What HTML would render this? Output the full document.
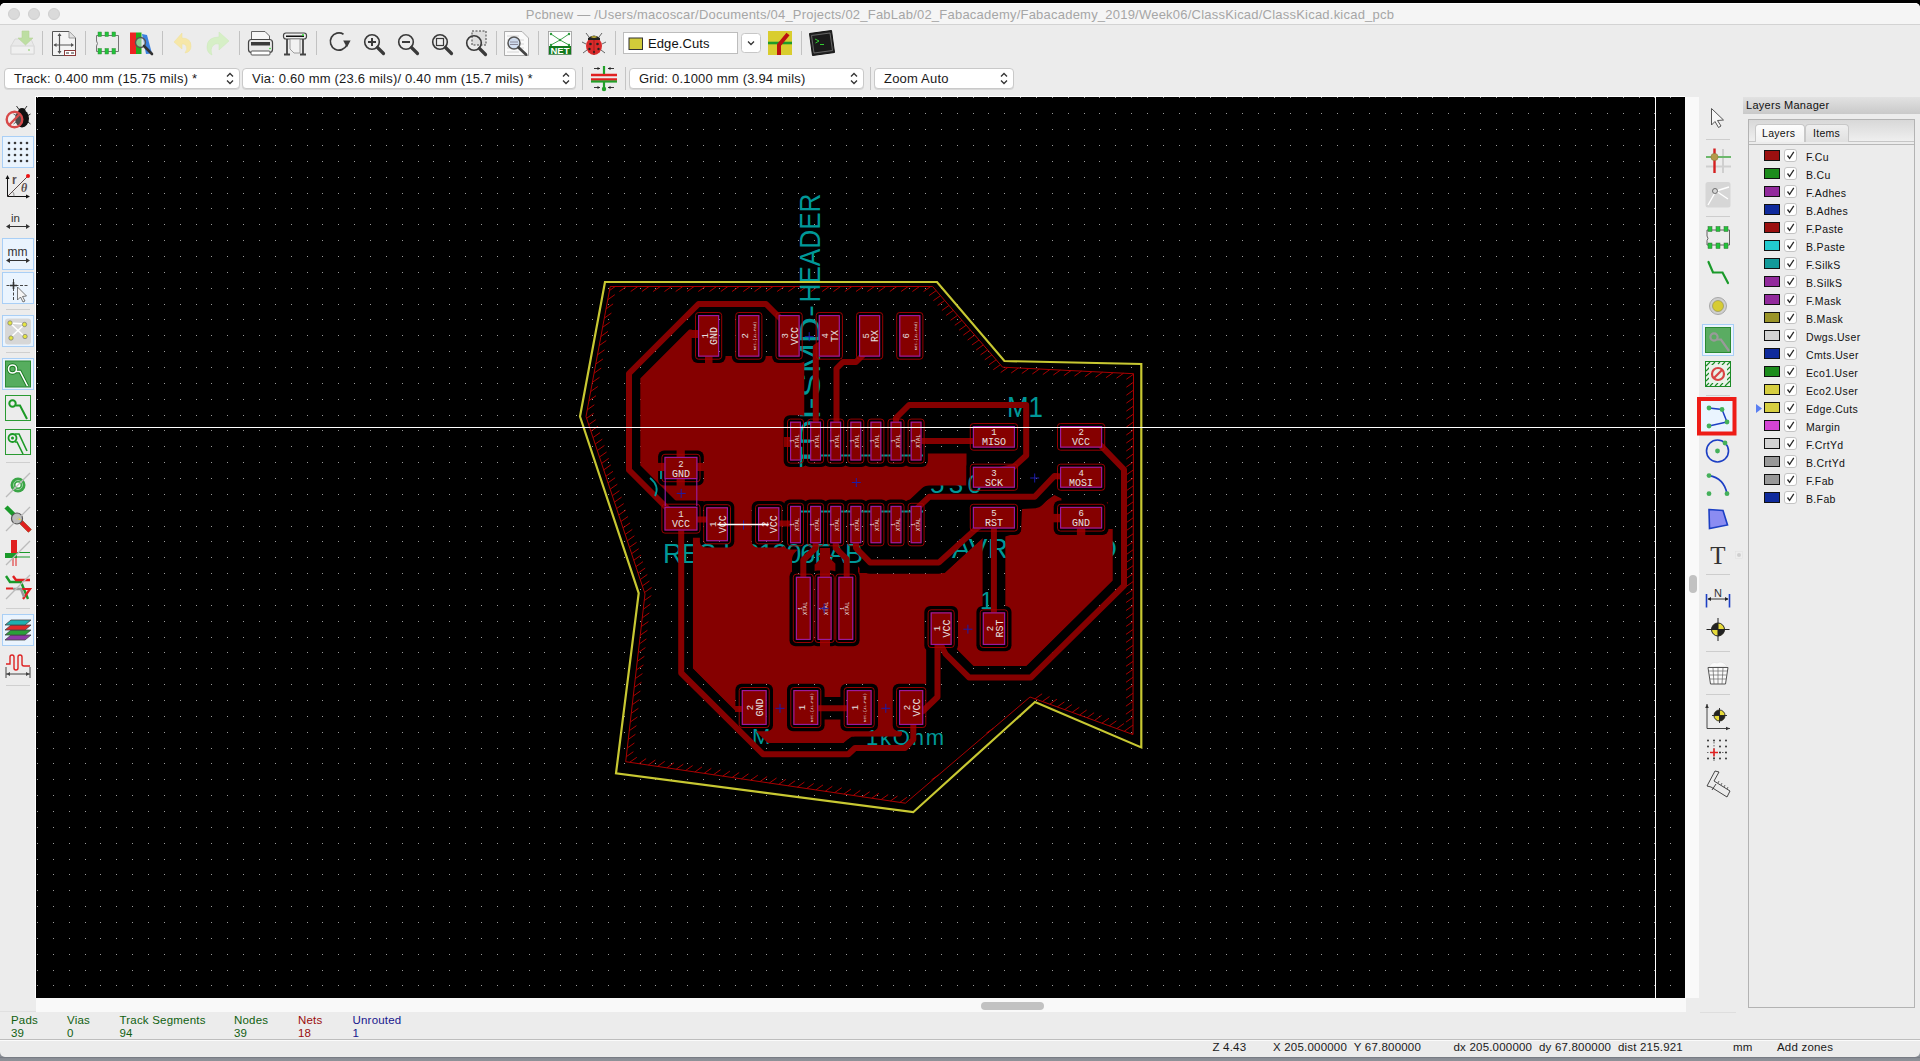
<!DOCTYPE html><html><head><meta charset="utf-8"><style>
*{margin:0;padding:0;box-sizing:border-box}
html,body{width:1920px;height:1061px;overflow:hidden;background:#000;font-family:"Liberation Sans",sans-serif}
.a{position:absolute}
#win{position:absolute;left:0;top:3px;width:1920px;height:1054px;background:#ececec;border-radius:5px}
#bot{position:absolute;left:0;top:1057px;width:1920px;height:4px;background:linear-gradient(#70747c,#8a8e96 40%,#8e9298)}
#title{position:absolute;left:0;top:3px;width:1920px;height:22px;border-radius:5px 5px 0 0;background:#f5f5f5;border-top:1px solid #fdfdfd;border-bottom:1px solid #d3d3d3}
#title .t{position:absolute;left:0;width:1920px;top:3px;text-align:center;font-size:13px;letter-spacing:0.22px;color:#a6a6a6;white-space:nowrap}
.tl{position:absolute;top:4px;width:12px;height:12px;border-radius:50%;background:#dadada;border:1px solid #cfcfcf}
.combo{position:absolute;height:21px;background:#fff;border:1px solid #c9c9c9;border-radius:4px;box-shadow:0 1px 0 #d8d8d8;font-size:13px;letter-spacing:0.2px;color:#1a1a1a;white-space:nowrap;padding-left:9px;line-height:19px}
.combo .ar{position:absolute;right:5px;top:3px}
.sep{position:absolute;width:1px;background:#c4c4c4}
.st{position:absolute;font-size:11.5px;letter-spacing:0.2px;white-space:nowrap;line-height:13px}
.lay{position:absolute;left:0;height:18px;width:170px}
.lay .sw{position:absolute;left:21px;top:2px;width:16px;height:11px;border:1px solid #111}
.lay .cb{position:absolute;left:41px;top:1px;width:13px;height:13px;background:#fff;border:1px solid #c4c4c4;border-radius:3px}
.lay .nm{position:absolute;left:63px;top:3px;font-size:10.5px;letter-spacing:0.35px;color:#111;white-space:nowrap;line-height:13px}
</style></head><body>
<div class="a" style="left:0;top:1040px;width:1920px;height:21px;background:#898d95"></div><div id="win"></div>
 <div id="title"><div class="tl" style="left:8px"></div><div class="tl" style="left:28px"></div><div class="tl" style="left:48px"></div>
  <div class="t">Pcbnew — /Users/macoscar/Documents/04_Projects/02_FabLab/02_Fabacademy/Fabacademy_2019/Week06/ClassKicad/ClassKicad.kicad_pcb</div></div>
<!-- toolbar row 1 -->
<svg class="a" style="left:0;top:25px" width="850" height="40" viewBox="0 25 850 40">
 <!-- save disabled -->
 <g opacity="0.9">
  <path d="M11 46 L15 39 H31 L34 46 V54 H11 Z" fill="#e9e9e9" stroke="#d6d6d6" stroke-width="1"/>
  <rect x="11" y="46" width="23" height="8" fill="#f1f1f1" stroke="#d6d6d6"/>
  <circle cx="29" cy="50" r="0.9" fill="#9ad37a"/>
  <path d="M22 31 H29 V38 H33 L25.5 45 L18 38 H22 Z" fill="#b9dd9a" stroke="#aed08e" stroke-width="0.6"/>
 </g>
 <rect x="42" y="31" width="1" height="24" fill="#c2c2c2"/>
 <!-- page settings -->
 <path d="M52.5 31.5 H69 L75.5 38 V55.5 H52.5 Z" fill="#f4f4f4" stroke="#555" stroke-width="1"/>
 <path d="M69 31.5 V38 H75.5" fill="#e2e2e2" stroke="#888" stroke-width="0.8"/>
 <path d="M59.5 34 V53 M54 45 H73" stroke="#555" stroke-width="1.2"/>
 <path d="M59.5 33 l-2 3 h4 z M59.5 54 l-2 -3 h4 z M53.5 45 l3 -2 v4 z M74 45 l-3 -2 v4 z" fill="#555"/>
 <rect x="64.5" y="50.5" width="11" height="5" fill="#fff" stroke="#8a3a3a" stroke-width="1"/>
 <path d="M66 53 h3 M71 53 h3" stroke="#333" stroke-width="1.2"/>
 <rect x="85" y="31" width="1" height="24" fill="#c2c2c2"/>
 <!-- footprint editor -->
 <path d="M96.5 35.5 H118.5 V51.5 H96.5 V46 Q98.5 43.5 96.5 41 Z" fill="none" stroke="#777" stroke-width="1"/>
 <g fill="#1fc43a" stroke="#3a8a3a" stroke-width="0.5"><rect x="98" y="32" width="3.5" height="4.5"/><rect x="105" y="32" width="3.5" height="4.5"/><rect x="112" y="32" width="3.5" height="4.5"/><rect x="98" y="48.5" width="3.5" height="5.5"/><rect x="105" y="48.5" width="3.5" height="5.5"/><rect x="112" y="48.5" width="3.5" height="5.5"/></g>
 <!-- library browser -->
 <rect x="130" y="32.5" width="6" height="21.5" fill="#e22"/>
 <rect x="136" y="32.5" width="5.5" height="21.5" fill="#2a2"/>
 <path d="M142 34 L147 35 L152 53.5 L146 54 Z" fill="#3b82e0"/>
 <circle cx="140.5" cy="42.5" r="5" fill="rgba(220,230,235,0.55)" stroke="#555" stroke-width="1.4"/>
 <path d="M144 46 L152 54" stroke="#333" stroke-width="2.6" stroke-linecap="round"/>
 <rect x="162" y="31" width="1" height="24" fill="#c2c2c2"/>
 <!-- undo -->
 <path d="M174 42 L182 33 V38 Q191 38 191 46 Q191 52 185 53 Q188 49 186 45.5 Q184.5 43.5 182 44 V49 Z" fill="#f6e7a8" stroke="#efe09a" stroke-width="0.5"/>
 <!-- redo -->
 <path d="M229 41 L219 32 V37 Q207 37 207 47 Q207 53 212 55 Q210 49 213 45.5 Q215.5 43 219 44 V50 Z" fill="#d6efc6" stroke="#cbe8b8" stroke-width="0.5"/>
 <rect x="239" y="31" width="1" height="24" fill="#c2c2c2"/>
 <!-- print -->
 <path d="M251.5 39.5 V31.5 H265 L269.5 36 V39.5" fill="#f6f6f6" stroke="#666" stroke-width="1"/>
 <rect x="248.5" y="39.5" width="24" height="13" rx="3" fill="#e9e9e9" stroke="#444" stroke-width="1.2"/>
 <rect x="251" y="42" width="19" height="3.5" fill="#3a3a3a"/>
 <rect x="251" y="51" width="19" height="4" rx="1" fill="#fff" stroke="#555"/>
 <circle cx="270" cy="48.5" r="0.8" fill="#2d2"/>
 <!-- plotter -->
 <rect x="283.5" y="33" width="23" height="6" rx="2.5" fill="#eee" stroke="#444" stroke-width="1.2"/>
 <rect x="286" y="35.5" width="18" height="1.5" fill="#111"/>
 <circle cx="303" cy="35" r="0.9" fill="#2d2"/>
 <path d="M287 39 V54 M303 39 V54 M284 54.5 H290 M300 54.5 H306" stroke="#444" stroke-width="1.8"/>
 <path d="M290 39 H300 V53 H294 L290 49 Z" fill="#f2f2f2" stroke="#888" stroke-width="0.8"/>
 <rect x="316" y="31" width="1" height="24" fill="#c2c2c2"/>
 <!-- refresh -->
 <path d="M343.5 34.2 A8.6 8.6 0 1 0 346.8 45" fill="none" stroke="#3a3a3a" stroke-width="1.7"/>
 <path d="M343.2 40.5 L350.6 40.5 L346.9 47.5 Z" fill="#3a3a3a"/>
 <!-- zoom in/out/fit/sel -->
 <g stroke="#3a3a3a" fill="none">
  <circle cx="372" cy="42" r="7.3" stroke-width="1.6"/><path d="M368 42 h8 M372 38 v8" stroke-width="2"/><path d="M377.5 47.5 L383.5 53.5" stroke-width="3.2" stroke-linecap="round"/>
  <circle cx="406" cy="42" r="7.3" stroke-width="1.6"/><path d="M402 42 h8" stroke-width="2"/><path d="M411.5 47.5 L417.5 53.5" stroke-width="3.2" stroke-linecap="round"/>
  <circle cx="440" cy="42" r="7.3" stroke-width="1.6"/><rect x="436.5" y="38.5" width="7" height="7" stroke-width="1.2" fill="#f0f0f0"/><path d="M445.5 47.5 L451.5 53.5" stroke-width="3.2" stroke-linecap="round"/>
  <rect x="472" y="31" width="14" height="14" fill="#dedede" stroke="#444" stroke-width="1" stroke-dasharray="2 1.5"/>
  <circle cx="474" cy="43" r="7.3" stroke-width="1.6"/><path d="M479.5 48.5 L485.5 54.5" stroke-width="3.2" stroke-linecap="round"/>
 </g>
 <rect x="496" y="31" width="1" height="24" fill="#c2c2c2"/>
 <!-- find -->
 <path d="M504.5 31.5 H522 L528.5 38 V55.5 H504.5 Z" fill="#fafafa" stroke="#999" stroke-width="0.8"/>
 <path d="M507 36 h12 M507 40 h17 M507 44 h17 M507 48 h17 M507 52 h12" stroke="#ccc" stroke-width="0.8"/>
 <circle cx="514" cy="43" r="6" fill="rgba(190,210,240,0.6)" stroke="#555" stroke-width="1.5"/>
 <path d="M510 42 h8 M510 44.5 h8" stroke="#889" stroke-width="1"/>
 <path d="M518.5 47.5 L526 54.5" stroke="#444" stroke-width="2.8" stroke-linecap="round"/>
 <rect x="538" y="31" width="1" height="24" fill="#c2c2c2"/>
 <!-- NET -->
 <rect x="548.5" y="31.5" width="23" height="23" fill="#fff" stroke="#999" stroke-width="0.8"/>
 <path d="M551 34 L560 40 L569 34 M551 45 L560 40 L569 45" fill="none" stroke="#2a9a3a" stroke-width="0.9"/>
 <g fill="#2a9a3a"><circle cx="551" cy="34" r="1.2"/><circle cx="569" cy="34" r="1.2"/><circle cx="560" cy="40" r="1.2"/><circle cx="551" cy="45" r="1.2"/><circle cx="569" cy="45" r="1.2"/></g>
 <rect x="549" y="46" width="22" height="8.5" fill="#137a1e"/>
 <text x="550.5" y="54" font-size="9.6" font-weight="bold" fill="#fff" textLength="19" lengthAdjust="spacingAndGlyphs" font-family="Liberation Sans">NET</text>
 <!-- bug -->
 <g>
  <path d="M589 37 L586 33 M599 37 L602 33 M586 44 L582 42 M602 44 L606 42 M587 50 L583 53 M601 50 L605 53" stroke="#555" stroke-width="0.9"/>
  <ellipse cx="594" cy="46" rx="8" ry="9" fill="#d92a2a"/>
  <path d="M588 38 Q594 33 600 38 L600 40 H588 Z" fill="#222"/>
  <path d="M590.5 37 L593.5 36 L594 38 Z M597.5 37 L594.5 36 L594 38 Z" fill="#e8d23a"/>
  <g fill="#222"><circle cx="590.5" cy="44" r="1.3"/><circle cx="597.5" cy="44" r="1.3"/><circle cx="589.5" cy="49" r="1.2"/><circle cx="598.5" cy="49" r="1.2"/><circle cx="594" cy="52" r="1"/></g>
  <path d="M594 40 V55" stroke="#611" stroke-width="0.5"/>
 </g>
 <rect x="615" y="31" width="1" height="24" fill="#c2c2c2"/>
 <!-- layer box -->
 <rect x="623.5" y="32.5" width="114" height="21" fill="#fff" stroke="#bdbdbd"/>
 <rect x="629" y="38" width="13.5" height="11.5" fill="#d1cb3a" stroke="#333" stroke-width="1"/>
 <text x="648" y="48.3" font-size="13" letter-spacing="0.1" fill="#111" font-family="Liberation Sans">Edge.Cuts</text>
 <rect x="741.5" y="33.5" width="19" height="19" rx="3" fill="#fff" stroke="#c7c7c7"/>
 <path d="M748 41.5 l3 3 l3 -3" fill="none" stroke="#333" stroke-width="1.3"/>
 <!-- track/via icon -->
 <rect x="768" y="31" width="24" height="24" fill="#d9cd2e"/>
 <path d="M768 43 H792" stroke="#1f9a2a" stroke-width="2.6"/>
 <path d="M779 55 V45 L788 34" fill="none" stroke="#b11" stroke-width="4"/>
 <rect x="801" y="31" width="1" height="24" fill="#c2c2c2"/>
 <!-- terminal -->
 <path d="M809.5 33.5 L831.5 30.5 L834.5 52.5 L812.5 55.5 Z" fill="#222" stroke="#111"/>
 <path d="M811.5 35.5 L830 33 L832.5 50.5 L814 53 Z" fill="#1a1a1a" stroke="#777" stroke-width="0.8"/>
 <path d="M815 39 L819 41 L815.5 43 M820 44.5 h4" stroke="#3c3" stroke-width="1" fill="none"/>
</svg>
<!-- row 2 -->
<div class="combo" style="left:4px;top:68px;width:236px">Track: 0.400 mm (15.75 mils) *<svg class="ar" width="8" height="13" viewBox="0 0 8 13"><path d="M1 4.5 L4 1.5 L7 4.5 M1 8.5 L4 11.5 L7 8.5" fill="none" stroke="#333" stroke-width="1.3"/></svg></div>
<div class="combo" style="left:242px;top:68px;width:334px">Via: 0.60 mm (23.6 mils)/ 0.40 mm (15.7 mils) *<svg class="ar" width="8" height="13" viewBox="0 0 8 13"><path d="M1 4.5 L4 1.5 L7 4.5 M1 8.5 L4 11.5 L7 8.5" fill="none" stroke="#333" stroke-width="1.3"/></svg></div>
<div class="sep" style="left:582px;top:67px;height:23px"></div>
<svg class="a" style="left:588px;top:64px" width="32" height="30" viewBox="588 64 32 30">
 <path d="M591 75 H617 M591 79.5 H617" stroke="#e02020" stroke-width="2.4"/>
 <path d="M591 81.5 H617" stroke="#22a02a" stroke-width="2.2"/>
 <path d="M604 66 V74 M604 82 V91" stroke="#22a02a" stroke-width="2.2"/>
 <circle cx="604" cy="89" r="2.2" fill="#22a02a"/>
 <path d="M594 68.5 h6 M608 68.5 h6 M594 87.5 h6 M608 87.5 h6" stroke="#222" stroke-width="0.9"/>
 <path d="M600 68.5 l-2.5 -1.5 v3 z M608 68.5 l2.5 -1.5 v3z M600 87.5 l-2.5 -1.5 v3 z M608 87.5 l2.5 -1.5 v3 z" fill="#222"/>
</svg>
<div class="sep" style="left:625px;top:67px;height:23px"></div>
<div class="combo" style="left:629px;top:68px;width:235px">Grid: 0.1000 mm (3.94 mils)<svg class="ar" width="8" height="13" viewBox="0 0 8 13"><path d="M1 4.5 L4 1.5 L7 4.5 M1 8.5 L4 11.5 L7 8.5" fill="none" stroke="#333" stroke-width="1.3"/></svg></div>
<div class="sep" style="left:870px;top:67px;height:23px"></div>
<div class="combo" style="left:874px;top:68px;width:140px">Zoom Auto<svg class="ar" width="8" height="13" viewBox="0 0 8 13"><path d="M1 4.5 L4 1.5 L7 4.5 M1 8.5 L4 11.5 L7 8.5" fill="none" stroke="#333" stroke-width="1.3"/></svg></div>
<svg class="a" style="left:0;top:97px" width="36" height="915" viewBox="0 97 36 915">
 <g fill="#eaf4fe" stroke="#a9cff6" stroke-width="1">
  <rect x="2.5" y="136.5" width="31" height="31"/>
  <rect x="2.5" y="238.5" width="31" height="31"/>
  <rect x="2.5" y="272.5" width="31" height="31"/>
  <rect x="2.5" y="315.5" width="31" height="31"/>
  <rect x="2.5" y="358.5" width="31" height="31"/>
  <rect x="2.5" y="614.5" width="31" height="31"/>
 </g>
 <g stroke="#cfcfcf" stroke-width="1"><path d="M6 309.5 H30 M6 352.5 H30 M6 462.5 H30 M6 608.5 H30 M6 685.5 H30"/></g>
 <!-- bug off -->
 <path d="M16.5 106 L19 109.5 M27 106 L24.5 109.5 M13.5 114 L16 115.5 M30.5 114 L28 115.5 M13.5 124 L16 122 M30.5 124 L28 122" stroke="#333" stroke-width="1"/>
 <ellipse cx="22" cy="118.5" rx="7" ry="9" fill="#111"/>
 <ellipse cx="22" cy="110.5" rx="3.5" ry="2.5" fill="#111"/>
 <circle cx="14.5" cy="119.5" r="7.8" fill="rgba(255,255,255,0.25)" stroke="#d84a4a" stroke-width="2.4"/>
 <path d="M9.2 125 L19.8 114" stroke="#d84a4a" stroke-width="2.4"/>
 <!-- grid -->
 <g fill="#3a3a3a"><circle cx="9" cy="143" r="1.3"/><circle cx="15" cy="143" r="1.3"/><circle cx="21" cy="143" r="1.3"/><circle cx="27" cy="143" r="1.3"/><circle cx="9" cy="149" r="1.3"/><circle cx="15" cy="149" r="1.3"/><circle cx="21" cy="149" r="1.3"/><circle cx="27" cy="149" r="1.3"/><circle cx="9" cy="155" r="1.3"/><circle cx="15" cy="155" r="1.3"/><circle cx="21" cy="155" r="1.3"/><circle cx="27" cy="155" r="1.3"/><circle cx="9" cy="161" r="1.3"/><circle cx="15" cy="161" r="1.3"/><circle cx="21" cy="161" r="1.3"/><circle cx="27" cy="161" r="1.3"/></g>
 <!-- polar -->
 <path d="M7.5 176 V196.5 H29" fill="none" stroke="#111" stroke-width="1"/>
 <path d="M7.5 175 l-2 4 h4 z M30 196.5 l-4 -2 v4 z" fill="#111"/>
 <path d="M8 196 L27.5 176.5" stroke="#5a4a4a" stroke-width="1"/>
 <path d="M14 196.5 A6 6 0 0 0 12.5 191.5" fill="none" stroke="#555" stroke-width="0.6"/>
 <circle cx="28" cy="176" r="2" fill="#e11"/>
 <text x="12" y="183.5" font-size="12" font-weight="bold" fill="#5a4f4f" font-family="Liberation Sans">r</text>
 <text x="21" y="191.5" font-size="12" font-weight="bold" font-style="italic" fill="#5a4f4f" font-family="Liberation Serif">θ</text>
 <!-- in -->
 <text x="11" y="222" font-size="11.5" fill="#333" font-family="Liberation Sans">in</text>
 <path d="M7 226.5 H29" stroke="#333" stroke-width="1"/><path d="M6 226.5 l4 -2.5 v5 z M30 226.5 l-4 -2.5 v5 z" fill="#333"/>
 <!-- mm -->
 <text x="7.5" y="255.5" font-size="12" fill="#333" font-family="Liberation Sans">mm</text>
 <path d="M7 260.5 H29" stroke="#333" stroke-width="1"/><path d="M6 260.5 l4 -2.5 v5 z M30 260.5 l-4 -2.5 v5 z" fill="#333"/>
 <!-- cursor -->
 <path d="M13.5 279 V300 M6.5 285.5 H29" stroke="#444" stroke-width="1" stroke-dasharray="3 1.5"/>
 <path d="M13.5 282 V289 M10 285.5 H17" stroke="#333" stroke-width="1.6"/>
 <path d="M17.5 287 V300 L20.5 297 L23 302 L25 301 L22.5 296.5 L26.5 296 Z" fill="#f4f4f4" stroke="#555" stroke-width="0.8"/>
 <!-- ratsnest -->
 <rect x="5" y="318.5" width="26" height="26" rx="3" fill="#d7d7d7"/>
 <path d="M10 323 L24 336 M25 324 L11 337 M10 323 L25 324" stroke="#fff" stroke-width="1.5"/>
 <g fill="#e6e640" stroke="#777" stroke-width="0.7"><circle cx="10" cy="323" r="2.2"/><circle cx="24.5" cy="324.5" r="2.2"/><circle cx="11" cy="338" r="2.2"/><circle cx="25" cy="336.5" r="2.2"/></g>
 <!-- zone filled -->
 <rect x="5.5" y="361" width="25" height="26" fill="#56ad5e" stroke="#2a8a32"/>
 <circle cx="12.5" cy="369" r="4" fill="none" stroke="#1a7a22" stroke-width="3.4"/>
 <path d="M16 371.5 H20 L27.5 386" fill="none" stroke="#1a7a22" stroke-width="3.4"/>
 <circle cx="12.5" cy="369" r="4" fill="none" stroke="#fff" stroke-width="1.6"/>
 <path d="M16 371.5 H20 L27.5 386" fill="none" stroke="#fff" stroke-width="1.6"/>
 <!-- zone outline -->
 <rect x="5.5" y="395.5" width="25" height="25" fill="none" stroke="#2a9a32" stroke-width="1"/>
 <circle cx="12.5" cy="403.5" r="3.2" fill="none" stroke="#1c9a26" stroke-width="2"/>
 <path d="M15.5 405.5 H20 L27 419" fill="none" stroke="#1c9a26" stroke-width="2"/>
 <rect x="5.5" y="429.5" width="25" height="25" fill="none" stroke="#2a9a32" stroke-width="1"/>
 <circle cx="12.5" cy="438" r="4" fill="none" stroke="#1c9a26" stroke-width="1.8"/>
 <circle cx="12.5" cy="438" r="1.5" fill="#1c9a26"/>
 <path d="M15 434 H19 L27 451 M15 442 H17 L23 454" fill="none" stroke="#1c9a26" stroke-width="1.6"/>
 <!-- via -->
 <circle cx="18" cy="485" r="7.5" fill="#3aa546"/><circle cx="18" cy="485" r="2.5" fill="#fff"/><circle cx="18" cy="485" r="4.5" fill="none" stroke="#9ed3a3" stroke-width="1"/>
 <path d="M6 497 L30 473" stroke="#bbb" stroke-width="1.2"/>
 <!-- 2 -->
 <path d="M6 507 L30 531" stroke="#1a9a2a" stroke-width="4.5"/><path d="M18 519 L30 531" stroke="#e02020" stroke-width="4.5"/>
 <circle cx="17" cy="518.5" r="5.5" fill="#bdbdbd" stroke="#555" stroke-width="1.2"/><path d="M16 520 l3 -3 l2 3z" fill="#e8d23a"/>
 <path d="M6 531 L30 507" stroke="#bbb" stroke-width="1.2"/>
 <!-- 3 -->
 <rect x="11" y="540" width="6" height="18" fill="#e02020"/><rect x="5" y="553" width="12" height="5" fill="#1a9a2a"/>
 <path d="M17 552.5 H30 M17 557 H30" stroke="#1a9a2a" stroke-width="1"/>
 <path d="M13 558 V566 M16 558 V566" stroke="#e02020" stroke-width="1"/>
 <path d="M6 565 L30 541" stroke="#bbb" stroke-width="1.2"/>
 <!-- 4 -->
 <path d="M6 576 L10 582 H21 L28 599" fill="none" stroke="#1a9a2a" stroke-width="2.4"/>
 <path d="M13 576 L16 580 H30" fill="none" stroke="#e02020" stroke-width="2.4"/>
 <path d="M6 588.5 H13 M19 589 H30 L23 599" fill="none" stroke="#e02020" stroke-width="2.2"/>
 <path d="M13 589 H21 L24 597" fill="none" stroke="#999" stroke-width="2.4"/>
 <path d="M6 599 L30 575" stroke="#bbb" stroke-width="1.2"/>
 <!-- layers -->
 <path d="M5 640 L11 635 H31 L25 640 Z" fill="#8e3aa8" stroke="#444" stroke-width="0.8"/>
 <path d="M5 635 L11 630 H31 L25 635 Z" fill="#2aa03a" stroke="#444" stroke-width="0.8"/>
 <path d="M5 630 L11 625 H31 L25 630 Z" fill="#e02a2a" stroke="#444" stroke-width="0.8"/>
 <path d="M5 625 L11 620 H31 L25 625 Z" fill="#1fb0b0" stroke="#444" stroke-width="0.8"/>
 <!-- meander -->
 <path d="M6 664 H10 V657 Q10 655 12 655 Q14 655 14 657 V668 Q14 670 16 670 Q18 670 18 668 V657 Q18 655 20 655 Q22 655 22 657 V664 Q22 666 24 666 H30" fill="none" stroke="#d22" stroke-width="1.4"/>
 <path d="M6 667 V678 M30 667 V678 M6 674 H30" stroke="#444" stroke-width="1"/>
 <path d="M6.5 674 l3.5 -2 v4 z M29.5 674 l-3.5 -2 v4 z" fill="#444"/>
 <path d="M0 1011.5 H36" stroke="#e0e0e0"/>
</svg>
<div class="a" style="left:35px;top:96px;width:1650px;height:902px;background:#000;border-left:1px solid #fff;border-top:1px solid #fff"></div>
<svg class="a" style="left:36px;top:97px" width="1649" height="901" viewBox="36 97 1649 901" shape-rendering="crispEdges"><path fill="#9a9a9a" d="M37 97h1v1h-1zM53 97h1v1h-1zM69 97h1v1h-1zM85 97h1v1h-1zM100 97h1v1h-1zM116 97h1v1h-1zM132 97h1v1h-1zM148 97h1v1h-1zM164 97h1v1h-1zM180 97h1v1h-1zM196 97h1v1h-1zM211 97h1v1h-1zM227 97h1v1h-1zM243 97h1v1h-1zM259 97h1v1h-1zM275 97h1v1h-1zM291 97h1v1h-1zM307 97h1v1h-1zM322 97h1v1h-1zM338 97h1v1h-1zM354 97h1v1h-1zM370 97h1v1h-1zM386 97h1v1h-1zM402 97h1v1h-1zM418 97h1v1h-1zM433 97h1v1h-1zM449 97h1v1h-1zM465 97h1v1h-1zM481 97h1v1h-1zM497 97h1v1h-1zM513 97h1v1h-1zM529 97h1v1h-1zM544 97h1v1h-1zM560 97h1v1h-1zM576 97h1v1h-1zM592 97h1v1h-1zM608 97h1v1h-1zM624 97h1v1h-1zM640 97h1v1h-1zM655 97h1v1h-1zM671 97h1v1h-1zM687 97h1v1h-1zM703 97h1v1h-1zM719 97h1v1h-1zM735 97h1v1h-1zM751 97h1v1h-1zM766 97h1v1h-1zM782 97h1v1h-1zM798 97h1v1h-1zM814 97h1v1h-1zM830 97h1v1h-1zM846 97h1v1h-1zM862 97h1v1h-1zM877 97h1v1h-1zM893 97h1v1h-1zM909 97h1v1h-1zM925 97h1v1h-1zM941 97h1v1h-1zM957 97h1v1h-1zM973 97h1v1h-1zM988 97h1v1h-1zM1004 97h1v1h-1zM1020 97h1v1h-1zM1036 97h1v1h-1zM1052 97h1v1h-1zM1068 97h1v1h-1zM1084 97h1v1h-1zM1099 97h1v1h-1zM1115 97h1v1h-1zM1131 97h1v1h-1zM1147 97h1v1h-1zM1163 97h1v1h-1zM1179 97h1v1h-1zM1195 97h1v1h-1zM1210 97h1v1h-1zM1226 97h1v1h-1zM1242 97h1v1h-1zM1258 97h1v1h-1zM1274 97h1v1h-1zM1290 97h1v1h-1zM1306 97h1v1h-1zM1321 97h1v1h-1zM1337 97h1v1h-1zM1353 97h1v1h-1zM1369 97h1v1h-1zM1385 97h1v1h-1zM1401 97h1v1h-1zM1417 97h1v1h-1zM1432 97h1v1h-1zM1448 97h1v1h-1zM1464 97h1v1h-1zM1480 97h1v1h-1zM1496 97h1v1h-1zM1512 97h1v1h-1zM1528 97h1v1h-1zM1543 97h1v1h-1zM1559 97h1v1h-1zM1575 97h1v1h-1zM1591 97h1v1h-1zM1607 97h1v1h-1zM1623 97h1v1h-1zM1639 97h1v1h-1zM1654 97h1v1h-1zM1670 97h1v1h-1zM37 113h1v1h-1zM53 113h1v1h-1zM69 113h1v1h-1zM85 113h1v1h-1zM100 113h1v1h-1zM116 113h1v1h-1zM132 113h1v1h-1zM148 113h1v1h-1zM164 113h1v1h-1zM180 113h1v1h-1zM196 113h1v1h-1zM211 113h1v1h-1zM227 113h1v1h-1zM243 113h1v1h-1zM259 113h1v1h-1zM275 113h1v1h-1zM291 113h1v1h-1zM307 113h1v1h-1zM322 113h1v1h-1zM338 113h1v1h-1zM354 113h1v1h-1zM370 113h1v1h-1zM386 113h1v1h-1zM402 113h1v1h-1zM418 113h1v1h-1zM433 113h1v1h-1zM449 113h1v1h-1zM465 113h1v1h-1zM481 113h1v1h-1zM497 113h1v1h-1zM513 113h1v1h-1zM529 113h1v1h-1zM544 113h1v1h-1zM560 113h1v1h-1zM576 113h1v1h-1zM592 113h1v1h-1zM608 113h1v1h-1zM624 113h1v1h-1zM640 113h1v1h-1zM655 113h1v1h-1zM671 113h1v1h-1zM687 113h1v1h-1zM703 113h1v1h-1zM719 113h1v1h-1zM735 113h1v1h-1zM751 113h1v1h-1zM766 113h1v1h-1zM782 113h1v1h-1zM798 113h1v1h-1zM814 113h1v1h-1zM830 113h1v1h-1zM846 113h1v1h-1zM862 113h1v1h-1zM877 113h1v1h-1zM893 113h1v1h-1zM909 113h1v1h-1zM925 113h1v1h-1zM941 113h1v1h-1zM957 113h1v1h-1zM973 113h1v1h-1zM988 113h1v1h-1zM1004 113h1v1h-1zM1020 113h1v1h-1zM1036 113h1v1h-1zM1052 113h1v1h-1zM1068 113h1v1h-1zM1084 113h1v1h-1zM1099 113h1v1h-1zM1115 113h1v1h-1zM1131 113h1v1h-1zM1147 113h1v1h-1zM1163 113h1v1h-1zM1179 113h1v1h-1zM1195 113h1v1h-1zM1210 113h1v1h-1zM1226 113h1v1h-1zM1242 113h1v1h-1zM1258 113h1v1h-1zM1274 113h1v1h-1zM1290 113h1v1h-1zM1306 113h1v1h-1zM1321 113h1v1h-1zM1337 113h1v1h-1zM1353 113h1v1h-1zM1369 113h1v1h-1zM1385 113h1v1h-1zM1401 113h1v1h-1zM1417 113h1v1h-1zM1432 113h1v1h-1zM1448 113h1v1h-1zM1464 113h1v1h-1zM1480 113h1v1h-1zM1496 113h1v1h-1zM1512 113h1v1h-1zM1528 113h1v1h-1zM1543 113h1v1h-1zM1559 113h1v1h-1zM1575 113h1v1h-1zM1591 113h1v1h-1zM1607 113h1v1h-1zM1623 113h1v1h-1zM1639 113h1v1h-1zM1654 113h1v1h-1zM1670 113h1v1h-1zM37 129h1v1h-1zM53 129h1v1h-1zM69 129h1v1h-1zM85 129h1v1h-1zM100 129h1v1h-1zM116 129h1v1h-1zM132 129h1v1h-1zM148 129h1v1h-1zM164 129h1v1h-1zM180 129h1v1h-1zM196 129h1v1h-1zM211 129h1v1h-1zM227 129h1v1h-1zM243 129h1v1h-1zM259 129h1v1h-1zM275 129h1v1h-1zM291 129h1v1h-1zM307 129h1v1h-1zM322 129h1v1h-1zM338 129h1v1h-1zM354 129h1v1h-1zM370 129h1v1h-1zM386 129h1v1h-1zM402 129h1v1h-1zM418 129h1v1h-1zM433 129h1v1h-1zM449 129h1v1h-1zM465 129h1v1h-1zM481 129h1v1h-1zM497 129h1v1h-1zM513 129h1v1h-1zM529 129h1v1h-1zM544 129h1v1h-1zM560 129h1v1h-1zM576 129h1v1h-1zM592 129h1v1h-1zM608 129h1v1h-1zM624 129h1v1h-1zM640 129h1v1h-1zM655 129h1v1h-1zM671 129h1v1h-1zM687 129h1v1h-1zM703 129h1v1h-1zM719 129h1v1h-1zM735 129h1v1h-1zM751 129h1v1h-1zM766 129h1v1h-1zM782 129h1v1h-1zM798 129h1v1h-1zM814 129h1v1h-1zM830 129h1v1h-1zM846 129h1v1h-1zM862 129h1v1h-1zM877 129h1v1h-1zM893 129h1v1h-1zM909 129h1v1h-1zM925 129h1v1h-1zM941 129h1v1h-1zM957 129h1v1h-1zM973 129h1v1h-1zM988 129h1v1h-1zM1004 129h1v1h-1zM1020 129h1v1h-1zM1036 129h1v1h-1zM1052 129h1v1h-1zM1068 129h1v1h-1zM1084 129h1v1h-1zM1099 129h1v1h-1zM1115 129h1v1h-1zM1131 129h1v1h-1zM1147 129h1v1h-1zM1163 129h1v1h-1zM1179 129h1v1h-1zM1195 129h1v1h-1zM1210 129h1v1h-1zM1226 129h1v1h-1zM1242 129h1v1h-1zM1258 129h1v1h-1zM1274 129h1v1h-1zM1290 129h1v1h-1zM1306 129h1v1h-1zM1321 129h1v1h-1zM1337 129h1v1h-1zM1353 129h1v1h-1zM1369 129h1v1h-1zM1385 129h1v1h-1zM1401 129h1v1h-1zM1417 129h1v1h-1zM1432 129h1v1h-1zM1448 129h1v1h-1zM1464 129h1v1h-1zM1480 129h1v1h-1zM1496 129h1v1h-1zM1512 129h1v1h-1zM1528 129h1v1h-1zM1543 129h1v1h-1zM1559 129h1v1h-1zM1575 129h1v1h-1zM1591 129h1v1h-1zM1607 129h1v1h-1zM1623 129h1v1h-1zM1639 129h1v1h-1zM1654 129h1v1h-1zM1670 129h1v1h-1zM37 145h1v1h-1zM53 145h1v1h-1zM69 145h1v1h-1zM85 145h1v1h-1zM100 145h1v1h-1zM116 145h1v1h-1zM132 145h1v1h-1zM148 145h1v1h-1zM164 145h1v1h-1zM180 145h1v1h-1zM196 145h1v1h-1zM211 145h1v1h-1zM227 145h1v1h-1zM243 145h1v1h-1zM259 145h1v1h-1zM275 145h1v1h-1zM291 145h1v1h-1zM307 145h1v1h-1zM322 145h1v1h-1zM338 145h1v1h-1zM354 145h1v1h-1zM370 145h1v1h-1zM386 145h1v1h-1zM402 145h1v1h-1zM418 145h1v1h-1zM433 145h1v1h-1zM449 145h1v1h-1zM465 145h1v1h-1zM481 145h1v1h-1zM497 145h1v1h-1zM513 145h1v1h-1zM529 145h1v1h-1zM544 145h1v1h-1zM560 145h1v1h-1zM576 145h1v1h-1zM592 145h1v1h-1zM608 145h1v1h-1zM624 145h1v1h-1zM640 145h1v1h-1zM655 145h1v1h-1zM671 145h1v1h-1zM687 145h1v1h-1zM703 145h1v1h-1zM719 145h1v1h-1zM735 145h1v1h-1zM751 145h1v1h-1zM766 145h1v1h-1zM782 145h1v1h-1zM798 145h1v1h-1zM814 145h1v1h-1zM830 145h1v1h-1zM846 145h1v1h-1zM862 145h1v1h-1zM877 145h1v1h-1zM893 145h1v1h-1zM909 145h1v1h-1zM925 145h1v1h-1zM941 145h1v1h-1zM957 145h1v1h-1zM973 145h1v1h-1zM988 145h1v1h-1zM1004 145h1v1h-1zM1020 145h1v1h-1zM1036 145h1v1h-1zM1052 145h1v1h-1zM1068 145h1v1h-1zM1084 145h1v1h-1zM1099 145h1v1h-1zM1115 145h1v1h-1zM1131 145h1v1h-1zM1147 145h1v1h-1zM1163 145h1v1h-1zM1179 145h1v1h-1zM1195 145h1v1h-1zM1210 145h1v1h-1zM1226 145h1v1h-1zM1242 145h1v1h-1zM1258 145h1v1h-1zM1274 145h1v1h-1zM1290 145h1v1h-1zM1306 145h1v1h-1zM1321 145h1v1h-1zM1337 145h1v1h-1zM1353 145h1v1h-1zM1369 145h1v1h-1zM1385 145h1v1h-1zM1401 145h1v1h-1zM1417 145h1v1h-1zM1432 145h1v1h-1zM1448 145h1v1h-1zM1464 145h1v1h-1zM1480 145h1v1h-1zM1496 145h1v1h-1zM1512 145h1v1h-1zM1528 145h1v1h-1zM1543 145h1v1h-1zM1559 145h1v1h-1zM1575 145h1v1h-1zM1591 145h1v1h-1zM1607 145h1v1h-1zM1623 145h1v1h-1zM1639 145h1v1h-1zM1654 145h1v1h-1zM1670 145h1v1h-1zM37 161h1v1h-1zM53 161h1v1h-1zM69 161h1v1h-1zM85 161h1v1h-1zM100 161h1v1h-1zM116 161h1v1h-1zM132 161h1v1h-1zM148 161h1v1h-1zM164 161h1v1h-1zM180 161h1v1h-1zM196 161h1v1h-1zM211 161h1v1h-1zM227 161h1v1h-1zM243 161h1v1h-1zM259 161h1v1h-1zM275 161h1v1h-1zM291 161h1v1h-1zM307 161h1v1h-1zM322 161h1v1h-1zM338 161h1v1h-1zM354 161h1v1h-1zM370 161h1v1h-1zM386 161h1v1h-1zM402 161h1v1h-1zM418 161h1v1h-1zM433 161h1v1h-1zM449 161h1v1h-1zM465 161h1v1h-1zM481 161h1v1h-1zM497 161h1v1h-1zM513 161h1v1h-1zM529 161h1v1h-1zM544 161h1v1h-1zM560 161h1v1h-1zM576 161h1v1h-1zM592 161h1v1h-1zM608 161h1v1h-1zM624 161h1v1h-1zM640 161h1v1h-1zM655 161h1v1h-1zM671 161h1v1h-1zM687 161h1v1h-1zM703 161h1v1h-1zM719 161h1v1h-1zM735 161h1v1h-1zM751 161h1v1h-1zM766 161h1v1h-1zM782 161h1v1h-1zM798 161h1v1h-1zM814 161h1v1h-1zM830 161h1v1h-1zM846 161h1v1h-1zM862 161h1v1h-1zM877 161h1v1h-1zM893 161h1v1h-1zM909 161h1v1h-1zM925 161h1v1h-1zM941 161h1v1h-1zM957 161h1v1h-1zM973 161h1v1h-1zM988 161h1v1h-1zM1004 161h1v1h-1zM1020 161h1v1h-1zM1036 161h1v1h-1zM1052 161h1v1h-1zM1068 161h1v1h-1zM1084 161h1v1h-1zM1099 161h1v1h-1zM1115 161h1v1h-1zM1131 161h1v1h-1zM1147 161h1v1h-1zM1163 161h1v1h-1zM1179 161h1v1h-1zM1195 161h1v1h-1zM1210 161h1v1h-1zM1226 161h1v1h-1zM1242 161h1v1h-1zM1258 161h1v1h-1zM1274 161h1v1h-1zM1290 161h1v1h-1zM1306 161h1v1h-1zM1321 161h1v1h-1zM1337 161h1v1h-1zM1353 161h1v1h-1zM1369 161h1v1h-1zM1385 161h1v1h-1zM1401 161h1v1h-1zM1417 161h1v1h-1zM1432 161h1v1h-1zM1448 161h1v1h-1zM1464 161h1v1h-1zM1480 161h1v1h-1zM1496 161h1v1h-1zM1512 161h1v1h-1zM1528 161h1v1h-1zM1543 161h1v1h-1zM1559 161h1v1h-1zM1575 161h1v1h-1zM1591 161h1v1h-1zM1607 161h1v1h-1zM1623 161h1v1h-1zM1639 161h1v1h-1zM1654 161h1v1h-1zM1670 161h1v1h-1zM37 177h1v1h-1zM53 177h1v1h-1zM69 177h1v1h-1zM85 177h1v1h-1zM100 177h1v1h-1zM116 177h1v1h-1zM132 177h1v1h-1zM148 177h1v1h-1zM164 177h1v1h-1zM180 177h1v1h-1zM196 177h1v1h-1zM211 177h1v1h-1zM227 177h1v1h-1zM243 177h1v1h-1zM259 177h1v1h-1zM275 177h1v1h-1zM291 177h1v1h-1zM307 177h1v1h-1zM322 177h1v1h-1zM338 177h1v1h-1zM354 177h1v1h-1zM370 177h1v1h-1zM386 177h1v1h-1zM402 177h1v1h-1zM418 177h1v1h-1zM433 177h1v1h-1zM449 177h1v1h-1zM465 177h1v1h-1zM481 177h1v1h-1zM497 177h1v1h-1zM513 177h1v1h-1zM529 177h1v1h-1zM544 177h1v1h-1zM560 177h1v1h-1zM576 177h1v1h-1zM592 177h1v1h-1zM608 177h1v1h-1zM624 177h1v1h-1zM640 177h1v1h-1zM655 177h1v1h-1zM671 177h1v1h-1zM687 177h1v1h-1zM703 177h1v1h-1zM719 177h1v1h-1zM735 177h1v1h-1zM751 177h1v1h-1zM766 177h1v1h-1zM782 177h1v1h-1zM798 177h1v1h-1zM814 177h1v1h-1zM830 177h1v1h-1zM846 177h1v1h-1zM862 177h1v1h-1zM877 177h1v1h-1zM893 177h1v1h-1zM909 177h1v1h-1zM925 177h1v1h-1zM941 177h1v1h-1zM957 177h1v1h-1zM973 177h1v1h-1zM988 177h1v1h-1zM1004 177h1v1h-1zM1020 177h1v1h-1zM1036 177h1v1h-1zM1052 177h1v1h-1zM1068 177h1v1h-1zM1084 177h1v1h-1zM1099 177h1v1h-1zM1115 177h1v1h-1zM1131 177h1v1h-1zM1147 177h1v1h-1zM1163 177h1v1h-1zM1179 177h1v1h-1zM1195 177h1v1h-1zM1210 177h1v1h-1zM1226 177h1v1h-1zM1242 177h1v1h-1zM1258 177h1v1h-1zM1274 177h1v1h-1zM1290 177h1v1h-1zM1306 177h1v1h-1zM1321 177h1v1h-1zM1337 177h1v1h-1zM1353 177h1v1h-1zM1369 177h1v1h-1zM1385 177h1v1h-1zM1401 177h1v1h-1zM1417 177h1v1h-1zM1432 177h1v1h-1zM1448 177h1v1h-1zM1464 177h1v1h-1zM1480 177h1v1h-1zM1496 177h1v1h-1zM1512 177h1v1h-1zM1528 177h1v1h-1zM1543 177h1v1h-1zM1559 177h1v1h-1zM1575 177h1v1h-1zM1591 177h1v1h-1zM1607 177h1v1h-1zM1623 177h1v1h-1zM1639 177h1v1h-1zM1654 177h1v1h-1zM1670 177h1v1h-1zM37 193h1v1h-1zM53 193h1v1h-1zM69 193h1v1h-1zM85 193h1v1h-1zM100 193h1v1h-1zM116 193h1v1h-1zM132 193h1v1h-1zM148 193h1v1h-1zM164 193h1v1h-1zM180 193h1v1h-1zM196 193h1v1h-1zM211 193h1v1h-1zM227 193h1v1h-1zM243 193h1v1h-1zM259 193h1v1h-1zM275 193h1v1h-1zM291 193h1v1h-1zM307 193h1v1h-1zM322 193h1v1h-1zM338 193h1v1h-1zM354 193h1v1h-1zM370 193h1v1h-1zM386 193h1v1h-1zM402 193h1v1h-1zM418 193h1v1h-1zM433 193h1v1h-1zM449 193h1v1h-1zM465 193h1v1h-1zM481 193h1v1h-1zM497 193h1v1h-1zM513 193h1v1h-1zM529 193h1v1h-1zM544 193h1v1h-1zM560 193h1v1h-1zM576 193h1v1h-1zM592 193h1v1h-1zM608 193h1v1h-1zM624 193h1v1h-1zM640 193h1v1h-1zM655 193h1v1h-1zM671 193h1v1h-1zM687 193h1v1h-1zM703 193h1v1h-1zM719 193h1v1h-1zM735 193h1v1h-1zM751 193h1v1h-1zM766 193h1v1h-1zM782 193h1v1h-1zM798 193h1v1h-1zM814 193h1v1h-1zM830 193h1v1h-1zM846 193h1v1h-1zM862 193h1v1h-1zM877 193h1v1h-1zM893 193h1v1h-1zM909 193h1v1h-1zM925 193h1v1h-1zM941 193h1v1h-1zM957 193h1v1h-1zM973 193h1v1h-1zM988 193h1v1h-1zM1004 193h1v1h-1zM1020 193h1v1h-1zM1036 193h1v1h-1zM1052 193h1v1h-1zM1068 193h1v1h-1zM1084 193h1v1h-1zM1099 193h1v1h-1zM1115 193h1v1h-1zM1131 193h1v1h-1zM1147 193h1v1h-1zM1163 193h1v1h-1zM1179 193h1v1h-1zM1195 193h1v1h-1zM1210 193h1v1h-1zM1226 193h1v1h-1zM1242 193h1v1h-1zM1258 193h1v1h-1zM1274 193h1v1h-1zM1290 193h1v1h-1zM1306 193h1v1h-1zM1321 193h1v1h-1zM1337 193h1v1h-1zM1353 193h1v1h-1zM1369 193h1v1h-1zM1385 193h1v1h-1zM1401 193h1v1h-1zM1417 193h1v1h-1zM1432 193h1v1h-1zM1448 193h1v1h-1zM1464 193h1v1h-1zM1480 193h1v1h-1zM1496 193h1v1h-1zM1512 193h1v1h-1zM1528 193h1v1h-1zM1543 193h1v1h-1zM1559 193h1v1h-1zM1575 193h1v1h-1zM1591 193h1v1h-1zM1607 193h1v1h-1zM1623 193h1v1h-1zM1639 193h1v1h-1zM1654 193h1v1h-1zM1670 193h1v1h-1zM37 208h1v1h-1zM53 208h1v1h-1zM69 208h1v1h-1zM85 208h1v1h-1zM100 208h1v1h-1zM116 208h1v1h-1zM132 208h1v1h-1zM148 208h1v1h-1zM164 208h1v1h-1zM180 208h1v1h-1zM196 208h1v1h-1zM211 208h1v1h-1zM227 208h1v1h-1zM243 208h1v1h-1zM259 208h1v1h-1zM275 208h1v1h-1zM291 208h1v1h-1zM307 208h1v1h-1zM322 208h1v1h-1zM338 208h1v1h-1zM354 208h1v1h-1zM370 208h1v1h-1zM386 208h1v1h-1zM402 208h1v1h-1zM418 208h1v1h-1zM433 208h1v1h-1zM449 208h1v1h-1zM465 208h1v1h-1zM481 208h1v1h-1zM497 208h1v1h-1zM513 208h1v1h-1zM529 208h1v1h-1zM544 208h1v1h-1zM560 208h1v1h-1zM576 208h1v1h-1zM592 208h1v1h-1zM608 208h1v1h-1zM624 208h1v1h-1zM640 208h1v1h-1zM655 208h1v1h-1zM671 208h1v1h-1zM687 208h1v1h-1zM703 208h1v1h-1zM719 208h1v1h-1zM735 208h1v1h-1zM751 208h1v1h-1zM766 208h1v1h-1zM782 208h1v1h-1zM798 208h1v1h-1zM814 208h1v1h-1zM830 208h1v1h-1zM846 208h1v1h-1zM862 208h1v1h-1zM877 208h1v1h-1zM893 208h1v1h-1zM909 208h1v1h-1zM925 208h1v1h-1zM941 208h1v1h-1zM957 208h1v1h-1zM973 208h1v1h-1zM988 208h1v1h-1zM1004 208h1v1h-1zM1020 208h1v1h-1zM1036 208h1v1h-1zM1052 208h1v1h-1zM1068 208h1v1h-1zM1084 208h1v1h-1zM1099 208h1v1h-1zM1115 208h1v1h-1zM1131 208h1v1h-1zM1147 208h1v1h-1zM1163 208h1v1h-1zM1179 208h1v1h-1zM1195 208h1v1h-1zM1210 208h1v1h-1zM1226 208h1v1h-1zM1242 208h1v1h-1zM1258 208h1v1h-1zM1274 208h1v1h-1zM1290 208h1v1h-1zM1306 208h1v1h-1zM1321 208h1v1h-1zM1337 208h1v1h-1zM1353 208h1v1h-1zM1369 208h1v1h-1zM1385 208h1v1h-1zM1401 208h1v1h-1zM1417 208h1v1h-1zM1432 208h1v1h-1zM1448 208h1v1h-1zM1464 208h1v1h-1zM1480 208h1v1h-1zM1496 208h1v1h-1zM1512 208h1v1h-1zM1528 208h1v1h-1zM1543 208h1v1h-1zM1559 208h1v1h-1zM1575 208h1v1h-1zM1591 208h1v1h-1zM1607 208h1v1h-1zM1623 208h1v1h-1zM1639 208h1v1h-1zM1654 208h1v1h-1zM1670 208h1v1h-1zM37 224h1v1h-1zM53 224h1v1h-1zM69 224h1v1h-1zM85 224h1v1h-1zM100 224h1v1h-1zM116 224h1v1h-1zM132 224h1v1h-1zM148 224h1v1h-1zM164 224h1v1h-1zM180 224h1v1h-1zM196 224h1v1h-1zM211 224h1v1h-1zM227 224h1v1h-1zM243 224h1v1h-1zM259 224h1v1h-1zM275 224h1v1h-1zM291 224h1v1h-1zM307 224h1v1h-1zM322 224h1v1h-1zM338 224h1v1h-1zM354 224h1v1h-1zM370 224h1v1h-1zM386 224h1v1h-1zM402 224h1v1h-1zM418 224h1v1h-1zM433 224h1v1h-1zM449 224h1v1h-1zM465 224h1v1h-1zM481 224h1v1h-1zM497 224h1v1h-1zM513 224h1v1h-1zM529 224h1v1h-1zM544 224h1v1h-1zM560 224h1v1h-1zM576 224h1v1h-1zM592 224h1v1h-1zM608 224h1v1h-1zM624 224h1v1h-1zM640 224h1v1h-1zM655 224h1v1h-1zM671 224h1v1h-1zM687 224h1v1h-1zM703 224h1v1h-1zM719 224h1v1h-1zM735 224h1v1h-1zM751 224h1v1h-1zM766 224h1v1h-1zM782 224h1v1h-1zM798 224h1v1h-1zM814 224h1v1h-1zM830 224h1v1h-1zM846 224h1v1h-1zM862 224h1v1h-1zM877 224h1v1h-1zM893 224h1v1h-1zM909 224h1v1h-1zM925 224h1v1h-1zM941 224h1v1h-1zM957 224h1v1h-1zM973 224h1v1h-1zM988 224h1v1h-1zM1004 224h1v1h-1zM1020 224h1v1h-1zM1036 224h1v1h-1zM1052 224h1v1h-1zM1068 224h1v1h-1zM1084 224h1v1h-1zM1099 224h1v1h-1zM1115 224h1v1h-1zM1131 224h1v1h-1zM1147 224h1v1h-1zM1163 224h1v1h-1zM1179 224h1v1h-1zM1195 224h1v1h-1zM1210 224h1v1h-1zM1226 224h1v1h-1zM1242 224h1v1h-1zM1258 224h1v1h-1zM1274 224h1v1h-1zM1290 224h1v1h-1zM1306 224h1v1h-1zM1321 224h1v1h-1zM1337 224h1v1h-1zM1353 224h1v1h-1zM1369 224h1v1h-1zM1385 224h1v1h-1zM1401 224h1v1h-1zM1417 224h1v1h-1zM1432 224h1v1h-1zM1448 224h1v1h-1zM1464 224h1v1h-1zM1480 224h1v1h-1zM1496 224h1v1h-1zM1512 224h1v1h-1zM1528 224h1v1h-1zM1543 224h1v1h-1zM1559 224h1v1h-1zM1575 224h1v1h-1zM1591 224h1v1h-1zM1607 224h1v1h-1zM1623 224h1v1h-1zM1639 224h1v1h-1zM1654 224h1v1h-1zM1670 224h1v1h-1zM37 240h1v1h-1zM53 240h1v1h-1zM69 240h1v1h-1zM85 240h1v1h-1zM100 240h1v1h-1zM116 240h1v1h-1zM132 240h1v1h-1zM148 240h1v1h-1zM164 240h1v1h-1zM180 240h1v1h-1zM196 240h1v1h-1zM211 240h1v1h-1zM227 240h1v1h-1zM243 240h1v1h-1zM259 240h1v1h-1zM275 240h1v1h-1zM291 240h1v1h-1zM307 240h1v1h-1zM322 240h1v1h-1zM338 240h1v1h-1zM354 240h1v1h-1zM370 240h1v1h-1zM386 240h1v1h-1zM402 240h1v1h-1zM418 240h1v1h-1zM433 240h1v1h-1zM449 240h1v1h-1zM465 240h1v1h-1zM481 240h1v1h-1zM497 240h1v1h-1zM513 240h1v1h-1zM529 240h1v1h-1zM544 240h1v1h-1zM560 240h1v1h-1zM576 240h1v1h-1zM592 240h1v1h-1zM608 240h1v1h-1zM624 240h1v1h-1zM640 240h1v1h-1zM655 240h1v1h-1zM671 240h1v1h-1zM687 240h1v1h-1zM703 240h1v1h-1zM719 240h1v1h-1zM735 240h1v1h-1zM751 240h1v1h-1zM766 240h1v1h-1zM782 240h1v1h-1zM798 240h1v1h-1zM814 240h1v1h-1zM830 240h1v1h-1zM846 240h1v1h-1zM862 240h1v1h-1zM877 240h1v1h-1zM893 240h1v1h-1zM909 240h1v1h-1zM925 240h1v1h-1zM941 240h1v1h-1zM957 240h1v1h-1zM973 240h1v1h-1zM988 240h1v1h-1zM1004 240h1v1h-1zM1020 240h1v1h-1zM1036 240h1v1h-1zM1052 240h1v1h-1zM1068 240h1v1h-1zM1084 240h1v1h-1zM1099 240h1v1h-1zM1115 240h1v1h-1zM1131 240h1v1h-1zM1147 240h1v1h-1zM1163 240h1v1h-1zM1179 240h1v1h-1zM1195 240h1v1h-1zM1210 240h1v1h-1zM1226 240h1v1h-1zM1242 240h1v1h-1zM1258 240h1v1h-1zM1274 240h1v1h-1zM1290 240h1v1h-1zM1306 240h1v1h-1zM1321 240h1v1h-1zM1337 240h1v1h-1zM1353 240h1v1h-1zM1369 240h1v1h-1zM1385 240h1v1h-1zM1401 240h1v1h-1zM1417 240h1v1h-1zM1432 240h1v1h-1zM1448 240h1v1h-1zM1464 240h1v1h-1zM1480 240h1v1h-1zM1496 240h1v1h-1zM1512 240h1v1h-1zM1528 240h1v1h-1zM1543 240h1v1h-1zM1559 240h1v1h-1zM1575 240h1v1h-1zM1591 240h1v1h-1zM1607 240h1v1h-1zM1623 240h1v1h-1zM1639 240h1v1h-1zM1654 240h1v1h-1zM1670 240h1v1h-1zM37 256h1v1h-1zM53 256h1v1h-1zM69 256h1v1h-1zM85 256h1v1h-1zM100 256h1v1h-1zM116 256h1v1h-1zM132 256h1v1h-1zM148 256h1v1h-1zM164 256h1v1h-1zM180 256h1v1h-1zM196 256h1v1h-1zM211 256h1v1h-1zM227 256h1v1h-1zM243 256h1v1h-1zM259 256h1v1h-1zM275 256h1v1h-1zM291 256h1v1h-1zM307 256h1v1h-1zM322 256h1v1h-1zM338 256h1v1h-1zM354 256h1v1h-1zM370 256h1v1h-1zM386 256h1v1h-1zM402 256h1v1h-1zM418 256h1v1h-1zM433 256h1v1h-1zM449 256h1v1h-1zM465 256h1v1h-1zM481 256h1v1h-1zM497 256h1v1h-1zM513 256h1v1h-1zM529 256h1v1h-1zM544 256h1v1h-1zM560 256h1v1h-1zM576 256h1v1h-1zM592 256h1v1h-1zM608 256h1v1h-1zM624 256h1v1h-1zM640 256h1v1h-1zM655 256h1v1h-1zM671 256h1v1h-1zM687 256h1v1h-1zM703 256h1v1h-1zM719 256h1v1h-1zM735 256h1v1h-1zM751 256h1v1h-1zM766 256h1v1h-1zM782 256h1v1h-1zM798 256h1v1h-1zM814 256h1v1h-1zM830 256h1v1h-1zM846 256h1v1h-1zM862 256h1v1h-1zM877 256h1v1h-1zM893 256h1v1h-1zM909 256h1v1h-1zM925 256h1v1h-1zM941 256h1v1h-1zM957 256h1v1h-1zM973 256h1v1h-1zM988 256h1v1h-1zM1004 256h1v1h-1zM1020 256h1v1h-1zM1036 256h1v1h-1zM1052 256h1v1h-1zM1068 256h1v1h-1zM1084 256h1v1h-1zM1099 256h1v1h-1zM1115 256h1v1h-1zM1131 256h1v1h-1zM1147 256h1v1h-1zM1163 256h1v1h-1zM1179 256h1v1h-1zM1195 256h1v1h-1zM1210 256h1v1h-1zM1226 256h1v1h-1zM1242 256h1v1h-1zM1258 256h1v1h-1zM1274 256h1v1h-1zM1290 256h1v1h-1zM1306 256h1v1h-1zM1321 256h1v1h-1zM1337 256h1v1h-1zM1353 256h1v1h-1zM1369 256h1v1h-1zM1385 256h1v1h-1zM1401 256h1v1h-1zM1417 256h1v1h-1zM1432 256h1v1h-1zM1448 256h1v1h-1zM1464 256h1v1h-1zM1480 256h1v1h-1zM1496 256h1v1h-1zM1512 256h1v1h-1zM1528 256h1v1h-1zM1543 256h1v1h-1zM1559 256h1v1h-1zM1575 256h1v1h-1zM1591 256h1v1h-1zM1607 256h1v1h-1zM1623 256h1v1h-1zM1639 256h1v1h-1zM1654 256h1v1h-1zM1670 256h1v1h-1zM37 272h1v1h-1zM53 272h1v1h-1zM69 272h1v1h-1zM85 272h1v1h-1zM100 272h1v1h-1zM116 272h1v1h-1zM132 272h1v1h-1zM148 272h1v1h-1zM164 272h1v1h-1zM180 272h1v1h-1zM196 272h1v1h-1zM211 272h1v1h-1zM227 272h1v1h-1zM243 272h1v1h-1zM259 272h1v1h-1zM275 272h1v1h-1zM291 272h1v1h-1zM307 272h1v1h-1zM322 272h1v1h-1zM338 272h1v1h-1zM354 272h1v1h-1zM370 272h1v1h-1zM386 272h1v1h-1zM402 272h1v1h-1zM418 272h1v1h-1zM433 272h1v1h-1zM449 272h1v1h-1zM465 272h1v1h-1zM481 272h1v1h-1zM497 272h1v1h-1zM513 272h1v1h-1zM529 272h1v1h-1zM544 272h1v1h-1zM560 272h1v1h-1zM576 272h1v1h-1zM592 272h1v1h-1zM608 272h1v1h-1zM624 272h1v1h-1zM640 272h1v1h-1zM655 272h1v1h-1zM671 272h1v1h-1zM687 272h1v1h-1zM703 272h1v1h-1zM719 272h1v1h-1zM735 272h1v1h-1zM751 272h1v1h-1zM766 272h1v1h-1zM782 272h1v1h-1zM798 272h1v1h-1zM814 272h1v1h-1zM830 272h1v1h-1zM846 272h1v1h-1zM862 272h1v1h-1zM877 272h1v1h-1zM893 272h1v1h-1zM909 272h1v1h-1zM925 272h1v1h-1zM941 272h1v1h-1zM957 272h1v1h-1zM973 272h1v1h-1zM988 272h1v1h-1zM1004 272h1v1h-1zM1020 272h1v1h-1zM1036 272h1v1h-1zM1052 272h1v1h-1zM1068 272h1v1h-1zM1084 272h1v1h-1zM1099 272h1v1h-1zM1115 272h1v1h-1zM1131 272h1v1h-1zM1147 272h1v1h-1zM1163 272h1v1h-1zM1179 272h1v1h-1zM1195 272h1v1h-1zM1210 272h1v1h-1zM1226 272h1v1h-1zM1242 272h1v1h-1zM1258 272h1v1h-1zM1274 272h1v1h-1zM1290 272h1v1h-1zM1306 272h1v1h-1zM1321 272h1v1h-1zM1337 272h1v1h-1zM1353 272h1v1h-1zM1369 272h1v1h-1zM1385 272h1v1h-1zM1401 272h1v1h-1zM1417 272h1v1h-1zM1432 272h1v1h-1zM1448 272h1v1h-1zM1464 272h1v1h-1zM1480 272h1v1h-1zM1496 272h1v1h-1zM1512 272h1v1h-1zM1528 272h1v1h-1zM1543 272h1v1h-1zM1559 272h1v1h-1zM1575 272h1v1h-1zM1591 272h1v1h-1zM1607 272h1v1h-1zM1623 272h1v1h-1zM1639 272h1v1h-1zM1654 272h1v1h-1zM1670 272h1v1h-1zM37 288h1v1h-1zM53 288h1v1h-1zM69 288h1v1h-1zM85 288h1v1h-1zM100 288h1v1h-1zM116 288h1v1h-1zM132 288h1v1h-1zM148 288h1v1h-1zM164 288h1v1h-1zM180 288h1v1h-1zM196 288h1v1h-1zM211 288h1v1h-1zM227 288h1v1h-1zM243 288h1v1h-1zM259 288h1v1h-1zM275 288h1v1h-1zM291 288h1v1h-1zM307 288h1v1h-1zM322 288h1v1h-1zM338 288h1v1h-1zM354 288h1v1h-1zM370 288h1v1h-1zM386 288h1v1h-1zM402 288h1v1h-1zM418 288h1v1h-1zM433 288h1v1h-1zM449 288h1v1h-1zM465 288h1v1h-1zM481 288h1v1h-1zM497 288h1v1h-1zM513 288h1v1h-1zM529 288h1v1h-1zM544 288h1v1h-1zM560 288h1v1h-1zM576 288h1v1h-1zM592 288h1v1h-1zM608 288h1v1h-1zM624 288h1v1h-1zM640 288h1v1h-1zM655 288h1v1h-1zM671 288h1v1h-1zM687 288h1v1h-1zM703 288h1v1h-1zM719 288h1v1h-1zM735 288h1v1h-1zM751 288h1v1h-1zM766 288h1v1h-1zM782 288h1v1h-1zM798 288h1v1h-1zM814 288h1v1h-1zM830 288h1v1h-1zM846 288h1v1h-1zM862 288h1v1h-1zM877 288h1v1h-1zM893 288h1v1h-1zM909 288h1v1h-1zM925 288h1v1h-1zM941 288h1v1h-1zM957 288h1v1h-1zM973 288h1v1h-1zM988 288h1v1h-1zM1004 288h1v1h-1zM1020 288h1v1h-1zM1036 288h1v1h-1zM1052 288h1v1h-1zM1068 288h1v1h-1zM1084 288h1v1h-1zM1099 288h1v1h-1zM1115 288h1v1h-1zM1131 288h1v1h-1zM1147 288h1v1h-1zM1163 288h1v1h-1zM1179 288h1v1h-1zM1195 288h1v1h-1zM1210 288h1v1h-1zM1226 288h1v1h-1zM1242 288h1v1h-1zM1258 288h1v1h-1zM1274 288h1v1h-1zM1290 288h1v1h-1zM1306 288h1v1h-1zM1321 288h1v1h-1zM1337 288h1v1h-1zM1353 288h1v1h-1zM1369 288h1v1h-1zM1385 288h1v1h-1zM1401 288h1v1h-1zM1417 288h1v1h-1zM1432 288h1v1h-1zM1448 288h1v1h-1zM1464 288h1v1h-1zM1480 288h1v1h-1zM1496 288h1v1h-1zM1512 288h1v1h-1zM1528 288h1v1h-1zM1543 288h1v1h-1zM1559 288h1v1h-1zM1575 288h1v1h-1zM1591 288h1v1h-1zM1607 288h1v1h-1zM1623 288h1v1h-1zM1639 288h1v1h-1zM1654 288h1v1h-1zM1670 288h1v1h-1zM37 304h1v1h-1zM53 304h1v1h-1zM69 304h1v1h-1zM85 304h1v1h-1zM100 304h1v1h-1zM116 304h1v1h-1zM132 304h1v1h-1zM148 304h1v1h-1zM164 304h1v1h-1zM180 304h1v1h-1zM196 304h1v1h-1zM211 304h1v1h-1zM227 304h1v1h-1zM243 304h1v1h-1zM259 304h1v1h-1zM275 304h1v1h-1zM291 304h1v1h-1zM307 304h1v1h-1zM322 304h1v1h-1zM338 304h1v1h-1zM354 304h1v1h-1zM370 304h1v1h-1zM386 304h1v1h-1zM402 304h1v1h-1zM418 304h1v1h-1zM433 304h1v1h-1zM449 304h1v1h-1zM465 304h1v1h-1zM481 304h1v1h-1zM497 304h1v1h-1zM513 304h1v1h-1zM529 304h1v1h-1zM544 304h1v1h-1zM560 304h1v1h-1zM576 304h1v1h-1zM592 304h1v1h-1zM608 304h1v1h-1zM624 304h1v1h-1zM640 304h1v1h-1zM655 304h1v1h-1zM671 304h1v1h-1zM687 304h1v1h-1zM703 304h1v1h-1zM719 304h1v1h-1zM735 304h1v1h-1zM751 304h1v1h-1zM766 304h1v1h-1zM782 304h1v1h-1zM798 304h1v1h-1zM814 304h1v1h-1zM830 304h1v1h-1zM846 304h1v1h-1zM862 304h1v1h-1zM877 304h1v1h-1zM893 304h1v1h-1zM909 304h1v1h-1zM925 304h1v1h-1zM941 304h1v1h-1zM957 304h1v1h-1zM973 304h1v1h-1zM988 304h1v1h-1zM1004 304h1v1h-1zM1020 304h1v1h-1zM1036 304h1v1h-1zM1052 304h1v1h-1zM1068 304h1v1h-1zM1084 304h1v1h-1zM1099 304h1v1h-1zM1115 304h1v1h-1zM1131 304h1v1h-1zM1147 304h1v1h-1zM1163 304h1v1h-1zM1179 304h1v1h-1zM1195 304h1v1h-1zM1210 304h1v1h-1zM1226 304h1v1h-1zM1242 304h1v1h-1zM1258 304h1v1h-1zM1274 304h1v1h-1zM1290 304h1v1h-1zM1306 304h1v1h-1zM1321 304h1v1h-1zM1337 304h1v1h-1zM1353 304h1v1h-1zM1369 304h1v1h-1zM1385 304h1v1h-1zM1401 304h1v1h-1zM1417 304h1v1h-1zM1432 304h1v1h-1zM1448 304h1v1h-1zM1464 304h1v1h-1zM1480 304h1v1h-1zM1496 304h1v1h-1zM1512 304h1v1h-1zM1528 304h1v1h-1zM1543 304h1v1h-1zM1559 304h1v1h-1zM1575 304h1v1h-1zM1591 304h1v1h-1zM1607 304h1v1h-1zM1623 304h1v1h-1zM1639 304h1v1h-1zM1654 304h1v1h-1zM1670 304h1v1h-1zM37 319h1v1h-1zM53 319h1v1h-1zM69 319h1v1h-1zM85 319h1v1h-1zM100 319h1v1h-1zM116 319h1v1h-1zM132 319h1v1h-1zM148 319h1v1h-1zM164 319h1v1h-1zM180 319h1v1h-1zM196 319h1v1h-1zM211 319h1v1h-1zM227 319h1v1h-1zM243 319h1v1h-1zM259 319h1v1h-1zM275 319h1v1h-1zM291 319h1v1h-1zM307 319h1v1h-1zM322 319h1v1h-1zM338 319h1v1h-1zM354 319h1v1h-1zM370 319h1v1h-1zM386 319h1v1h-1zM402 319h1v1h-1zM418 319h1v1h-1zM433 319h1v1h-1zM449 319h1v1h-1zM465 319h1v1h-1zM481 319h1v1h-1zM497 319h1v1h-1zM513 319h1v1h-1zM529 319h1v1h-1zM544 319h1v1h-1zM560 319h1v1h-1zM576 319h1v1h-1zM592 319h1v1h-1zM608 319h1v1h-1zM624 319h1v1h-1zM640 319h1v1h-1zM655 319h1v1h-1zM671 319h1v1h-1zM687 319h1v1h-1zM703 319h1v1h-1zM719 319h1v1h-1zM735 319h1v1h-1zM751 319h1v1h-1zM766 319h1v1h-1zM782 319h1v1h-1zM798 319h1v1h-1zM814 319h1v1h-1zM830 319h1v1h-1zM846 319h1v1h-1zM862 319h1v1h-1zM877 319h1v1h-1zM893 319h1v1h-1zM909 319h1v1h-1zM925 319h1v1h-1zM941 319h1v1h-1zM957 319h1v1h-1zM973 319h1v1h-1zM988 319h1v1h-1zM1004 319h1v1h-1zM1020 319h1v1h-1zM1036 319h1v1h-1zM1052 319h1v1h-1zM1068 319h1v1h-1zM1084 319h1v1h-1zM1099 319h1v1h-1zM1115 319h1v1h-1zM1131 319h1v1h-1zM1147 319h1v1h-1zM1163 319h1v1h-1zM1179 319h1v1h-1zM1195 319h1v1h-1zM1210 319h1v1h-1zM1226 319h1v1h-1zM1242 319h1v1h-1zM1258 319h1v1h-1zM1274 319h1v1h-1zM1290 319h1v1h-1zM1306 319h1v1h-1zM1321 319h1v1h-1zM1337 319h1v1h-1zM1353 319h1v1h-1zM1369 319h1v1h-1zM1385 319h1v1h-1zM1401 319h1v1h-1zM1417 319h1v1h-1zM1432 319h1v1h-1zM1448 319h1v1h-1zM1464 319h1v1h-1zM1480 319h1v1h-1zM1496 319h1v1h-1zM1512 319h1v1h-1zM1528 319h1v1h-1zM1543 319h1v1h-1zM1559 319h1v1h-1zM1575 319h1v1h-1zM1591 319h1v1h-1zM1607 319h1v1h-1zM1623 319h1v1h-1zM1639 319h1v1h-1zM1654 319h1v1h-1zM1670 319h1v1h-1zM37 335h1v1h-1zM53 335h1v1h-1zM69 335h1v1h-1zM85 335h1v1h-1zM100 335h1v1h-1zM116 335h1v1h-1zM132 335h1v1h-1zM148 335h1v1h-1zM164 335h1v1h-1zM180 335h1v1h-1zM196 335h1v1h-1zM211 335h1v1h-1zM227 335h1v1h-1zM243 335h1v1h-1zM259 335h1v1h-1zM275 335h1v1h-1zM291 335h1v1h-1zM307 335h1v1h-1zM322 335h1v1h-1zM338 335h1v1h-1zM354 335h1v1h-1zM370 335h1v1h-1zM386 335h1v1h-1zM402 335h1v1h-1zM418 335h1v1h-1zM433 335h1v1h-1zM449 335h1v1h-1zM465 335h1v1h-1zM481 335h1v1h-1zM497 335h1v1h-1zM513 335h1v1h-1zM529 335h1v1h-1zM544 335h1v1h-1zM560 335h1v1h-1zM576 335h1v1h-1zM592 335h1v1h-1zM608 335h1v1h-1zM624 335h1v1h-1zM640 335h1v1h-1zM655 335h1v1h-1zM671 335h1v1h-1zM687 335h1v1h-1zM703 335h1v1h-1zM719 335h1v1h-1zM735 335h1v1h-1zM751 335h1v1h-1zM766 335h1v1h-1zM782 335h1v1h-1zM798 335h1v1h-1zM814 335h1v1h-1zM830 335h1v1h-1zM846 335h1v1h-1zM862 335h1v1h-1zM877 335h1v1h-1zM893 335h1v1h-1zM909 335h1v1h-1zM925 335h1v1h-1zM941 335h1v1h-1zM957 335h1v1h-1zM973 335h1v1h-1zM988 335h1v1h-1zM1004 335h1v1h-1zM1020 335h1v1h-1zM1036 335h1v1h-1zM1052 335h1v1h-1zM1068 335h1v1h-1zM1084 335h1v1h-1zM1099 335h1v1h-1zM1115 335h1v1h-1zM1131 335h1v1h-1zM1147 335h1v1h-1zM1163 335h1v1h-1zM1179 335h1v1h-1zM1195 335h1v1h-1zM1210 335h1v1h-1zM1226 335h1v1h-1zM1242 335h1v1h-1zM1258 335h1v1h-1zM1274 335h1v1h-1zM1290 335h1v1h-1zM1306 335h1v1h-1zM1321 335h1v1h-1zM1337 335h1v1h-1zM1353 335h1v1h-1zM1369 335h1v1h-1zM1385 335h1v1h-1zM1401 335h1v1h-1zM1417 335h1v1h-1zM1432 335h1v1h-1zM1448 335h1v1h-1zM1464 335h1v1h-1zM1480 335h1v1h-1zM1496 335h1v1h-1zM1512 335h1v1h-1zM1528 335h1v1h-1zM1543 335h1v1h-1zM1559 335h1v1h-1zM1575 335h1v1h-1zM1591 335h1v1h-1zM1607 335h1v1h-1zM1623 335h1v1h-1zM1639 335h1v1h-1zM1654 335h1v1h-1zM1670 335h1v1h-1zM37 351h1v1h-1zM53 351h1v1h-1zM69 351h1v1h-1zM85 351h1v1h-1zM100 351h1v1h-1zM116 351h1v1h-1zM132 351h1v1h-1zM148 351h1v1h-1zM164 351h1v1h-1zM180 351h1v1h-1zM196 351h1v1h-1zM211 351h1v1h-1zM227 351h1v1h-1zM243 351h1v1h-1zM259 351h1v1h-1zM275 351h1v1h-1zM291 351h1v1h-1zM307 351h1v1h-1zM322 351h1v1h-1zM338 351h1v1h-1zM354 351h1v1h-1zM370 351h1v1h-1zM386 351h1v1h-1zM402 351h1v1h-1zM418 351h1v1h-1zM433 351h1v1h-1zM449 351h1v1h-1zM465 351h1v1h-1zM481 351h1v1h-1zM497 351h1v1h-1zM513 351h1v1h-1zM529 351h1v1h-1zM544 351h1v1h-1zM560 351h1v1h-1zM576 351h1v1h-1zM592 351h1v1h-1zM608 351h1v1h-1zM624 351h1v1h-1zM640 351h1v1h-1zM655 351h1v1h-1zM671 351h1v1h-1zM687 351h1v1h-1zM703 351h1v1h-1zM719 351h1v1h-1zM735 351h1v1h-1zM751 351h1v1h-1zM766 351h1v1h-1zM782 351h1v1h-1zM798 351h1v1h-1zM814 351h1v1h-1zM830 351h1v1h-1zM846 351h1v1h-1zM862 351h1v1h-1zM877 351h1v1h-1zM893 351h1v1h-1zM909 351h1v1h-1zM925 351h1v1h-1zM941 351h1v1h-1zM957 351h1v1h-1zM973 351h1v1h-1zM988 351h1v1h-1zM1004 351h1v1h-1zM1020 351h1v1h-1zM1036 351h1v1h-1zM1052 351h1v1h-1zM1068 351h1v1h-1zM1084 351h1v1h-1zM1099 351h1v1h-1zM1115 351h1v1h-1zM1131 351h1v1h-1zM1147 351h1v1h-1zM1163 351h1v1h-1zM1179 351h1v1h-1zM1195 351h1v1h-1zM1210 351h1v1h-1zM1226 351h1v1h-1zM1242 351h1v1h-1zM1258 351h1v1h-1zM1274 351h1v1h-1zM1290 351h1v1h-1zM1306 351h1v1h-1zM1321 351h1v1h-1zM1337 351h1v1h-1zM1353 351h1v1h-1zM1369 351h1v1h-1zM1385 351h1v1h-1zM1401 351h1v1h-1zM1417 351h1v1h-1zM1432 351h1v1h-1zM1448 351h1v1h-1zM1464 351h1v1h-1zM1480 351h1v1h-1zM1496 351h1v1h-1zM1512 351h1v1h-1zM1528 351h1v1h-1zM1543 351h1v1h-1zM1559 351h1v1h-1zM1575 351h1v1h-1zM1591 351h1v1h-1zM1607 351h1v1h-1zM1623 351h1v1h-1zM1639 351h1v1h-1zM1654 351h1v1h-1zM1670 351h1v1h-1zM37 367h1v1h-1zM53 367h1v1h-1zM69 367h1v1h-1zM85 367h1v1h-1zM100 367h1v1h-1zM116 367h1v1h-1zM132 367h1v1h-1zM148 367h1v1h-1zM164 367h1v1h-1zM180 367h1v1h-1zM196 367h1v1h-1zM211 367h1v1h-1zM227 367h1v1h-1zM243 367h1v1h-1zM259 367h1v1h-1zM275 367h1v1h-1zM291 367h1v1h-1zM307 367h1v1h-1zM322 367h1v1h-1zM338 367h1v1h-1zM354 367h1v1h-1zM370 367h1v1h-1zM386 367h1v1h-1zM402 367h1v1h-1zM418 367h1v1h-1zM433 367h1v1h-1zM449 367h1v1h-1zM465 367h1v1h-1zM481 367h1v1h-1zM497 367h1v1h-1zM513 367h1v1h-1zM529 367h1v1h-1zM544 367h1v1h-1zM560 367h1v1h-1zM576 367h1v1h-1zM592 367h1v1h-1zM608 367h1v1h-1zM624 367h1v1h-1zM640 367h1v1h-1zM655 367h1v1h-1zM671 367h1v1h-1zM687 367h1v1h-1zM703 367h1v1h-1zM719 367h1v1h-1zM735 367h1v1h-1zM751 367h1v1h-1zM766 367h1v1h-1zM782 367h1v1h-1zM798 367h1v1h-1zM814 367h1v1h-1zM830 367h1v1h-1zM846 367h1v1h-1zM862 367h1v1h-1zM877 367h1v1h-1zM893 367h1v1h-1zM909 367h1v1h-1zM925 367h1v1h-1zM941 367h1v1h-1zM957 367h1v1h-1zM973 367h1v1h-1zM988 367h1v1h-1zM1004 367h1v1h-1zM1020 367h1v1h-1zM1036 367h1v1h-1zM1052 367h1v1h-1zM1068 367h1v1h-1zM1084 367h1v1h-1zM1099 367h1v1h-1zM1115 367h1v1h-1zM1131 367h1v1h-1zM1147 367h1v1h-1zM1163 367h1v1h-1zM1179 367h1v1h-1zM1195 367h1v1h-1zM1210 367h1v1h-1zM1226 367h1v1h-1zM1242 367h1v1h-1zM1258 367h1v1h-1zM1274 367h1v1h-1zM1290 367h1v1h-1zM1306 367h1v1h-1zM1321 367h1v1h-1zM1337 367h1v1h-1zM1353 367h1v1h-1zM1369 367h1v1h-1zM1385 367h1v1h-1zM1401 367h1v1h-1zM1417 367h1v1h-1zM1432 367h1v1h-1zM1448 367h1v1h-1zM1464 367h1v1h-1zM1480 367h1v1h-1zM1496 367h1v1h-1zM1512 367h1v1h-1zM1528 367h1v1h-1zM1543 367h1v1h-1zM1559 367h1v1h-1zM1575 367h1v1h-1zM1591 367h1v1h-1zM1607 367h1v1h-1zM1623 367h1v1h-1zM1639 367h1v1h-1zM1654 367h1v1h-1zM1670 367h1v1h-1zM37 383h1v1h-1zM53 383h1v1h-1zM69 383h1v1h-1zM85 383h1v1h-1zM100 383h1v1h-1zM116 383h1v1h-1zM132 383h1v1h-1zM148 383h1v1h-1zM164 383h1v1h-1zM180 383h1v1h-1zM196 383h1v1h-1zM211 383h1v1h-1zM227 383h1v1h-1zM243 383h1v1h-1zM259 383h1v1h-1zM275 383h1v1h-1zM291 383h1v1h-1zM307 383h1v1h-1zM322 383h1v1h-1zM338 383h1v1h-1zM354 383h1v1h-1zM370 383h1v1h-1zM386 383h1v1h-1zM402 383h1v1h-1zM418 383h1v1h-1zM433 383h1v1h-1zM449 383h1v1h-1zM465 383h1v1h-1zM481 383h1v1h-1zM497 383h1v1h-1zM513 383h1v1h-1zM529 383h1v1h-1zM544 383h1v1h-1zM560 383h1v1h-1zM576 383h1v1h-1zM592 383h1v1h-1zM608 383h1v1h-1zM624 383h1v1h-1zM640 383h1v1h-1zM655 383h1v1h-1zM671 383h1v1h-1zM687 383h1v1h-1zM703 383h1v1h-1zM719 383h1v1h-1zM735 383h1v1h-1zM751 383h1v1h-1zM766 383h1v1h-1zM782 383h1v1h-1zM798 383h1v1h-1zM814 383h1v1h-1zM830 383h1v1h-1zM846 383h1v1h-1zM862 383h1v1h-1zM877 383h1v1h-1zM893 383h1v1h-1zM909 383h1v1h-1zM925 383h1v1h-1zM941 383h1v1h-1zM957 383h1v1h-1zM973 383h1v1h-1zM988 383h1v1h-1zM1004 383h1v1h-1zM1020 383h1v1h-1zM1036 383h1v1h-1zM1052 383h1v1h-1zM1068 383h1v1h-1zM1084 383h1v1h-1zM1099 383h1v1h-1zM1115 383h1v1h-1zM1131 383h1v1h-1zM1147 383h1v1h-1zM1163 383h1v1h-1zM1179 383h1v1h-1zM1195 383h1v1h-1zM1210 383h1v1h-1zM1226 383h1v1h-1zM1242 383h1v1h-1zM1258 383h1v1h-1zM1274 383h1v1h-1zM1290 383h1v1h-1zM1306 383h1v1h-1zM1321 383h1v1h-1zM1337 383h1v1h-1zM1353 383h1v1h-1zM1369 383h1v1h-1zM1385 383h1v1h-1zM1401 383h1v1h-1zM1417 383h1v1h-1zM1432 383h1v1h-1zM1448 383h1v1h-1zM1464 383h1v1h-1zM1480 383h1v1h-1zM1496 383h1v1h-1zM1512 383h1v1h-1zM1528 383h1v1h-1zM1543 383h1v1h-1zM1559 383h1v1h-1zM1575 383h1v1h-1zM1591 383h1v1h-1zM1607 383h1v1h-1zM1623 383h1v1h-1zM1639 383h1v1h-1zM1654 383h1v1h-1zM1670 383h1v1h-1zM37 399h1v1h-1zM53 399h1v1h-1zM69 399h1v1h-1zM85 399h1v1h-1zM100 399h1v1h-1zM116 399h1v1h-1zM132 399h1v1h-1zM148 399h1v1h-1zM164 399h1v1h-1zM180 399h1v1h-1zM196 399h1v1h-1zM211 399h1v1h-1zM227 399h1v1h-1zM243 399h1v1h-1zM259 399h1v1h-1zM275 399h1v1h-1zM291 399h1v1h-1zM307 399h1v1h-1zM322 399h1v1h-1zM338 399h1v1h-1zM354 399h1v1h-1zM370 399h1v1h-1zM386 399h1v1h-1zM402 399h1v1h-1zM418 399h1v1h-1zM433 399h1v1h-1zM449 399h1v1h-1zM465 399h1v1h-1zM481 399h1v1h-1zM497 399h1v1h-1zM513 399h1v1h-1zM529 399h1v1h-1zM544 399h1v1h-1zM560 399h1v1h-1zM576 399h1v1h-1zM592 399h1v1h-1zM608 399h1v1h-1zM624 399h1v1h-1zM640 399h1v1h-1zM655 399h1v1h-1zM671 399h1v1h-1zM687 399h1v1h-1zM703 399h1v1h-1zM719 399h1v1h-1zM735 399h1v1h-1zM751 399h1v1h-1zM766 399h1v1h-1zM782 399h1v1h-1zM798 399h1v1h-1zM814 399h1v1h-1zM830 399h1v1h-1zM846 399h1v1h-1zM862 399h1v1h-1zM877 399h1v1h-1zM893 399h1v1h-1zM909 399h1v1h-1zM925 399h1v1h-1zM941 399h1v1h-1zM957 399h1v1h-1zM973 399h1v1h-1zM988 399h1v1h-1zM1004 399h1v1h-1zM1020 399h1v1h-1zM1036 399h1v1h-1zM1052 399h1v1h-1zM1068 399h1v1h-1zM1084 399h1v1h-1zM1099 399h1v1h-1zM1115 399h1v1h-1zM1131 399h1v1h-1zM1147 399h1v1h-1zM1163 399h1v1h-1zM1179 399h1v1h-1zM1195 399h1v1h-1zM1210 399h1v1h-1zM1226 399h1v1h-1zM1242 399h1v1h-1zM1258 399h1v1h-1zM1274 399h1v1h-1zM1290 399h1v1h-1zM1306 399h1v1h-1zM1321 399h1v1h-1zM1337 399h1v1h-1zM1353 399h1v1h-1zM1369 399h1v1h-1zM1385 399h1v1h-1zM1401 399h1v1h-1zM1417 399h1v1h-1zM1432 399h1v1h-1zM1448 399h1v1h-1zM1464 399h1v1h-1zM1480 399h1v1h-1zM1496 399h1v1h-1zM1512 399h1v1h-1zM1528 399h1v1h-1zM1543 399h1v1h-1zM1559 399h1v1h-1zM1575 399h1v1h-1zM1591 399h1v1h-1zM1607 399h1v1h-1zM1623 399h1v1h-1zM1639 399h1v1h-1zM1654 399h1v1h-1zM1670 399h1v1h-1zM37 415h1v1h-1zM53 415h1v1h-1zM69 415h1v1h-1zM85 415h1v1h-1zM100 415h1v1h-1zM116 415h1v1h-1zM132 415h1v1h-1zM148 415h1v1h-1zM164 415h1v1h-1zM180 415h1v1h-1zM196 415h1v1h-1zM211 415h1v1h-1zM227 415h1v1h-1zM243 415h1v1h-1zM259 415h1v1h-1zM275 415h1v1h-1zM291 415h1v1h-1zM307 415h1v1h-1zM322 415h1v1h-1zM338 415h1v1h-1zM354 415h1v1h-1zM370 415h1v1h-1zM386 415h1v1h-1zM402 415h1v1h-1zM418 415h1v1h-1zM433 415h1v1h-1zM449 415h1v1h-1zM465 415h1v1h-1zM481 415h1v1h-1zM497 415h1v1h-1zM513 415h1v1h-1zM529 415h1v1h-1zM544 415h1v1h-1zM560 415h1v1h-1zM576 415h1v1h-1zM592 415h1v1h-1zM608 415h1v1h-1zM624 415h1v1h-1zM640 415h1v1h-1zM655 415h1v1h-1zM671 415h1v1h-1zM687 415h1v1h-1zM703 415h1v1h-1zM719 415h1v1h-1zM735 415h1v1h-1zM751 415h1v1h-1zM766 415h1v1h-1zM782 415h1v1h-1zM798 415h1v1h-1zM814 415h1v1h-1zM830 415h1v1h-1zM846 415h1v1h-1zM862 415h1v1h-1zM877 415h1v1h-1zM893 415h1v1h-1zM909 415h1v1h-1zM925 415h1v1h-1zM941 415h1v1h-1zM957 415h1v1h-1zM973 415h1v1h-1zM988 415h1v1h-1zM1004 415h1v1h-1zM1020 415h1v1h-1zM1036 415h1v1h-1zM1052 415h1v1h-1zM1068 415h1v1h-1zM1084 415h1v1h-1zM1099 415h1v1h-1zM1115 415h1v1h-1zM1131 415h1v1h-1zM1147 415h1v1h-1zM1163 415h1v1h-1zM1179 415h1v1h-1zM1195 415h1v1h-1zM1210 415h1v1h-1zM1226 415h1v1h-1zM1242 415h1v1h-1zM1258 415h1v1h-1zM1274 415h1v1h-1zM1290 415h1v1h-1zM1306 415h1v1h-1zM1321 415h1v1h-1zM1337 415h1v1h-1zM1353 415h1v1h-1zM1369 415h1v1h-1zM1385 415h1v1h-1zM1401 415h1v1h-1zM1417 415h1v1h-1zM1432 415h1v1h-1zM1448 415h1v1h-1zM1464 415h1v1h-1zM1480 415h1v1h-1zM1496 415h1v1h-1zM1512 415h1v1h-1zM1528 415h1v1h-1zM1543 415h1v1h-1zM1559 415h1v1h-1zM1575 415h1v1h-1zM1591 415h1v1h-1zM1607 415h1v1h-1zM1623 415h1v1h-1zM1639 415h1v1h-1zM1654 415h1v1h-1zM1670 415h1v1h-1zM37 430h1v1h-1zM53 430h1v1h-1zM69 430h1v1h-1zM85 430h1v1h-1zM100 430h1v1h-1zM116 430h1v1h-1zM132 430h1v1h-1zM148 430h1v1h-1zM164 430h1v1h-1zM180 430h1v1h-1zM196 430h1v1h-1zM211 430h1v1h-1zM227 430h1v1h-1zM243 430h1v1h-1zM259 430h1v1h-1zM275 430h1v1h-1zM291 430h1v1h-1zM307 430h1v1h-1zM322 430h1v1h-1zM338 430h1v1h-1zM354 430h1v1h-1zM370 430h1v1h-1zM386 430h1v1h-1zM402 430h1v1h-1zM418 430h1v1h-1zM433 430h1v1h-1zM449 430h1v1h-1zM465 430h1v1h-1zM481 430h1v1h-1zM497 430h1v1h-1zM513 430h1v1h-1zM529 430h1v1h-1zM544 430h1v1h-1zM560 430h1v1h-1zM576 430h1v1h-1zM592 430h1v1h-1zM608 430h1v1h-1zM624 430h1v1h-1zM640 430h1v1h-1zM655 430h1v1h-1zM671 430h1v1h-1zM687 430h1v1h-1zM703 430h1v1h-1zM719 430h1v1h-1zM735 430h1v1h-1zM751 430h1v1h-1zM766 430h1v1h-1zM782 430h1v1h-1zM798 430h1v1h-1zM814 430h1v1h-1zM830 430h1v1h-1zM846 430h1v1h-1zM862 430h1v1h-1zM877 430h1v1h-1zM893 430h1v1h-1zM909 430h1v1h-1zM925 430h1v1h-1zM941 430h1v1h-1zM957 430h1v1h-1zM973 430h1v1h-1zM988 430h1v1h-1zM1004 430h1v1h-1zM1020 430h1v1h-1zM1036 430h1v1h-1zM1052 430h1v1h-1zM1068 430h1v1h-1zM1084 430h1v1h-1zM1099 430h1v1h-1zM1115 430h1v1h-1zM1131 430h1v1h-1zM1147 430h1v1h-1zM1163 430h1v1h-1zM1179 430h1v1h-1zM1195 430h1v1h-1zM1210 430h1v1h-1zM1226 430h1v1h-1zM1242 430h1v1h-1zM1258 430h1v1h-1zM1274 430h1v1h-1zM1290 430h1v1h-1zM1306 430h1v1h-1zM1321 430h1v1h-1zM1337 430h1v1h-1zM1353 430h1v1h-1zM1369 430h1v1h-1zM1385 430h1v1h-1zM1401 430h1v1h-1zM1417 430h1v1h-1zM1432 430h1v1h-1zM1448 430h1v1h-1zM1464 430h1v1h-1zM1480 430h1v1h-1zM1496 430h1v1h-1zM1512 430h1v1h-1zM1528 430h1v1h-1zM1543 430h1v1h-1zM1559 430h1v1h-1zM1575 430h1v1h-1zM1591 430h1v1h-1zM1607 430h1v1h-1zM1623 430h1v1h-1zM1639 430h1v1h-1zM1654 430h1v1h-1zM1670 430h1v1h-1zM37 446h1v1h-1zM53 446h1v1h-1zM69 446h1v1h-1zM85 446h1v1h-1zM100 446h1v1h-1zM116 446h1v1h-1zM132 446h1v1h-1zM148 446h1v1h-1zM164 446h1v1h-1zM180 446h1v1h-1zM196 446h1v1h-1zM211 446h1v1h-1zM227 446h1v1h-1zM243 446h1v1h-1zM259 446h1v1h-1zM275 446h1v1h-1zM291 446h1v1h-1zM307 446h1v1h-1zM322 446h1v1h-1zM338 446h1v1h-1zM354 446h1v1h-1zM370 446h1v1h-1zM386 446h1v1h-1zM402 446h1v1h-1zM418 446h1v1h-1zM433 446h1v1h-1zM449 446h1v1h-1zM465 446h1v1h-1zM481 446h1v1h-1zM497 446h1v1h-1zM513 446h1v1h-1zM529 446h1v1h-1zM544 446h1v1h-1zM560 446h1v1h-1zM576 446h1v1h-1zM592 446h1v1h-1zM608 446h1v1h-1zM624 446h1v1h-1zM640 446h1v1h-1zM655 446h1v1h-1zM671 446h1v1h-1zM687 446h1v1h-1zM703 446h1v1h-1zM719 446h1v1h-1zM735 446h1v1h-1zM751 446h1v1h-1zM766 446h1v1h-1zM782 446h1v1h-1zM798 446h1v1h-1zM814 446h1v1h-1zM830 446h1v1h-1zM846 446h1v1h-1zM862 446h1v1h-1zM877 446h1v1h-1zM893 446h1v1h-1zM909 446h1v1h-1zM925 446h1v1h-1zM941 446h1v1h-1zM957 446h1v1h-1zM973 446h1v1h-1zM988 446h1v1h-1zM1004 446h1v1h-1zM1020 446h1v1h-1zM1036 446h1v1h-1zM1052 446h1v1h-1zM1068 446h1v1h-1zM1084 446h1v1h-1zM1099 446h1v1h-1zM1115 446h1v1h-1zM1131 446h1v1h-1zM1147 446h1v1h-1zM1163 446h1v1h-1zM1179 446h1v1h-1zM1195 446h1v1h-1zM1210 446h1v1h-1zM1226 446h1v1h-1zM1242 446h1v1h-1zM1258 446h1v1h-1zM1274 446h1v1h-1zM1290 446h1v1h-1zM1306 446h1v1h-1zM1321 446h1v1h-1zM1337 446h1v1h-1zM1353 446h1v1h-1zM1369 446h1v1h-1zM1385 446h1v1h-1zM1401 446h1v1h-1zM1417 446h1v1h-1zM1432 446h1v1h-1zM1448 446h1v1h-1zM1464 446h1v1h-1zM1480 446h1v1h-1zM1496 446h1v1h-1zM1512 446h1v1h-1zM1528 446h1v1h-1zM1543 446h1v1h-1zM1559 446h1v1h-1zM1575 446h1v1h-1zM1591 446h1v1h-1zM1607 446h1v1h-1zM1623 446h1v1h-1zM1639 446h1v1h-1zM1654 446h1v1h-1zM1670 446h1v1h-1zM37 462h1v1h-1zM53 462h1v1h-1zM69 462h1v1h-1zM85 462h1v1h-1zM100 462h1v1h-1zM116 462h1v1h-1zM132 462h1v1h-1zM148 462h1v1h-1zM164 462h1v1h-1zM180 462h1v1h-1zM196 462h1v1h-1zM211 462h1v1h-1zM227 462h1v1h-1zM243 462h1v1h-1zM259 462h1v1h-1zM275 462h1v1h-1zM291 462h1v1h-1zM307 462h1v1h-1zM322 462h1v1h-1zM338 462h1v1h-1zM354 462h1v1h-1zM370 462h1v1h-1zM386 462h1v1h-1zM402 462h1v1h-1zM418 462h1v1h-1zM433 462h1v1h-1zM449 462h1v1h-1zM465 462h1v1h-1zM481 462h1v1h-1zM497 462h1v1h-1zM513 462h1v1h-1zM529 462h1v1h-1zM544 462h1v1h-1zM560 462h1v1h-1zM576 462h1v1h-1zM592 462h1v1h-1zM608 462h1v1h-1zM624 462h1v1h-1zM640 462h1v1h-1zM655 462h1v1h-1zM671 462h1v1h-1zM687 462h1v1h-1zM703 462h1v1h-1zM719 462h1v1h-1zM735 462h1v1h-1zM751 462h1v1h-1zM766 462h1v1h-1zM782 462h1v1h-1zM798 462h1v1h-1zM814 462h1v1h-1zM830 462h1v1h-1zM846 462h1v1h-1zM862 462h1v1h-1zM877 462h1v1h-1zM893 462h1v1h-1zM909 462h1v1h-1zM925 462h1v1h-1zM941 462h1v1h-1zM957 462h1v1h-1zM973 462h1v1h-1zM988 462h1v1h-1zM1004 462h1v1h-1zM1020 462h1v1h-1zM1036 462h1v1h-1zM1052 462h1v1h-1zM1068 462h1v1h-1zM1084 462h1v1h-1zM1099 462h1v1h-1zM1115 462h1v1h-1zM1131 462h1v1h-1zM1147 462h1v1h-1zM1163 462h1v1h-1zM1179 462h1v1h-1zM1195 462h1v1h-1zM1210 462h1v1h-1zM1226 462h1v1h-1zM1242 462h1v1h-1zM1258 462h1v1h-1zM1274 462h1v1h-1zM1290 462h1v1h-1zM1306 462h1v1h-1zM1321 462h1v1h-1zM1337 462h1v1h-1zM1353 462h1v1h-1zM1369 462h1v1h-1zM1385 462h1v1h-1zM1401 462h1v1h-1zM1417 462h1v1h-1zM1432 462h1v1h-1zM1448 462h1v1h-1zM1464 462h1v1h-1zM1480 462h1v1h-1zM1496 462h1v1h-1zM1512 462h1v1h-1zM1528 462h1v1h-1zM1543 462h1v1h-1zM1559 462h1v1h-1zM1575 462h1v1h-1zM1591 462h1v1h-1zM1607 462h1v1h-1zM1623 462h1v1h-1zM1639 462h1v1h-1zM1654 462h1v1h-1zM1670 462h1v1h-1zM37 478h1v1h-1zM53 478h1v1h-1zM69 478h1v1h-1zM85 478h1v1h-1zM100 478h1v1h-1zM116 478h1v1h-1zM132 478h1v1h-1zM148 478h1v1h-1zM164 478h1v1h-1zM180 478h1v1h-1zM196 478h1v1h-1zM211 478h1v1h-1zM227 478h1v1h-1zM243 478h1v1h-1zM259 478h1v1h-1zM275 478h1v1h-1zM291 478h1v1h-1zM307 478h1v1h-1zM322 478h1v1h-1zM338 478h1v1h-1zM354 478h1v1h-1zM370 478h1v1h-1zM386 478h1v1h-1zM402 478h1v1h-1zM418 478h1v1h-1zM433 478h1v1h-1zM449 478h1v1h-1zM465 478h1v1h-1zM481 478h1v1h-1zM497 478h1v1h-1zM513 478h1v1h-1zM529 478h1v1h-1zM544 478h1v1h-1zM560 478h1v1h-1zM576 478h1v1h-1zM592 478h1v1h-1zM608 478h1v1h-1zM624 478h1v1h-1zM640 478h1v1h-1zM655 478h1v1h-1zM671 478h1v1h-1zM687 478h1v1h-1zM703 478h1v1h-1zM719 478h1v1h-1zM735 478h1v1h-1zM751 478h1v1h-1zM766 478h1v1h-1zM782 478h1v1h-1zM798 478h1v1h-1zM814 478h1v1h-1zM830 478h1v1h-1zM846 478h1v1h-1zM862 478h1v1h-1zM877 478h1v1h-1zM893 478h1v1h-1zM909 478h1v1h-1zM925 478h1v1h-1zM941 478h1v1h-1zM957 478h1v1h-1zM973 478h1v1h-1zM988 478h1v1h-1zM1004 478h1v1h-1zM1020 478h1v1h-1zM1036 478h1v1h-1zM1052 478h1v1h-1zM1068 478h1v1h-1zM1084 478h1v1h-1zM1099 478h1v1h-1zM1115 478h1v1h-1zM1131 478h1v1h-1zM1147 478h1v1h-1zM1163 478h1v1h-1zM1179 478h1v1h-1zM1195 478h1v1h-1zM1210 478h1v1h-1zM1226 478h1v1h-1zM1242 478h1v1h-1zM1258 478h1v1h-1zM1274 478h1v1h-1zM1290 478h1v1h-1zM1306 478h1v1h-1zM1321 478h1v1h-1zM1337 478h1v1h-1zM1353 478h1v1h-1zM1369 478h1v1h-1zM1385 478h1v1h-1zM1401 478h1v1h-1zM1417 478h1v1h-1zM1432 478h1v1h-1zM1448 478h1v1h-1zM1464 478h1v1h-1zM1480 478h1v1h-1zM1496 478h1v1h-1zM1512 478h1v1h-1zM1528 478h1v1h-1zM1543 478h1v1h-1zM1559 478h1v1h-1zM1575 478h1v1h-1zM1591 478h1v1h-1zM1607 478h1v1h-1zM1623 478h1v1h-1zM1639 478h1v1h-1zM1654 478h1v1h-1zM1670 478h1v1h-1zM37 494h1v1h-1zM53 494h1v1h-1zM69 494h1v1h-1zM85 494h1v1h-1zM100 494h1v1h-1zM116 494h1v1h-1zM132 494h1v1h-1zM148 494h1v1h-1zM164 494h1v1h-1zM180 494h1v1h-1zM196 494h1v1h-1zM211 494h1v1h-1zM227 494h1v1h-1zM243 494h1v1h-1zM259 494h1v1h-1zM275 494h1v1h-1zM291 494h1v1h-1zM307 494h1v1h-1zM322 494h1v1h-1zM338 494h1v1h-1zM354 494h1v1h-1zM370 494h1v1h-1zM386 494h1v1h-1zM402 494h1v1h-1zM418 494h1v1h-1zM433 494h1v1h-1zM449 494h1v1h-1zM465 494h1v1h-1zM481 494h1v1h-1zM497 494h1v1h-1zM513 494h1v1h-1zM529 494h1v1h-1zM544 494h1v1h-1zM560 494h1v1h-1zM576 494h1v1h-1zM592 494h1v1h-1zM608 494h1v1h-1zM624 494h1v1h-1zM640 494h1v1h-1zM655 494h1v1h-1zM671 494h1v1h-1zM687 494h1v1h-1zM703 494h1v1h-1zM719 494h1v1h-1zM735 494h1v1h-1zM751 494h1v1h-1zM766 494h1v1h-1zM782 494h1v1h-1zM798 494h1v1h-1zM814 494h1v1h-1zM830 494h1v1h-1zM846 494h1v1h-1zM862 494h1v1h-1zM877 494h1v1h-1zM893 494h1v1h-1zM909 494h1v1h-1zM925 494h1v1h-1zM941 494h1v1h-1zM957 494h1v1h-1zM973 494h1v1h-1zM988 494h1v1h-1zM1004 494h1v1h-1zM1020 494h1v1h-1zM1036 494h1v1h-1zM1052 494h1v1h-1zM1068 494h1v1h-1zM1084 494h1v1h-1zM1099 494h1v1h-1zM1115 494h1v1h-1zM1131 494h1v1h-1zM1147 494h1v1h-1zM1163 494h1v1h-1zM1179 494h1v1h-1zM1195 494h1v1h-1zM1210 494h1v1h-1zM1226 494h1v1h-1zM1242 494h1v1h-1zM1258 494h1v1h-1zM1274 494h1v1h-1zM1290 494h1v1h-1zM1306 494h1v1h-1zM1321 494h1v1h-1zM1337 494h1v1h-1zM1353 494h1v1h-1zM1369 494h1v1h-1zM1385 494h1v1h-1zM1401 494h1v1h-1zM1417 494h1v1h-1zM1432 494h1v1h-1zM1448 494h1v1h-1zM1464 494h1v1h-1zM1480 494h1v1h-1zM1496 494h1v1h-1zM1512 494h1v1h-1zM1528 494h1v1h-1zM1543 494h1v1h-1zM1559 494h1v1h-1zM1575 494h1v1h-1zM1591 494h1v1h-1zM1607 494h1v1h-1zM1623 494h1v1h-1zM1639 494h1v1h-1zM1654 494h1v1h-1zM1670 494h1v1h-1zM37 510h1v1h-1zM53 510h1v1h-1zM69 510h1v1h-1zM85 510h1v1h-1zM100 510h1v1h-1zM116 510h1v1h-1zM132 510h1v1h-1zM148 510h1v1h-1zM164 510h1v1h-1zM180 510h1v1h-1zM196 510h1v1h-1zM211 510h1v1h-1zM227 510h1v1h-1zM243 510h1v1h-1zM259 510h1v1h-1zM275 510h1v1h-1zM291 510h1v1h-1zM307 510h1v1h-1zM322 510h1v1h-1zM338 510h1v1h-1zM354 510h1v1h-1zM370 510h1v1h-1zM386 510h1v1h-1zM402 510h1v1h-1zM418 510h1v1h-1zM433 510h1v1h-1zM449 510h1v1h-1zM465 510h1v1h-1zM481 510h1v1h-1zM497 510h1v1h-1zM513 510h1v1h-1zM529 510h1v1h-1zM544 510h1v1h-1zM560 510h1v1h-1zM576 510h1v1h-1zM592 510h1v1h-1zM608 510h1v1h-1zM624 510h1v1h-1zM640 510h1v1h-1zM655 510h1v1h-1zM671 510h1v1h-1zM687 510h1v1h-1zM703 510h1v1h-1zM719 510h1v1h-1zM735 510h1v1h-1zM751 510h1v1h-1zM766 510h1v1h-1zM782 510h1v1h-1zM798 510h1v1h-1zM814 510h1v1h-1zM830 510h1v1h-1zM846 510h1v1h-1zM862 510h1v1h-1zM877 510h1v1h-1zM893 510h1v1h-1zM909 510h1v1h-1zM925 510h1v1h-1zM941 510h1v1h-1zM957 510h1v1h-1zM973 510h1v1h-1zM988 510h1v1h-1zM1004 510h1v1h-1zM1020 510h1v1h-1zM1036 510h1v1h-1zM1052 510h1v1h-1zM1068 510h1v1h-1zM1084 510h1v1h-1zM1099 510h1v1h-1zM1115 510h1v1h-1zM1131 510h1v1h-1zM1147 510h1v1h-1zM1163 510h1v1h-1zM1179 510h1v1h-1zM1195 510h1v1h-1zM1210 510h1v1h-1zM1226 510h1v1h-1zM1242 510h1v1h-1zM1258 510h1v1h-1zM1274 510h1v1h-1zM1290 510h1v1h-1zM1306 510h1v1h-1zM1321 510h1v1h-1zM1337 510h1v1h-1zM1353 510h1v1h-1zM1369 510h1v1h-1zM1385 510h1v1h-1zM1401 510h1v1h-1zM1417 510h1v1h-1zM1432 510h1v1h-1zM1448 510h1v1h-1zM1464 510h1v1h-1zM1480 510h1v1h-1zM1496 510h1v1h-1zM1512 510h1v1h-1zM1528 510h1v1h-1zM1543 510h1v1h-1zM1559 510h1v1h-1zM1575 510h1v1h-1zM1591 510h1v1h-1zM1607 510h1v1h-1zM1623 510h1v1h-1zM1639 510h1v1h-1zM1654 510h1v1h-1zM1670 510h1v1h-1zM37 526h1v1h-1zM53 526h1v1h-1zM69 526h1v1h-1zM85 526h1v1h-1zM100 526h1v1h-1zM116 526h1v1h-1zM132 526h1v1h-1zM148 526h1v1h-1zM164 526h1v1h-1zM180 526h1v1h-1zM196 526h1v1h-1zM211 526h1v1h-1zM227 526h1v1h-1zM243 526h1v1h-1zM259 526h1v1h-1zM275 526h1v1h-1zM291 526h1v1h-1zM307 526h1v1h-1zM322 526h1v1h-1zM338 526h1v1h-1zM354 526h1v1h-1zM370 526h1v1h-1zM386 526h1v1h-1zM402 526h1v1h-1zM418 526h1v1h-1zM433 526h1v1h-1zM449 526h1v1h-1zM465 526h1v1h-1zM481 526h1v1h-1zM497 526h1v1h-1zM513 526h1v1h-1zM529 526h1v1h-1zM544 526h1v1h-1zM560 526h1v1h-1zM576 526h1v1h-1zM592 526h1v1h-1zM608 526h1v1h-1zM624 526h1v1h-1zM640 526h1v1h-1zM655 526h1v1h-1zM671 526h1v1h-1zM687 526h1v1h-1zM703 526h1v1h-1zM719 526h1v1h-1zM735 526h1v1h-1zM751 526h1v1h-1zM766 526h1v1h-1zM782 526h1v1h-1zM798 526h1v1h-1zM814 526h1v1h-1zM830 526h1v1h-1zM846 526h1v1h-1zM862 526h1v1h-1zM877 526h1v1h-1zM893 526h1v1h-1zM909 526h1v1h-1zM925 526h1v1h-1zM941 526h1v1h-1zM957 526h1v1h-1zM973 526h1v1h-1zM988 526h1v1h-1zM1004 526h1v1h-1zM1020 526h1v1h-1zM1036 526h1v1h-1zM1052 526h1v1h-1zM1068 526h1v1h-1zM1084 526h1v1h-1zM1099 526h1v1h-1zM1115 526h1v1h-1zM1131 526h1v1h-1zM1147 526h1v1h-1zM1163 526h1v1h-1zM1179 526h1v1h-1zM1195 526h1v1h-1zM1210 526h1v1h-1zM1226 526h1v1h-1zM1242 526h1v1h-1zM1258 526h1v1h-1zM1274 526h1v1h-1zM1290 526h1v1h-1zM1306 526h1v1h-1zM1321 526h1v1h-1zM1337 526h1v1h-1zM1353 526h1v1h-1zM1369 526h1v1h-1zM1385 526h1v1h-1zM1401 526h1v1h-1zM1417 526h1v1h-1zM1432 526h1v1h-1zM1448 526h1v1h-1zM1464 526h1v1h-1zM1480 526h1v1h-1zM1496 526h1v1h-1zM1512 526h1v1h-1zM1528 526h1v1h-1zM1543 526h1v1h-1zM1559 526h1v1h-1zM1575 526h1v1h-1zM1591 526h1v1h-1zM1607 526h1v1h-1zM1623 526h1v1h-1zM1639 526h1v1h-1zM1654 526h1v1h-1zM1670 526h1v1h-1zM37 541h1v1h-1zM53 541h1v1h-1zM69 541h1v1h-1zM85 541h1v1h-1zM100 541h1v1h-1zM116 541h1v1h-1zM132 541h1v1h-1zM148 541h1v1h-1zM164 541h1v1h-1zM180 541h1v1h-1zM196 541h1v1h-1zM211 541h1v1h-1zM227 541h1v1h-1zM243 541h1v1h-1zM259 541h1v1h-1zM275 541h1v1h-1zM291 541h1v1h-1zM307 541h1v1h-1zM322 541h1v1h-1zM338 541h1v1h-1zM354 541h1v1h-1zM370 541h1v1h-1zM386 541h1v1h-1zM402 541h1v1h-1zM418 541h1v1h-1zM433 541h1v1h-1zM449 541h1v1h-1zM465 541h1v1h-1zM481 541h1v1h-1zM497 541h1v1h-1zM513 541h1v1h-1zM529 541h1v1h-1zM544 541h1v1h-1zM560 541h1v1h-1zM576 541h1v1h-1zM592 541h1v1h-1zM608 541h1v1h-1zM624 541h1v1h-1zM640 541h1v1h-1zM655 541h1v1h-1zM671 541h1v1h-1zM687 541h1v1h-1zM703 541h1v1h-1zM719 541h1v1h-1zM735 541h1v1h-1zM751 541h1v1h-1zM766 541h1v1h-1zM782 541h1v1h-1zM798 541h1v1h-1zM814 541h1v1h-1zM830 541h1v1h-1zM846 541h1v1h-1zM862 541h1v1h-1zM877 541h1v1h-1zM893 541h1v1h-1zM909 541h1v1h-1zM925 541h1v1h-1zM941 541h1v1h-1zM957 541h1v1h-1zM973 541h1v1h-1zM988 541h1v1h-1zM1004 541h1v1h-1zM1020 541h1v1h-1zM1036 541h1v1h-1zM1052 541h1v1h-1zM1068 541h1v1h-1zM1084 541h1v1h-1zM1099 541h1v1h-1zM1115 541h1v1h-1zM1131 541h1v1h-1zM1147 541h1v1h-1zM1163 541h1v1h-1zM1179 541h1v1h-1zM1195 541h1v1h-1zM1210 541h1v1h-1zM1226 541h1v1h-1zM1242 541h1v1h-1zM1258 541h1v1h-1zM1274 541h1v1h-1zM1290 541h1v1h-1zM1306 541h1v1h-1zM1321 541h1v1h-1zM1337 541h1v1h-1zM1353 541h1v1h-1zM1369 541h1v1h-1zM1385 541h1v1h-1zM1401 541h1v1h-1zM1417 541h1v1h-1zM1432 541h1v1h-1zM1448 541h1v1h-1zM1464 541h1v1h-1zM1480 541h1v1h-1zM1496 541h1v1h-1zM1512 541h1v1h-1zM1528 541h1v1h-1zM1543 541h1v1h-1zM1559 541h1v1h-1zM1575 541h1v1h-1zM1591 541h1v1h-1zM1607 541h1v1h-1zM1623 541h1v1h-1zM1639 541h1v1h-1zM1654 541h1v1h-1zM1670 541h1v1h-1zM37 557h1v1h-1zM53 557h1v1h-1zM69 557h1v1h-1zM85 557h1v1h-1zM100 557h1v1h-1zM116 557h1v1h-1zM132 557h1v1h-1zM148 557h1v1h-1zM164 557h1v1h-1zM180 557h1v1h-1zM196 557h1v1h-1zM211 557h1v1h-1zM227 557h1v1h-1zM243 557h1v1h-1zM259 557h1v1h-1zM275 557h1v1h-1zM291 557h1v1h-1zM307 557h1v1h-1zM322 557h1v1h-1zM338 557h1v1h-1zM354 557h1v1h-1zM370 557h1v1h-1zM386 557h1v1h-1zM402 557h1v1h-1zM418 557h1v1h-1zM433 557h1v1h-1zM449 557h1v1h-1zM465 557h1v1h-1zM481 557h1v1h-1zM497 557h1v1h-1zM513 557h1v1h-1zM529 557h1v1h-1zM544 557h1v1h-1zM560 557h1v1h-1zM576 557h1v1h-1zM592 557h1v1h-1zM608 557h1v1h-1zM624 557h1v1h-1zM640 557h1v1h-1zM655 557h1v1h-1zM671 557h1v1h-1zM687 557h1v1h-1zM703 557h1v1h-1zM719 557h1v1h-1zM735 557h1v1h-1zM751 557h1v1h-1zM766 557h1v1h-1zM782 557h1v1h-1zM798 557h1v1h-1zM814 557h1v1h-1zM830 557h1v1h-1zM846 557h1v1h-1zM862 557h1v1h-1zM877 557h1v1h-1zM893 557h1v1h-1zM909 557h1v1h-1zM925 557h1v1h-1zM941 557h1v1h-1zM957 557h1v1h-1zM973 557h1v1h-1zM988 557h1v1h-1zM1004 557h1v1h-1zM1020 557h1v1h-1zM1036 557h1v1h-1zM1052 557h1v1h-1zM1068 557h1v1h-1zM1084 557h1v1h-1zM1099 557h1v1h-1zM1115 557h1v1h-1zM1131 557h1v1h-1zM1147 557h1v1h-1zM1163 557h1v1h-1zM1179 557h1v1h-1zM1195 557h1v1h-1zM1210 557h1v1h-1zM1226 557h1v1h-1zM1242 557h1v1h-1zM1258 557h1v1h-1zM1274 557h1v1h-1zM1290 557h1v1h-1zM1306 557h1v1h-1zM1321 557h1v1h-1zM1337 557h1v1h-1zM1353 557h1v1h-1zM1369 557h1v1h-1zM1385 557h1v1h-1zM1401 557h1v1h-1zM1417 557h1v1h-1zM1432 557h1v1h-1zM1448 557h1v1h-1zM1464 557h1v1h-1zM1480 557h1v1h-1zM1496 557h1v1h-1zM1512 557h1v1h-1zM1528 557h1v1h-1zM1543 557h1v1h-1zM1559 557h1v1h-1zM1575 557h1v1h-1zM1591 557h1v1h-1zM1607 557h1v1h-1zM1623 557h1v1h-1zM1639 557h1v1h-1zM1654 557h1v1h-1zM1670 557h1v1h-1zM37 573h1v1h-1zM53 573h1v1h-1zM69 573h1v1h-1zM85 573h1v1h-1zM100 573h1v1h-1zM116 573h1v1h-1zM132 573h1v1h-1zM148 573h1v1h-1zM164 573h1v1h-1zM180 573h1v1h-1zM196 573h1v1h-1zM211 573h1v1h-1zM227 573h1v1h-1zM243 573h1v1h-1zM259 573h1v1h-1zM275 573h1v1h-1zM291 573h1v1h-1zM307 573h1v1h-1zM322 573h1v1h-1zM338 573h1v1h-1zM354 573h1v1h-1zM370 573h1v1h-1zM386 573h1v1h-1zM402 573h1v1h-1zM418 573h1v1h-1zM433 573h1v1h-1zM449 573h1v1h-1zM465 573h1v1h-1zM481 573h1v1h-1zM497 573h1v1h-1zM513 573h1v1h-1zM529 573h1v1h-1zM544 573h1v1h-1zM560 573h1v1h-1zM576 573h1v1h-1zM592 573h1v1h-1zM608 573h1v1h-1zM624 573h1v1h-1zM640 573h1v1h-1zM655 573h1v1h-1zM671 573h1v1h-1zM687 573h1v1h-1zM703 573h1v1h-1zM719 573h1v1h-1zM735 573h1v1h-1zM751 573h1v1h-1zM766 573h1v1h-1zM782 573h1v1h-1zM798 573h1v1h-1zM814 573h1v1h-1zM830 573h1v1h-1zM846 573h1v1h-1zM862 573h1v1h-1zM877 573h1v1h-1zM893 573h1v1h-1zM909 573h1v1h-1zM925 573h1v1h-1zM941 573h1v1h-1zM957 573h1v1h-1zM973 573h1v1h-1zM988 573h1v1h-1zM1004 573h1v1h-1zM1020 573h1v1h-1zM1036 573h1v1h-1zM1052 573h1v1h-1zM1068 573h1v1h-1zM1084 573h1v1h-1zM1099 573h1v1h-1zM1115 573h1v1h-1zM1131 573h1v1h-1zM1147 573h1v1h-1zM1163 573h1v1h-1zM1179 573h1v1h-1zM1195 573h1v1h-1zM1210 573h1v1h-1zM1226 573h1v1h-1zM1242 573h1v1h-1zM1258 573h1v1h-1zM1274 573h1v1h-1zM1290 573h1v1h-1zM1306 573h1v1h-1zM1321 573h1v1h-1zM1337 573h1v1h-1zM1353 573h1v1h-1zM1369 573h1v1h-1zM1385 573h1v1h-1zM1401 573h1v1h-1zM1417 573h1v1h-1zM1432 573h1v1h-1zM1448 573h1v1h-1zM1464 573h1v1h-1zM1480 573h1v1h-1zM1496 573h1v1h-1zM1512 573h1v1h-1zM1528 573h1v1h-1zM1543 573h1v1h-1zM1559 573h1v1h-1zM1575 573h1v1h-1zM1591 573h1v1h-1zM1607 573h1v1h-1zM1623 573h1v1h-1zM1639 573h1v1h-1zM1654 573h1v1h-1zM1670 573h1v1h-1zM37 589h1v1h-1zM53 589h1v1h-1zM69 589h1v1h-1zM85 589h1v1h-1zM100 589h1v1h-1zM116 589h1v1h-1zM132 589h1v1h-1zM148 589h1v1h-1zM164 589h1v1h-1zM180 589h1v1h-1zM196 589h1v1h-1zM211 589h1v1h-1zM227 589h1v1h-1zM243 589h1v1h-1zM259 589h1v1h-1zM275 589h1v1h-1zM291 589h1v1h-1zM307 589h1v1h-1zM322 589h1v1h-1zM338 589h1v1h-1zM354 589h1v1h-1zM370 589h1v1h-1zM386 589h1v1h-1zM402 589h1v1h-1zM418 589h1v1h-1zM433 589h1v1h-1zM449 589h1v1h-1zM465 589h1v1h-1zM481 589h1v1h-1zM497 589h1v1h-1zM513 589h1v1h-1zM529 589h1v1h-1zM544 589h1v1h-1zM560 589h1v1h-1zM576 589h1v1h-1zM592 589h1v1h-1zM608 589h1v1h-1zM624 589h1v1h-1zM640 589h1v1h-1zM655 589h1v1h-1zM671 589h1v1h-1zM687 589h1v1h-1zM703 589h1v1h-1zM719 589h1v1h-1zM735 589h1v1h-1zM751 589h1v1h-1zM766 589h1v1h-1zM782 589h1v1h-1zM798 589h1v1h-1zM814 589h1v1h-1zM830 589h1v1h-1zM846 589h1v1h-1zM862 589h1v1h-1zM877 589h1v1h-1zM893 589h1v1h-1zM909 589h1v1h-1zM925 589h1v1h-1zM941 589h1v1h-1zM957 589h1v1h-1zM973 589h1v1h-1zM988 589h1v1h-1zM1004 589h1v1h-1zM1020 589h1v1h-1zM1036 589h1v1h-1zM1052 589h1v1h-1zM1068 589h1v1h-1zM1084 589h1v1h-1zM1099 589h1v1h-1zM1115 589h1v1h-1zM1131 589h1v1h-1zM1147 589h1v1h-1zM1163 589h1v1h-1zM1179 589h1v1h-1zM1195 589h1v1h-1zM1210 589h1v1h-1zM1226 589h1v1h-1zM1242 589h1v1h-1zM1258 589h1v1h-1zM1274 589h1v1h-1zM1290 589h1v1h-1zM1306 589h1v1h-1zM1321 589h1v1h-1zM1337 589h1v1h-1zM1353 589h1v1h-1zM1369 589h1v1h-1zM1385 589h1v1h-1zM1401 589h1v1h-1zM1417 589h1v1h-1zM1432 589h1v1h-1zM1448 589h1v1h-1zM1464 589h1v1h-1zM1480 589h1v1h-1zM1496 589h1v1h-1zM1512 589h1v1h-1zM1528 589h1v1h-1zM1543 589h1v1h-1zM1559 589h1v1h-1zM1575 589h1v1h-1zM1591 589h1v1h-1zM1607 589h1v1h-1zM1623 589h1v1h-1zM1639 589h1v1h-1zM1654 589h1v1h-1zM1670 589h1v1h-1zM37 605h1v1h-1zM53 605h1v1h-1zM69 605h1v1h-1zM85 605h1v1h-1zM100 605h1v1h-1zM116 605h1v1h-1zM132 605h1v1h-1zM148 605h1v1h-1zM164 605h1v1h-1zM180 605h1v1h-1zM196 605h1v1h-1zM211 605h1v1h-1zM227 605h1v1h-1zM243 605h1v1h-1zM259 605h1v1h-1zM275 605h1v1h-1zM291 605h1v1h-1zM307 605h1v1h-1zM322 605h1v1h-1zM338 605h1v1h-1zM354 605h1v1h-1zM370 605h1v1h-1zM386 605h1v1h-1zM402 605h1v1h-1zM418 605h1v1h-1zM433 605h1v1h-1zM449 605h1v1h-1zM465 605h1v1h-1zM481 605h1v1h-1zM497 605h1v1h-1zM513 605h1v1h-1zM529 605h1v1h-1zM544 605h1v1h-1zM560 605h1v1h-1zM576 605h1v1h-1zM592 605h1v1h-1zM608 605h1v1h-1zM624 605h1v1h-1zM640 605h1v1h-1zM655 605h1v1h-1zM671 605h1v1h-1zM687 605h1v1h-1zM703 605h1v1h-1zM719 605h1v1h-1zM735 605h1v1h-1zM751 605h1v1h-1zM766 605h1v1h-1zM782 605h1v1h-1zM798 605h1v1h-1zM814 605h1v1h-1zM830 605h1v1h-1zM846 605h1v1h-1zM862 605h1v1h-1zM877 605h1v1h-1zM893 605h1v1h-1zM909 605h1v1h-1zM925 605h1v1h-1zM941 605h1v1h-1zM957 605h1v1h-1zM973 605h1v1h-1zM988 605h1v1h-1zM1004 605h1v1h-1zM1020 605h1v1h-1zM1036 605h1v1h-1zM1052 605h1v1h-1zM1068 605h1v1h-1zM1084 605h1v1h-1zM1099 605h1v1h-1zM1115 605h1v1h-1zM1131 605h1v1h-1zM1147 605h1v1h-1zM1163 605h1v1h-1zM1179 605h1v1h-1zM1195 605h1v1h-1zM1210 605h1v1h-1zM1226 605h1v1h-1zM1242 605h1v1h-1zM1258 605h1v1h-1zM1274 605h1v1h-1zM1290 605h1v1h-1zM1306 605h1v1h-1zM1321 605h1v1h-1zM1337 605h1v1h-1zM1353 605h1v1h-1zM1369 605h1v1h-1zM1385 605h1v1h-1zM1401 605h1v1h-1zM1417 605h1v1h-1zM1432 605h1v1h-1zM1448 605h1v1h-1zM1464 605h1v1h-1zM1480 605h1v1h-1zM1496 605h1v1h-1zM1512 605h1v1h-1zM1528 605h1v1h-1zM1543 605h1v1h-1zM1559 605h1v1h-1zM1575 605h1v1h-1zM1591 605h1v1h-1zM1607 605h1v1h-1zM1623 605h1v1h-1zM1639 605h1v1h-1zM1654 605h1v1h-1zM1670 605h1v1h-1zM37 621h1v1h-1zM53 621h1v1h-1zM69 621h1v1h-1zM85 621h1v1h-1zM100 621h1v1h-1zM116 621h1v1h-1zM132 621h1v1h-1zM148 621h1v1h-1zM164 621h1v1h-1zM180 621h1v1h-1zM196 621h1v1h-1zM211 621h1v1h-1zM227 621h1v1h-1zM243 621h1v1h-1zM259 621h1v1h-1zM275 621h1v1h-1zM291 621h1v1h-1zM307 621h1v1h-1zM322 621h1v1h-1zM338 621h1v1h-1zM354 621h1v1h-1zM370 621h1v1h-1zM386 621h1v1h-1zM402 621h1v1h-1zM418 621h1v1h-1zM433 621h1v1h-1zM449 621h1v1h-1zM465 621h1v1h-1zM481 621h1v1h-1zM497 621h1v1h-1zM513 621h1v1h-1zM529 621h1v1h-1zM544 621h1v1h-1zM560 621h1v1h-1zM576 621h1v1h-1zM592 621h1v1h-1zM608 621h1v1h-1zM624 621h1v1h-1zM640 621h1v1h-1zM655 621h1v1h-1zM671 621h1v1h-1zM687 621h1v1h-1zM703 621h1v1h-1zM719 621h1v1h-1zM735 621h1v1h-1zM751 621h1v1h-1zM766 621h1v1h-1zM782 621h1v1h-1zM798 621h1v1h-1zM814 621h1v1h-1zM830 621h1v1h-1zM846 621h1v1h-1zM862 621h1v1h-1zM877 621h1v1h-1zM893 621h1v1h-1zM909 621h1v1h-1zM925 621h1v1h-1zM941 621h1v1h-1zM957 621h1v1h-1zM973 621h1v1h-1zM988 621h1v1h-1zM1004 621h1v1h-1zM1020 621h1v1h-1zM1036 621h1v1h-1zM1052 621h1v1h-1zM1068 621h1v1h-1zM1084 621h1v1h-1zM1099 621h1v1h-1zM1115 621h1v1h-1zM1131 621h1v1h-1zM1147 621h1v1h-1zM1163 621h1v1h-1zM1179 621h1v1h-1zM1195 621h1v1h-1zM1210 621h1v1h-1zM1226 621h1v1h-1zM1242 621h1v1h-1zM1258 621h1v1h-1zM1274 621h1v1h-1zM1290 621h1v1h-1zM1306 621h1v1h-1zM1321 621h1v1h-1zM1337 621h1v1h-1zM1353 621h1v1h-1zM1369 621h1v1h-1zM1385 621h1v1h-1zM1401 621h1v1h-1zM1417 621h1v1h-1zM1432 621h1v1h-1zM1448 621h1v1h-1zM1464 621h1v1h-1zM1480 621h1v1h-1zM1496 621h1v1h-1zM1512 621h1v1h-1zM1528 621h1v1h-1zM1543 621h1v1h-1zM1559 621h1v1h-1zM1575 621h1v1h-1zM1591 621h1v1h-1zM1607 621h1v1h-1zM1623 621h1v1h-1zM1639 621h1v1h-1zM1654 621h1v1h-1zM1670 621h1v1h-1zM37 637h1v1h-1zM53 637h1v1h-1zM69 637h1v1h-1zM85 637h1v1h-1zM100 637h1v1h-1zM116 637h1v1h-1zM132 637h1v1h-1zM148 637h1v1h-1zM164 637h1v1h-1zM180 637h1v1h-1zM196 637h1v1h-1zM211 637h1v1h-1zM227 637h1v1h-1zM243 637h1v1h-1zM259 637h1v1h-1zM275 637h1v1h-1zM291 637h1v1h-1zM307 637h1v1h-1zM322 637h1v1h-1zM338 637h1v1h-1zM354 637h1v1h-1zM370 637h1v1h-1zM386 637h1v1h-1zM402 637h1v1h-1zM418 637h1v1h-1zM433 637h1v1h-1zM449 637h1v1h-1zM465 637h1v1h-1zM481 637h1v1h-1zM497 637h1v1h-1zM513 637h1v1h-1zM529 637h1v1h-1zM544 637h1v1h-1zM560 637h1v1h-1zM576 637h1v1h-1zM592 637h1v1h-1zM608 637h1v1h-1zM624 637h1v1h-1zM640 637h1v1h-1zM655 637h1v1h-1zM671 637h1v1h-1zM687 637h1v1h-1zM703 637h1v1h-1zM719 637h1v1h-1zM735 637h1v1h-1zM751 637h1v1h-1zM766 637h1v1h-1zM782 637h1v1h-1zM798 637h1v1h-1zM814 637h1v1h-1zM830 637h1v1h-1zM846 637h1v1h-1zM862 637h1v1h-1zM877 637h1v1h-1zM893 637h1v1h-1zM909 637h1v1h-1zM925 637h1v1h-1zM941 637h1v1h-1zM957 637h1v1h-1zM973 637h1v1h-1zM988 637h1v1h-1zM1004 637h1v1h-1zM1020 637h1v1h-1zM1036 637h1v1h-1zM1052 637h1v1h-1zM1068 637h1v1h-1zM1084 637h1v1h-1zM1099 637h1v1h-1zM1115 637h1v1h-1zM1131 637h1v1h-1zM1147 637h1v1h-1zM1163 637h1v1h-1zM1179 637h1v1h-1zM1195 637h1v1h-1zM1210 637h1v1h-1zM1226 637h1v1h-1zM1242 637h1v1h-1zM1258 637h1v1h-1zM1274 637h1v1h-1zM1290 637h1v1h-1zM1306 637h1v1h-1zM1321 637h1v1h-1zM1337 637h1v1h-1zM1353 637h1v1h-1zM1369 637h1v1h-1zM1385 637h1v1h-1zM1401 637h1v1h-1zM1417 637h1v1h-1zM1432 637h1v1h-1zM1448 637h1v1h-1zM1464 637h1v1h-1zM1480 637h1v1h-1zM1496 637h1v1h-1zM1512 637h1v1h-1zM1528 637h1v1h-1zM1543 637h1v1h-1zM1559 637h1v1h-1zM1575 637h1v1h-1zM1591 637h1v1h-1zM1607 637h1v1h-1zM1623 637h1v1h-1zM1639 637h1v1h-1zM1654 637h1v1h-1zM1670 637h1v1h-1zM37 652h1v1h-1zM53 652h1v1h-1zM69 652h1v1h-1zM85 652h1v1h-1zM100 652h1v1h-1zM116 652h1v1h-1zM132 652h1v1h-1zM148 652h1v1h-1zM164 652h1v1h-1zM180 652h1v1h-1zM196 652h1v1h-1zM211 652h1v1h-1zM227 652h1v1h-1zM243 652h1v1h-1zM259 652h1v1h-1zM275 652h1v1h-1zM291 652h1v1h-1zM307 652h1v1h-1zM322 652h1v1h-1zM338 652h1v1h-1zM354 652h1v1h-1zM370 652h1v1h-1zM386 652h1v1h-1zM402 652h1v1h-1zM418 652h1v1h-1zM433 652h1v1h-1zM449 652h1v1h-1zM465 652h1v1h-1zM481 652h1v1h-1zM497 652h1v1h-1zM513 652h1v1h-1zM529 652h1v1h-1zM544 652h1v1h-1zM560 652h1v1h-1zM576 652h1v1h-1zM592 652h1v1h-1zM608 652h1v1h-1zM624 652h1v1h-1zM640 652h1v1h-1zM655 652h1v1h-1zM671 652h1v1h-1zM687 652h1v1h-1zM703 652h1v1h-1zM719 652h1v1h-1zM735 652h1v1h-1zM751 652h1v1h-1zM766 652h1v1h-1zM782 652h1v1h-1zM798 652h1v1h-1zM814 652h1v1h-1zM830 652h1v1h-1zM846 652h1v1h-1zM862 652h1v1h-1zM877 652h1v1h-1zM893 652h1v1h-1zM909 652h1v1h-1zM925 652h1v1h-1zM941 652h1v1h-1zM957 652h1v1h-1zM973 652h1v1h-1zM988 652h1v1h-1zM1004 652h1v1h-1zM1020 652h1v1h-1zM1036 652h1v1h-1zM1052 652h1v1h-1zM1068 652h1v1h-1zM1084 652h1v1h-1zM1099 652h1v1h-1zM1115 652h1v1h-1zM1131 652h1v1h-1zM1147 652h1v1h-1zM1163 652h1v1h-1zM1179 652h1v1h-1zM1195 652h1v1h-1zM1210 652h1v1h-1zM1226 652h1v1h-1zM1242 652h1v1h-1zM1258 652h1v1h-1zM1274 652h1v1h-1zM1290 652h1v1h-1zM1306 652h1v1h-1zM1321 652h1v1h-1zM1337 652h1v1h-1zM1353 652h1v1h-1zM1369 652h1v1h-1zM1385 652h1v1h-1zM1401 652h1v1h-1zM1417 652h1v1h-1zM1432 652h1v1h-1zM1448 652h1v1h-1zM1464 652h1v1h-1zM1480 652h1v1h-1zM1496 652h1v1h-1zM1512 652h1v1h-1zM1528 652h1v1h-1zM1543 652h1v1h-1zM1559 652h1v1h-1zM1575 652h1v1h-1zM1591 652h1v1h-1zM1607 652h1v1h-1zM1623 652h1v1h-1zM1639 652h1v1h-1zM1654 652h1v1h-1zM1670 652h1v1h-1zM37 668h1v1h-1zM53 668h1v1h-1zM69 668h1v1h-1zM85 668h1v1h-1zM100 668h1v1h-1zM116 668h1v1h-1zM132 668h1v1h-1zM148 668h1v1h-1zM164 668h1v1h-1zM180 668h1v1h-1zM196 668h1v1h-1zM211 668h1v1h-1zM227 668h1v1h-1zM243 668h1v1h-1zM259 668h1v1h-1zM275 668h1v1h-1zM291 668h1v1h-1zM307 668h1v1h-1zM322 668h1v1h-1zM338 668h1v1h-1zM354 668h1v1h-1zM370 668h1v1h-1zM386 668h1v1h-1zM402 668h1v1h-1zM418 668h1v1h-1zM433 668h1v1h-1zM449 668h1v1h-1zM465 668h1v1h-1zM481 668h1v1h-1zM497 668h1v1h-1zM513 668h1v1h-1zM529 668h1v1h-1zM544 668h1v1h-1zM560 668h1v1h-1zM576 668h1v1h-1zM592 668h1v1h-1zM608 668h1v1h-1zM624 668h1v1h-1zM640 668h1v1h-1zM655 668h1v1h-1zM671 668h1v1h-1zM687 668h1v1h-1zM703 668h1v1h-1zM719 668h1v1h-1zM735 668h1v1h-1zM751 668h1v1h-1zM766 668h1v1h-1zM782 668h1v1h-1zM798 668h1v1h-1zM814 668h1v1h-1zM830 668h1v1h-1zM846 668h1v1h-1zM862 668h1v1h-1zM877 668h1v1h-1zM893 668h1v1h-1zM909 668h1v1h-1zM925 668h1v1h-1zM941 668h1v1h-1zM957 668h1v1h-1zM973 668h1v1h-1zM988 668h1v1h-1zM1004 668h1v1h-1zM1020 668h1v1h-1zM1036 668h1v1h-1zM1052 668h1v1h-1zM1068 668h1v1h-1zM1084 668h1v1h-1zM1099 668h1v1h-1zM1115 668h1v1h-1zM1131 668h1v1h-1zM1147 668h1v1h-1zM1163 668h1v1h-1zM1179 668h1v1h-1zM1195 668h1v1h-1zM1210 668h1v1h-1zM1226 668h1v1h-1zM1242 668h1v1h-1zM1258 668h1v1h-1zM1274 668h1v1h-1zM1290 668h1v1h-1zM1306 668h1v1h-1zM1321 668h1v1h-1zM1337 668h1v1h-1zM1353 668h1v1h-1zM1369 668h1v1h-1zM1385 668h1v1h-1zM1401 668h1v1h-1zM1417 668h1v1h-1zM1432 668h1v1h-1zM1448 668h1v1h-1zM1464 668h1v1h-1zM1480 668h1v1h-1zM1496 668h1v1h-1zM1512 668h1v1h-1zM1528 668h1v1h-1zM1543 668h1v1h-1zM1559 668h1v1h-1zM1575 668h1v1h-1zM1591 668h1v1h-1zM1607 668h1v1h-1zM1623 668h1v1h-1zM1639 668h1v1h-1zM1654 668h1v1h-1zM1670 668h1v1h-1zM37 684h1v1h-1zM53 684h1v1h-1zM69 684h1v1h-1zM85 684h1v1h-1zM100 684h1v1h-1zM116 684h1v1h-1zM132 684h1v1h-1zM148 684h1v1h-1zM164 684h1v1h-1zM180 684h1v1h-1zM196 684h1v1h-1zM211 684h1v1h-1zM227 684h1v1h-1zM243 684h1v1h-1zM259 684h1v1h-1zM275 684h1v1h-1zM291 684h1v1h-1zM307 684h1v1h-1zM322 684h1v1h-1zM338 684h1v1h-1zM354 684h1v1h-1zM370 684h1v1h-1zM386 684h1v1h-1zM402 684h1v1h-1zM418 684h1v1h-1zM433 684h1v1h-1zM449 684h1v1h-1zM465 684h1v1h-1zM481 684h1v1h-1zM497 684h1v1h-1zM513 684h1v1h-1zM529 684h1v1h-1zM544 684h1v1h-1zM560 684h1v1h-1zM576 684h1v1h-1zM592 684h1v1h-1zM608 684h1v1h-1zM624 684h1v1h-1zM640 684h1v1h-1zM655 684h1v1h-1zM671 684h1v1h-1zM687 684h1v1h-1zM703 684h1v1h-1zM719 684h1v1h-1zM735 684h1v1h-1zM751 684h1v1h-1zM766 684h1v1h-1zM782 684h1v1h-1zM798 684h1v1h-1zM814 684h1v1h-1zM830 684h1v1h-1zM846 684h1v1h-1zM862 684h1v1h-1zM877 684h1v1h-1zM893 684h1v1h-1zM909 684h1v1h-1zM925 684h1v1h-1zM941 684h1v1h-1zM957 684h1v1h-1zM973 684h1v1h-1zM988 684h1v1h-1zM1004 684h1v1h-1zM1020 684h1v1h-1zM1036 684h1v1h-1zM1052 684h1v1h-1zM1068 684h1v1h-1zM1084 684h1v1h-1zM1099 684h1v1h-1zM1115 684h1v1h-1zM1131 684h1v1h-1zM1147 684h1v1h-1zM1163 684h1v1h-1zM1179 684h1v1h-1zM1195 684h1v1h-1zM1210 684h1v1h-1zM1226 684h1v1h-1zM1242 684h1v1h-1zM1258 684h1v1h-1zM1274 684h1v1h-1zM1290 684h1v1h-1zM1306 684h1v1h-1zM1321 684h1v1h-1zM1337 684h1v1h-1zM1353 684h1v1h-1zM1369 684h1v1h-1zM1385 684h1v1h-1zM1401 684h1v1h-1zM1417 684h1v1h-1zM1432 684h1v1h-1zM1448 684h1v1h-1zM1464 684h1v1h-1zM1480 684h1v1h-1zM1496 684h1v1h-1zM1512 684h1v1h-1zM1528 684h1v1h-1zM1543 684h1v1h-1zM1559 684h1v1h-1zM1575 684h1v1h-1zM1591 684h1v1h-1zM1607 684h1v1h-1zM1623 684h1v1h-1zM1639 684h1v1h-1zM1654 684h1v1h-1zM1670 684h1v1h-1zM37 700h1v1h-1zM53 700h1v1h-1zM69 700h1v1h-1zM85 700h1v1h-1zM100 700h1v1h-1zM116 700h1v1h-1zM132 700h1v1h-1zM148 700h1v1h-1zM164 700h1v1h-1zM180 700h1v1h-1zM196 700h1v1h-1zM211 700h1v1h-1zM227 700h1v1h-1zM243 700h1v1h-1zM259 700h1v1h-1zM275 700h1v1h-1zM291 700h1v1h-1zM307 700h1v1h-1zM322 700h1v1h-1zM338 700h1v1h-1zM354 700h1v1h-1zM370 700h1v1h-1zM386 700h1v1h-1zM402 700h1v1h-1zM418 700h1v1h-1zM433 700h1v1h-1zM449 700h1v1h-1zM465 700h1v1h-1zM481 700h1v1h-1zM497 700h1v1h-1zM513 700h1v1h-1zM529 700h1v1h-1zM544 700h1v1h-1zM560 700h1v1h-1zM576 700h1v1h-1zM592 700h1v1h-1zM608 700h1v1h-1zM624 700h1v1h-1zM640 700h1v1h-1zM655 700h1v1h-1zM671 700h1v1h-1zM687 700h1v1h-1zM703 700h1v1h-1zM719 700h1v1h-1zM735 700h1v1h-1zM751 700h1v1h-1zM766 700h1v1h-1zM782 700h1v1h-1zM798 700h1v1h-1zM814 700h1v1h-1zM830 700h1v1h-1zM846 700h1v1h-1zM862 700h1v1h-1zM877 700h1v1h-1zM893 700h1v1h-1zM909 700h1v1h-1zM925 700h1v1h-1zM941 700h1v1h-1zM957 700h1v1h-1zM973 700h1v1h-1zM988 700h1v1h-1zM1004 700h1v1h-1zM1020 700h1v1h-1zM1036 700h1v1h-1zM1052 700h1v1h-1zM1068 700h1v1h-1zM1084 700h1v1h-1zM1099 700h1v1h-1zM1115 700h1v1h-1zM1131 700h1v1h-1zM1147 700h1v1h-1zM1163 700h1v1h-1zM1179 700h1v1h-1zM1195 700h1v1h-1zM1210 700h1v1h-1zM1226 700h1v1h-1zM1242 700h1v1h-1zM1258 700h1v1h-1zM1274 700h1v1h-1zM1290 700h1v1h-1zM1306 700h1v1h-1zM1321 700h1v1h-1zM1337 700h1v1h-1zM1353 700h1v1h-1zM1369 700h1v1h-1zM1385 700h1v1h-1zM1401 700h1v1h-1zM1417 700h1v1h-1zM1432 700h1v1h-1zM1448 700h1v1h-1zM1464 700h1v1h-1zM1480 700h1v1h-1zM1496 700h1v1h-1zM1512 700h1v1h-1zM1528 700h1v1h-1zM1543 700h1v1h-1zM1559 700h1v1h-1zM1575 700h1v1h-1zM1591 700h1v1h-1zM1607 700h1v1h-1zM1623 700h1v1h-1zM1639 700h1v1h-1zM1654 700h1v1h-1zM1670 700h1v1h-1zM37 716h1v1h-1zM53 716h1v1h-1zM69 716h1v1h-1zM85 716h1v1h-1zM100 716h1v1h-1zM116 716h1v1h-1zM132 716h1v1h-1zM148 716h1v1h-1zM164 716h1v1h-1zM180 716h1v1h-1zM196 716h1v1h-1zM211 716h1v1h-1zM227 716h1v1h-1zM243 716h1v1h-1zM259 716h1v1h-1zM275 716h1v1h-1zM291 716h1v1h-1zM307 716h1v1h-1zM322 716h1v1h-1zM338 716h1v1h-1zM354 716h1v1h-1zM370 716h1v1h-1zM386 716h1v1h-1zM402 716h1v1h-1zM418 716h1v1h-1zM433 716h1v1h-1zM449 716h1v1h-1zM465 716h1v1h-1zM481 716h1v1h-1zM497 716h1v1h-1zM513 716h1v1h-1zM529 716h1v1h-1zM544 716h1v1h-1zM560 716h1v1h-1zM576 716h1v1h-1zM592 716h1v1h-1zM608 716h1v1h-1zM624 716h1v1h-1zM640 716h1v1h-1zM655 716h1v1h-1zM671 716h1v1h-1zM687 716h1v1h-1zM703 716h1v1h-1zM719 716h1v1h-1zM735 716h1v1h-1zM751 716h1v1h-1zM766 716h1v1h-1zM782 716h1v1h-1zM798 716h1v1h-1zM814 716h1v1h-1zM830 716h1v1h-1zM846 716h1v1h-1zM862 716h1v1h-1zM877 716h1v1h-1zM893 716h1v1h-1zM909 716h1v1h-1zM925 716h1v1h-1zM941 716h1v1h-1zM957 716h1v1h-1zM973 716h1v1h-1zM988 716h1v1h-1zM1004 716h1v1h-1zM1020 716h1v1h-1zM1036 716h1v1h-1zM1052 716h1v1h-1zM1068 716h1v1h-1zM1084 716h1v1h-1zM1099 716h1v1h-1zM1115 716h1v1h-1zM1131 716h1v1h-1zM1147 716h1v1h-1zM1163 716h1v1h-1zM1179 716h1v1h-1zM1195 716h1v1h-1zM1210 716h1v1h-1zM1226 716h1v1h-1zM1242 716h1v1h-1zM1258 716h1v1h-1zM1274 716h1v1h-1zM1290 716h1v1h-1zM1306 716h1v1h-1zM1321 716h1v1h-1zM1337 716h1v1h-1zM1353 716h1v1h-1zM1369 716h1v1h-1zM1385 716h1v1h-1zM1401 716h1v1h-1zM1417 716h1v1h-1zM1432 716h1v1h-1zM1448 716h1v1h-1zM1464 716h1v1h-1zM1480 716h1v1h-1zM1496 716h1v1h-1zM1512 716h1v1h-1zM1528 716h1v1h-1zM1543 716h1v1h-1zM1559 716h1v1h-1zM1575 716h1v1h-1zM1591 716h1v1h-1zM1607 716h1v1h-1zM1623 716h1v1h-1zM1639 716h1v1h-1zM1654 716h1v1h-1zM1670 716h1v1h-1zM37 732h1v1h-1zM53 732h1v1h-1zM69 732h1v1h-1zM85 732h1v1h-1zM100 732h1v1h-1zM116 732h1v1h-1zM132 732h1v1h-1zM148 732h1v1h-1zM164 732h1v1h-1zM180 732h1v1h-1zM196 732h1v1h-1zM211 732h1v1h-1zM227 732h1v1h-1zM243 732h1v1h-1zM259 732h1v1h-1zM275 732h1v1h-1zM291 732h1v1h-1zM307 732h1v1h-1zM322 732h1v1h-1zM338 732h1v1h-1zM354 732h1v1h-1zM370 732h1v1h-1zM386 732h1v1h-1zM402 732h1v1h-1zM418 732h1v1h-1zM433 732h1v1h-1zM449 732h1v1h-1zM465 732h1v1h-1zM481 732h1v1h-1zM497 732h1v1h-1zM513 732h1v1h-1zM529 732h1v1h-1zM544 732h1v1h-1zM560 732h1v1h-1zM576 732h1v1h-1zM592 732h1v1h-1zM608 732h1v1h-1zM624 732h1v1h-1zM640 732h1v1h-1zM655 732h1v1h-1zM671 732h1v1h-1zM687 732h1v1h-1zM703 732h1v1h-1zM719 732h1v1h-1zM735 732h1v1h-1zM751 732h1v1h-1zM766 732h1v1h-1zM782 732h1v1h-1zM798 732h1v1h-1zM814 732h1v1h-1zM830 732h1v1h-1zM846 732h1v1h-1zM862 732h1v1h-1zM877 732h1v1h-1zM893 732h1v1h-1zM909 732h1v1h-1zM925 732h1v1h-1zM941 732h1v1h-1zM957 732h1v1h-1zM973 732h1v1h-1zM988 732h1v1h-1zM1004 732h1v1h-1zM1020 732h1v1h-1zM1036 732h1v1h-1zM1052 732h1v1h-1zM1068 732h1v1h-1zM1084 732h1v1h-1zM1099 732h1v1h-1zM1115 732h1v1h-1zM1131 732h1v1h-1zM1147 732h1v1h-1zM1163 732h1v1h-1zM1179 732h1v1h-1zM1195 732h1v1h-1zM1210 732h1v1h-1zM1226 732h1v1h-1zM1242 732h1v1h-1zM1258 732h1v1h-1zM1274 732h1v1h-1zM1290 732h1v1h-1zM1306 732h1v1h-1zM1321 732h1v1h-1zM1337 732h1v1h-1zM1353 732h1v1h-1zM1369 732h1v1h-1zM1385 732h1v1h-1zM1401 732h1v1h-1zM1417 732h1v1h-1zM1432 732h1v1h-1zM1448 732h1v1h-1zM1464 732h1v1h-1zM1480 732h1v1h-1zM1496 732h1v1h-1zM1512 732h1v1h-1zM1528 732h1v1h-1zM1543 732h1v1h-1zM1559 732h1v1h-1zM1575 732h1v1h-1zM1591 732h1v1h-1zM1607 732h1v1h-1zM1623 732h1v1h-1zM1639 732h1v1h-1zM1654 732h1v1h-1zM1670 732h1v1h-1zM37 748h1v1h-1zM53 748h1v1h-1zM69 748h1v1h-1zM85 748h1v1h-1zM100 748h1v1h-1zM116 748h1v1h-1zM132 748h1v1h-1zM148 748h1v1h-1zM164 748h1v1h-1zM180 748h1v1h-1zM196 748h1v1h-1zM211 748h1v1h-1zM227 748h1v1h-1zM243 748h1v1h-1zM259 748h1v1h-1zM275 748h1v1h-1zM291 748h1v1h-1zM307 748h1v1h-1zM322 748h1v1h-1zM338 748h1v1h-1zM354 748h1v1h-1zM370 748h1v1h-1zM386 748h1v1h-1zM402 748h1v1h-1zM418 748h1v1h-1zM433 748h1v1h-1zM449 748h1v1h-1zM465 748h1v1h-1zM481 748h1v1h-1zM497 748h1v1h-1zM513 748h1v1h-1zM529 748h1v1h-1zM544 748h1v1h-1zM560 748h1v1h-1zM576 748h1v1h-1zM592 748h1v1h-1zM608 748h1v1h-1zM624 748h1v1h-1zM640 748h1v1h-1zM655 748h1v1h-1zM671 748h1v1h-1zM687 748h1v1h-1zM703 748h1v1h-1zM719 748h1v1h-1zM735 748h1v1h-1zM751 748h1v1h-1zM766 748h1v1h-1zM782 748h1v1h-1zM798 748h1v1h-1zM814 748h1v1h-1zM830 748h1v1h-1zM846 748h1v1h-1zM862 748h1v1h-1zM877 748h1v1h-1zM893 748h1v1h-1zM909 748h1v1h-1zM925 748h1v1h-1zM941 748h1v1h-1zM957 748h1v1h-1zM973 748h1v1h-1zM988 748h1v1h-1zM1004 748h1v1h-1zM1020 748h1v1h-1zM1036 748h1v1h-1zM1052 748h1v1h-1zM1068 748h1v1h-1zM1084 748h1v1h-1zM1099 748h1v1h-1zM1115 748h1v1h-1zM1131 748h1v1h-1zM1147 748h1v1h-1zM1163 748h1v1h-1zM1179 748h1v1h-1zM1195 748h1v1h-1zM1210 748h1v1h-1zM1226 748h1v1h-1zM1242 748h1v1h-1zM1258 748h1v1h-1zM1274 748h1v1h-1zM1290 748h1v1h-1zM1306 748h1v1h-1zM1321 748h1v1h-1zM1337 748h1v1h-1zM1353 748h1v1h-1zM1369 748h1v1h-1zM1385 748h1v1h-1zM1401 748h1v1h-1zM1417 748h1v1h-1zM1432 748h1v1h-1zM1448 748h1v1h-1zM1464 748h1v1h-1zM1480 748h1v1h-1zM1496 748h1v1h-1zM1512 748h1v1h-1zM1528 748h1v1h-1zM1543 748h1v1h-1zM1559 748h1v1h-1zM1575 748h1v1h-1zM1591 748h1v1h-1zM1607 748h1v1h-1zM1623 748h1v1h-1zM1639 748h1v1h-1zM1654 748h1v1h-1zM1670 748h1v1h-1zM37 763h1v1h-1zM53 763h1v1h-1zM69 763h1v1h-1zM85 763h1v1h-1zM100 763h1v1h-1zM116 763h1v1h-1zM132 763h1v1h-1zM148 763h1v1h-1zM164 763h1v1h-1zM180 763h1v1h-1zM196 763h1v1h-1zM211 763h1v1h-1zM227 763h1v1h-1zM243 763h1v1h-1zM259 763h1v1h-1zM275 763h1v1h-1zM291 763h1v1h-1zM307 763h1v1h-1zM322 763h1v1h-1zM338 763h1v1h-1zM354 763h1v1h-1zM370 763h1v1h-1zM386 763h1v1h-1zM402 763h1v1h-1zM418 763h1v1h-1zM433 763h1v1h-1zM449 763h1v1h-1zM465 763h1v1h-1zM481 763h1v1h-1zM497 763h1v1h-1zM513 763h1v1h-1zM529 763h1v1h-1zM544 763h1v1h-1zM560 763h1v1h-1zM576 763h1v1h-1zM592 763h1v1h-1zM608 763h1v1h-1zM624 763h1v1h-1zM640 763h1v1h-1zM655 763h1v1h-1zM671 763h1v1h-1zM687 763h1v1h-1zM703 763h1v1h-1zM719 763h1v1h-1zM735 763h1v1h-1zM751 763h1v1h-1zM766 763h1v1h-1zM782 763h1v1h-1zM798 763h1v1h-1zM814 763h1v1h-1zM830 763h1v1h-1zM846 763h1v1h-1zM862 763h1v1h-1zM877 763h1v1h-1zM893 763h1v1h-1zM909 763h1v1h-1zM925 763h1v1h-1zM941 763h1v1h-1zM957 763h1v1h-1zM973 763h1v1h-1zM988 763h1v1h-1zM1004 763h1v1h-1zM1020 763h1v1h-1zM1036 763h1v1h-1zM1052 763h1v1h-1zM1068 763h1v1h-1zM1084 763h1v1h-1zM1099 763h1v1h-1zM1115 763h1v1h-1zM1131 763h1v1h-1zM1147 763h1v1h-1zM1163 763h1v1h-1zM1179 763h1v1h-1zM1195 763h1v1h-1zM1210 763h1v1h-1zM1226 763h1v1h-1zM1242 763h1v1h-1zM1258 763h1v1h-1zM1274 763h1v1h-1zM1290 763h1v1h-1zM1306 763h1v1h-1zM1321 763h1v1h-1zM1337 763h1v1h-1zM1353 763h1v1h-1zM1369 763h1v1h-1zM1385 763h1v1h-1zM1401 763h1v1h-1zM1417 763h1v1h-1zM1432 763h1v1h-1zM1448 763h1v1h-1zM1464 763h1v1h-1zM1480 763h1v1h-1zM1496 763h1v1h-1zM1512 763h1v1h-1zM1528 763h1v1h-1zM1543 763h1v1h-1zM1559 763h1v1h-1zM1575 763h1v1h-1zM1591 763h1v1h-1zM1607 763h1v1h-1zM1623 763h1v1h-1zM1639 763h1v1h-1zM1654 763h1v1h-1zM1670 763h1v1h-1zM37 779h1v1h-1zM53 779h1v1h-1zM69 779h1v1h-1zM85 779h1v1h-1zM100 779h1v1h-1zM116 779h1v1h-1zM132 779h1v1h-1zM148 779h1v1h-1zM164 779h1v1h-1zM180 779h1v1h-1zM196 779h1v1h-1zM211 779h1v1h-1zM227 779h1v1h-1zM243 779h1v1h-1zM259 779h1v1h-1zM275 779h1v1h-1zM291 779h1v1h-1zM307 779h1v1h-1zM322 779h1v1h-1zM338 779h1v1h-1zM354 779h1v1h-1zM370 779h1v1h-1zM386 779h1v1h-1zM402 779h1v1h-1zM418 779h1v1h-1zM433 779h1v1h-1zM449 779h1v1h-1zM465 779h1v1h-1zM481 779h1v1h-1zM497 779h1v1h-1zM513 779h1v1h-1zM529 779h1v1h-1zM544 779h1v1h-1zM560 779h1v1h-1zM576 779h1v1h-1zM592 779h1v1h-1zM608 779h1v1h-1zM624 779h1v1h-1zM640 779h1v1h-1zM655 779h1v1h-1zM671 779h1v1h-1zM687 779h1v1h-1zM703 779h1v1h-1zM719 779h1v1h-1zM735 779h1v1h-1zM751 779h1v1h-1zM766 779h1v1h-1zM782 779h1v1h-1zM798 779h1v1h-1zM814 779h1v1h-1zM830 779h1v1h-1zM846 779h1v1h-1zM862 779h1v1h-1zM877 779h1v1h-1zM893 779h1v1h-1zM909 779h1v1h-1zM925 779h1v1h-1zM941 779h1v1h-1zM957 779h1v1h-1zM973 779h1v1h-1zM988 779h1v1h-1zM1004 779h1v1h-1zM1020 779h1v1h-1zM1036 779h1v1h-1zM1052 779h1v1h-1zM1068 779h1v1h-1zM1084 779h1v1h-1zM1099 779h1v1h-1zM1115 779h1v1h-1zM1131 779h1v1h-1zM1147 779h1v1h-1zM1163 779h1v1h-1zM1179 779h1v1h-1zM1195 779h1v1h-1zM1210 779h1v1h-1zM1226 779h1v1h-1zM1242 779h1v1h-1zM1258 779h1v1h-1zM1274 779h1v1h-1zM1290 779h1v1h-1zM1306 779h1v1h-1zM1321 779h1v1h-1zM1337 779h1v1h-1zM1353 779h1v1h-1zM1369 779h1v1h-1zM1385 779h1v1h-1zM1401 779h1v1h-1zM1417 779h1v1h-1zM1432 779h1v1h-1zM1448 779h1v1h-1zM1464 779h1v1h-1zM1480 779h1v1h-1zM1496 779h1v1h-1zM1512 779h1v1h-1zM1528 779h1v1h-1zM1543 779h1v1h-1zM1559 779h1v1h-1zM1575 779h1v1h-1zM1591 779h1v1h-1zM1607 779h1v1h-1zM1623 779h1v1h-1zM1639 779h1v1h-1zM1654 779h1v1h-1zM1670 779h1v1h-1zM37 795h1v1h-1zM53 795h1v1h-1zM69 795h1v1h-1zM85 795h1v1h-1zM100 795h1v1h-1zM116 795h1v1h-1zM132 795h1v1h-1zM148 795h1v1h-1zM164 795h1v1h-1zM180 795h1v1h-1zM196 795h1v1h-1zM211 795h1v1h-1zM227 795h1v1h-1zM243 795h1v1h-1zM259 795h1v1h-1zM275 795h1v1h-1zM291 795h1v1h-1zM307 795h1v1h-1zM322 795h1v1h-1zM338 795h1v1h-1zM354 795h1v1h-1zM370 795h1v1h-1zM386 795h1v1h-1zM402 795h1v1h-1zM418 795h1v1h-1zM433 795h1v1h-1zM449 795h1v1h-1zM465 795h1v1h-1zM481 795h1v1h-1zM497 795h1v1h-1zM513 795h1v1h-1zM529 795h1v1h-1zM544 795h1v1h-1zM560 795h1v1h-1zM576 795h1v1h-1zM592 795h1v1h-1zM608 795h1v1h-1zM624 795h1v1h-1zM640 795h1v1h-1zM655 795h1v1h-1zM671 795h1v1h-1zM687 795h1v1h-1zM703 795h1v1h-1zM719 795h1v1h-1zM735 795h1v1h-1zM751 795h1v1h-1zM766 795h1v1h-1zM782 795h1v1h-1zM798 795h1v1h-1zM814 795h1v1h-1zM830 795h1v1h-1zM846 795h1v1h-1zM862 795h1v1h-1zM877 795h1v1h-1zM893 795h1v1h-1zM909 795h1v1h-1zM925 795h1v1h-1zM941 795h1v1h-1zM957 795h1v1h-1zM973 795h1v1h-1zM988 795h1v1h-1zM1004 795h1v1h-1zM1020 795h1v1h-1zM1036 795h1v1h-1zM1052 795h1v1h-1zM1068 795h1v1h-1zM1084 795h1v1h-1zM1099 795h1v1h-1zM1115 795h1v1h-1zM1131 795h1v1h-1zM1147 795h1v1h-1zM1163 795h1v1h-1zM1179 795h1v1h-1zM1195 795h1v1h-1zM1210 795h1v1h-1zM1226 795h1v1h-1zM1242 795h1v1h-1zM1258 795h1v1h-1zM1274 795h1v1h-1zM1290 795h1v1h-1zM1306 795h1v1h-1zM1321 795h1v1h-1zM1337 795h1v1h-1zM1353 795h1v1h-1zM1369 795h1v1h-1zM1385 795h1v1h-1zM1401 795h1v1h-1zM1417 795h1v1h-1zM1432 795h1v1h-1zM1448 795h1v1h-1zM1464 795h1v1h-1zM1480 795h1v1h-1zM1496 795h1v1h-1zM1512 795h1v1h-1zM1528 795h1v1h-1zM1543 795h1v1h-1zM1559 795h1v1h-1zM1575 795h1v1h-1zM1591 795h1v1h-1zM1607 795h1v1h-1zM1623 795h1v1h-1zM1639 795h1v1h-1zM1654 795h1v1h-1zM1670 795h1v1h-1zM37 811h1v1h-1zM53 811h1v1h-1zM69 811h1v1h-1zM85 811h1v1h-1zM100 811h1v1h-1zM116 811h1v1h-1zM132 811h1v1h-1zM148 811h1v1h-1zM164 811h1v1h-1zM180 811h1v1h-1zM196 811h1v1h-1zM211 811h1v1h-1zM227 811h1v1h-1zM243 811h1v1h-1zM259 811h1v1h-1zM275 811h1v1h-1zM291 811h1v1h-1zM307 811h1v1h-1zM322 811h1v1h-1zM338 811h1v1h-1zM354 811h1v1h-1zM370 811h1v1h-1zM386 811h1v1h-1zM402 811h1v1h-1zM418 811h1v1h-1zM433 811h1v1h-1zM449 811h1v1h-1zM465 811h1v1h-1zM481 811h1v1h-1zM497 811h1v1h-1zM513 811h1v1h-1zM529 811h1v1h-1zM544 811h1v1h-1zM560 811h1v1h-1zM576 811h1v1h-1zM592 811h1v1h-1zM608 811h1v1h-1zM624 811h1v1h-1zM640 811h1v1h-1zM655 811h1v1h-1zM671 811h1v1h-1zM687 811h1v1h-1zM703 811h1v1h-1zM719 811h1v1h-1zM735 811h1v1h-1zM751 811h1v1h-1zM766 811h1v1h-1zM782 811h1v1h-1zM798 811h1v1h-1zM814 811h1v1h-1zM830 811h1v1h-1zM846 811h1v1h-1zM862 811h1v1h-1zM877 811h1v1h-1zM893 811h1v1h-1zM909 811h1v1h-1zM925 811h1v1h-1zM941 811h1v1h-1zM957 811h1v1h-1zM973 811h1v1h-1zM988 811h1v1h-1zM1004 811h1v1h-1zM1020 811h1v1h-1zM1036 811h1v1h-1zM1052 811h1v1h-1zM1068 811h1v1h-1zM1084 811h1v1h-1zM1099 811h1v1h-1zM1115 811h1v1h-1zM1131 811h1v1h-1zM1147 811h1v1h-1zM1163 811h1v1h-1zM1179 811h1v1h-1zM1195 811h1v1h-1zM1210 811h1v1h-1zM1226 811h1v1h-1zM1242 811h1v1h-1zM1258 811h1v1h-1zM1274 811h1v1h-1zM1290 811h1v1h-1zM1306 811h1v1h-1zM1321 811h1v1h-1zM1337 811h1v1h-1zM1353 811h1v1h-1zM1369 811h1v1h-1zM1385 811h1v1h-1zM1401 811h1v1h-1zM1417 811h1v1h-1zM1432 811h1v1h-1zM1448 811h1v1h-1zM1464 811h1v1h-1zM1480 811h1v1h-1zM1496 811h1v1h-1zM1512 811h1v1h-1zM1528 811h1v1h-1zM1543 811h1v1h-1zM1559 811h1v1h-1zM1575 811h1v1h-1zM1591 811h1v1h-1zM1607 811h1v1h-1zM1623 811h1v1h-1zM1639 811h1v1h-1zM1654 811h1v1h-1zM1670 811h1v1h-1zM37 827h1v1h-1zM53 827h1v1h-1zM69 827h1v1h-1zM85 827h1v1h-1zM100 827h1v1h-1zM116 827h1v1h-1zM132 827h1v1h-1zM148 827h1v1h-1zM164 827h1v1h-1zM180 827h1v1h-1zM196 827h1v1h-1zM211 827h1v1h-1zM227 827h1v1h-1zM243 827h1v1h-1zM259 827h1v1h-1zM275 827h1v1h-1zM291 827h1v1h-1zM307 827h1v1h-1zM322 827h1v1h-1zM338 827h1v1h-1zM354 827h1v1h-1zM370 827h1v1h-1zM386 827h1v1h-1zM402 827h1v1h-1zM418 827h1v1h-1zM433 827h1v1h-1zM449 827h1v1h-1zM465 827h1v1h-1zM481 827h1v1h-1zM497 827h1v1h-1zM513 827h1v1h-1zM529 827h1v1h-1zM544 827h1v1h-1zM560 827h1v1h-1zM576 827h1v1h-1zM592 827h1v1h-1zM608 827h1v1h-1zM624 827h1v1h-1zM640 827h1v1h-1zM655 827h1v1h-1zM671 827h1v1h-1zM687 827h1v1h-1zM703 827h1v1h-1zM719 827h1v1h-1zM735 827h1v1h-1zM751 827h1v1h-1zM766 827h1v1h-1zM782 827h1v1h-1zM798 827h1v1h-1zM814 827h1v1h-1zM830 827h1v1h-1zM846 827h1v1h-1zM862 827h1v1h-1zM877 827h1v1h-1zM893 827h1v1h-1zM909 827h1v1h-1zM925 827h1v1h-1zM941 827h1v1h-1zM957 827h1v1h-1zM973 827h1v1h-1zM988 827h1v1h-1zM1004 827h1v1h-1zM1020 827h1v1h-1zM1036 827h1v1h-1zM1052 827h1v1h-1zM1068 827h1v1h-1zM1084 827h1v1h-1zM1099 827h1v1h-1zM1115 827h1v1h-1zM1131 827h1v1h-1zM1147 827h1v1h-1zM1163 827h1v1h-1zM1179 827h1v1h-1zM1195 827h1v1h-1zM1210 827h1v1h-1zM1226 827h1v1h-1zM1242 827h1v1h-1zM1258 827h1v1h-1zM1274 827h1v1h-1zM1290 827h1v1h-1zM1306 827h1v1h-1zM1321 827h1v1h-1zM1337 827h1v1h-1zM1353 827h1v1h-1zM1369 827h1v1h-1zM1385 827h1v1h-1zM1401 827h1v1h-1zM1417 827h1v1h-1zM1432 827h1v1h-1zM1448 827h1v1h-1zM1464 827h1v1h-1zM1480 827h1v1h-1zM1496 827h1v1h-1zM1512 827h1v1h-1zM1528 827h1v1h-1zM1543 827h1v1h-1zM1559 827h1v1h-1zM1575 827h1v1h-1zM1591 827h1v1h-1zM1607 827h1v1h-1zM1623 827h1v1h-1zM1639 827h1v1h-1zM1654 827h1v1h-1zM1670 827h1v1h-1zM37 843h1v1h-1zM53 843h1v1h-1zM69 843h1v1h-1zM85 843h1v1h-1zM100 843h1v1h-1zM116 843h1v1h-1zM132 843h1v1h-1zM148 843h1v1h-1zM164 843h1v1h-1zM180 843h1v1h-1zM196 843h1v1h-1zM211 843h1v1h-1zM227 843h1v1h-1zM243 843h1v1h-1zM259 843h1v1h-1zM275 843h1v1h-1zM291 843h1v1h-1zM307 843h1v1h-1zM322 843h1v1h-1zM338 843h1v1h-1zM354 843h1v1h-1zM370 843h1v1h-1zM386 843h1v1h-1zM402 843h1v1h-1zM418 843h1v1h-1zM433 843h1v1h-1zM449 843h1v1h-1zM465 843h1v1h-1zM481 843h1v1h-1zM497 843h1v1h-1zM513 843h1v1h-1zM529 843h1v1h-1zM544 843h1v1h-1zM560 843h1v1h-1zM576 843h1v1h-1zM592 843h1v1h-1zM608 843h1v1h-1zM624 843h1v1h-1zM640 843h1v1h-1zM655 843h1v1h-1zM671 843h1v1h-1zM687 843h1v1h-1zM703 843h1v1h-1zM719 843h1v1h-1zM735 843h1v1h-1zM751 843h1v1h-1zM766 843h1v1h-1zM782 843h1v1h-1zM798 843h1v1h-1zM814 843h1v1h-1zM830 843h1v1h-1zM846 843h1v1h-1zM862 843h1v1h-1zM877 843h1v1h-1zM893 843h1v1h-1zM909 843h1v1h-1zM925 843h1v1h-1zM941 843h1v1h-1zM957 843h1v1h-1zM973 843h1v1h-1zM988 843h1v1h-1zM1004 843h1v1h-1zM1020 843h1v1h-1zM1036 843h1v1h-1zM1052 843h1v1h-1zM1068 843h1v1h-1zM1084 843h1v1h-1zM1099 843h1v1h-1zM1115 843h1v1h-1zM1131 843h1v1h-1zM1147 843h1v1h-1zM1163 843h1v1h-1zM1179 843h1v1h-1zM1195 843h1v1h-1zM1210 843h1v1h-1zM1226 843h1v1h-1zM1242 843h1v1h-1zM1258 843h1v1h-1zM1274 843h1v1h-1zM1290 843h1v1h-1zM1306 843h1v1h-1zM1321 843h1v1h-1zM1337 843h1v1h-1zM1353 843h1v1h-1zM1369 843h1v1h-1zM1385 843h1v1h-1zM1401 843h1v1h-1zM1417 843h1v1h-1zM1432 843h1v1h-1zM1448 843h1v1h-1zM1464 843h1v1h-1zM1480 843h1v1h-1zM1496 843h1v1h-1zM1512 843h1v1h-1zM1528 843h1v1h-1zM1543 843h1v1h-1zM1559 843h1v1h-1zM1575 843h1v1h-1zM1591 843h1v1h-1zM1607 843h1v1h-1zM1623 843h1v1h-1zM1639 843h1v1h-1zM1654 843h1v1h-1zM1670 843h1v1h-1zM37 859h1v1h-1zM53 859h1v1h-1zM69 859h1v1h-1zM85 859h1v1h-1zM100 859h1v1h-1zM116 859h1v1h-1zM132 859h1v1h-1zM148 859h1v1h-1zM164 859h1v1h-1zM180 859h1v1h-1zM196 859h1v1h-1zM211 859h1v1h-1zM227 859h1v1h-1zM243 859h1v1h-1zM259 859h1v1h-1zM275 859h1v1h-1zM291 859h1v1h-1zM307 859h1v1h-1zM322 859h1v1h-1zM338 859h1v1h-1zM354 859h1v1h-1zM370 859h1v1h-1zM386 859h1v1h-1zM402 859h1v1h-1zM418 859h1v1h-1zM433 859h1v1h-1zM449 859h1v1h-1zM465 859h1v1h-1zM481 859h1v1h-1zM497 859h1v1h-1zM513 859h1v1h-1zM529 859h1v1h-1zM544 859h1v1h-1zM560 859h1v1h-1zM576 859h1v1h-1zM592 859h1v1h-1zM608 859h1v1h-1zM624 859h1v1h-1zM640 859h1v1h-1zM655 859h1v1h-1zM671 859h1v1h-1zM687 859h1v1h-1zM703 859h1v1h-1zM719 859h1v1h-1zM735 859h1v1h-1zM751 859h1v1h-1zM766 859h1v1h-1zM782 859h1v1h-1zM798 859h1v1h-1zM814 859h1v1h-1zM830 859h1v1h-1zM846 859h1v1h-1zM862 859h1v1h-1zM877 859h1v1h-1zM893 859h1v1h-1zM909 859h1v1h-1zM925 859h1v1h-1zM941 859h1v1h-1zM957 859h1v1h-1zM973 859h1v1h-1zM988 859h1v1h-1zM1004 859h1v1h-1zM1020 859h1v1h-1zM1036 859h1v1h-1zM1052 859h1v1h-1zM1068 859h1v1h-1zM1084 859h1v1h-1zM1099 859h1v1h-1zM1115 859h1v1h-1zM1131 859h1v1h-1zM1147 859h1v1h-1zM1163 859h1v1h-1zM1179 859h1v1h-1zM1195 859h1v1h-1zM1210 859h1v1h-1zM1226 859h1v1h-1zM1242 859h1v1h-1zM1258 859h1v1h-1zM1274 859h1v1h-1zM1290 859h1v1h-1zM1306 859h1v1h-1zM1321 859h1v1h-1zM1337 859h1v1h-1zM1353 859h1v1h-1zM1369 859h1v1h-1zM1385 859h1v1h-1zM1401 859h1v1h-1zM1417 859h1v1h-1zM1432 859h1v1h-1zM1448 859h1v1h-1zM1464 859h1v1h-1zM1480 859h1v1h-1zM1496 859h1v1h-1zM1512 859h1v1h-1zM1528 859h1v1h-1zM1543 859h1v1h-1zM1559 859h1v1h-1zM1575 859h1v1h-1zM1591 859h1v1h-1zM1607 859h1v1h-1zM1623 859h1v1h-1zM1639 859h1v1h-1zM1654 859h1v1h-1zM1670 859h1v1h-1zM37 874h1v1h-1zM53 874h1v1h-1zM69 874h1v1h-1zM85 874h1v1h-1zM100 874h1v1h-1zM116 874h1v1h-1zM132 874h1v1h-1zM148 874h1v1h-1zM164 874h1v1h-1zM180 874h1v1h-1zM196 874h1v1h-1zM211 874h1v1h-1zM227 874h1v1h-1zM243 874h1v1h-1zM259 874h1v1h-1zM275 874h1v1h-1zM291 874h1v1h-1zM307 874h1v1h-1zM322 874h1v1h-1zM338 874h1v1h-1zM354 874h1v1h-1zM370 874h1v1h-1zM386 874h1v1h-1zM402 874h1v1h-1zM418 874h1v1h-1zM433 874h1v1h-1zM449 874h1v1h-1zM465 874h1v1h-1zM481 874h1v1h-1zM497 874h1v1h-1zM513 874h1v1h-1zM529 874h1v1h-1zM544 874h1v1h-1zM560 874h1v1h-1zM576 874h1v1h-1zM592 874h1v1h-1zM608 874h1v1h-1zM624 874h1v1h-1zM640 874h1v1h-1zM655 874h1v1h-1zM671 874h1v1h-1zM687 874h1v1h-1zM703 874h1v1h-1zM719 874h1v1h-1zM735 874h1v1h-1zM751 874h1v1h-1zM766 874h1v1h-1zM782 874h1v1h-1zM798 874h1v1h-1zM814 874h1v1h-1zM830 874h1v1h-1zM846 874h1v1h-1zM862 874h1v1h-1zM877 874h1v1h-1zM893 874h1v1h-1zM909 874h1v1h-1zM925 874h1v1h-1zM941 874h1v1h-1zM957 874h1v1h-1zM973 874h1v1h-1zM988 874h1v1h-1zM1004 874h1v1h-1zM1020 874h1v1h-1zM1036 874h1v1h-1zM1052 874h1v1h-1zM1068 874h1v1h-1zM1084 874h1v1h-1zM1099 874h1v1h-1zM1115 874h1v1h-1zM1131 874h1v1h-1zM1147 874h1v1h-1zM1163 874h1v1h-1zM1179 874h1v1h-1zM1195 874h1v1h-1zM1210 874h1v1h-1zM1226 874h1v1h-1zM1242 874h1v1h-1zM1258 874h1v1h-1zM1274 874h1v1h-1zM1290 874h1v1h-1zM1306 874h1v1h-1zM1321 874h1v1h-1zM1337 874h1v1h-1zM1353 874h1v1h-1zM1369 874h1v1h-1zM1385 874h1v1h-1zM1401 874h1v1h-1zM1417 874h1v1h-1zM1432 874h1v1h-1zM1448 874h1v1h-1zM1464 874h1v1h-1zM1480 874h1v1h-1zM1496 874h1v1h-1zM1512 874h1v1h-1zM1528 874h1v1h-1zM1543 874h1v1h-1zM1559 874h1v1h-1zM1575 874h1v1h-1zM1591 874h1v1h-1zM1607 874h1v1h-1zM1623 874h1v1h-1zM1639 874h1v1h-1zM1654 874h1v1h-1zM1670 874h1v1h-1zM37 890h1v1h-1zM53 890h1v1h-1zM69 890h1v1h-1zM85 890h1v1h-1zM100 890h1v1h-1zM116 890h1v1h-1zM132 890h1v1h-1zM148 890h1v1h-1zM164 890h1v1h-1zM180 890h1v1h-1zM196 890h1v1h-1zM211 890h1v1h-1zM227 890h1v1h-1zM243 890h1v1h-1zM259 890h1v1h-1zM275 890h1v1h-1zM291 890h1v1h-1zM307 890h1v1h-1zM322 890h1v1h-1zM338 890h1v1h-1zM354 890h1v1h-1zM370 890h1v1h-1zM386 890h1v1h-1zM402 890h1v1h-1zM418 890h1v1h-1zM433 890h1v1h-1zM449 890h1v1h-1zM465 890h1v1h-1zM481 890h1v1h-1zM497 890h1v1h-1zM513 890h1v1h-1zM529 890h1v1h-1zM544 890h1v1h-1zM560 890h1v1h-1zM576 890h1v1h-1zM592 890h1v1h-1zM608 890h1v1h-1zM624 890h1v1h-1zM640 890h1v1h-1zM655 890h1v1h-1zM671 890h1v1h-1zM687 890h1v1h-1zM703 890h1v1h-1zM719 890h1v1h-1zM735 890h1v1h-1zM751 890h1v1h-1zM766 890h1v1h-1zM782 890h1v1h-1zM798 890h1v1h-1zM814 890h1v1h-1zM830 890h1v1h-1zM846 890h1v1h-1zM862 890h1v1h-1zM877 890h1v1h-1zM893 890h1v1h-1zM909 890h1v1h-1zM925 890h1v1h-1zM941 890h1v1h-1zM957 890h1v1h-1zM973 890h1v1h-1zM988 890h1v1h-1zM1004 890h1v1h-1zM1020 890h1v1h-1zM1036 890h1v1h-1zM1052 890h1v1h-1zM1068 890h1v1h-1zM1084 890h1v1h-1zM1099 890h1v1h-1zM1115 890h1v1h-1zM1131 890h1v1h-1zM1147 890h1v1h-1zM1163 890h1v1h-1zM1179 890h1v1h-1zM1195 890h1v1h-1zM1210 890h1v1h-1zM1226 890h1v1h-1zM1242 890h1v1h-1zM1258 890h1v1h-1zM1274 890h1v1h-1zM1290 890h1v1h-1zM1306 890h1v1h-1zM1321 890h1v1h-1zM1337 890h1v1h-1zM1353 890h1v1h-1zM1369 890h1v1h-1zM1385 890h1v1h-1zM1401 890h1v1h-1zM1417 890h1v1h-1zM1432 890h1v1h-1zM1448 890h1v1h-1zM1464 890h1v1h-1zM1480 890h1v1h-1zM1496 890h1v1h-1zM1512 890h1v1h-1zM1528 890h1v1h-1zM1543 890h1v1h-1zM1559 890h1v1h-1zM1575 890h1v1h-1zM1591 890h1v1h-1zM1607 890h1v1h-1zM1623 890h1v1h-1zM1639 890h1v1h-1zM1654 890h1v1h-1zM1670 890h1v1h-1zM37 906h1v1h-1zM53 906h1v1h-1zM69 906h1v1h-1zM85 906h1v1h-1zM100 906h1v1h-1zM116 906h1v1h-1zM132 906h1v1h-1zM148 906h1v1h-1zM164 906h1v1h-1zM180 906h1v1h-1zM196 906h1v1h-1zM211 906h1v1h-1zM227 906h1v1h-1zM243 906h1v1h-1zM259 906h1v1h-1zM275 906h1v1h-1zM291 906h1v1h-1zM307 906h1v1h-1zM322 906h1v1h-1zM338 906h1v1h-1zM354 906h1v1h-1zM370 906h1v1h-1zM386 906h1v1h-1zM402 906h1v1h-1zM418 906h1v1h-1zM433 906h1v1h-1zM449 906h1v1h-1zM465 906h1v1h-1zM481 906h1v1h-1zM497 906h1v1h-1zM513 906h1v1h-1zM529 906h1v1h-1zM544 906h1v1h-1zM560 906h1v1h-1zM576 906h1v1h-1zM592 906h1v1h-1zM608 906h1v1h-1zM624 906h1v1h-1zM640 906h1v1h-1zM655 906h1v1h-1zM671 906h1v1h-1zM687 906h1v1h-1zM703 906h1v1h-1zM719 906h1v1h-1zM735 906h1v1h-1zM751 906h1v1h-1zM766 906h1v1h-1zM782 906h1v1h-1zM798 906h1v1h-1zM814 906h1v1h-1zM830 906h1v1h-1zM846 906h1v1h-1zM862 906h1v1h-1zM877 906h1v1h-1zM893 906h1v1h-1zM909 906h1v1h-1zM925 906h1v1h-1zM941 906h1v1h-1zM957 906h1v1h-1zM973 906h1v1h-1zM988 906h1v1h-1zM1004 906h1v1h-1zM1020 906h1v1h-1zM1036 906h1v1h-1zM1052 906h1v1h-1zM1068 906h1v1h-1zM1084 906h1v1h-1zM1099 906h1v1h-1zM1115 906h1v1h-1zM1131 906h1v1h-1zM1147 906h1v1h-1zM1163 906h1v1h-1zM1179 906h1v1h-1zM1195 906h1v1h-1zM1210 906h1v1h-1zM1226 906h1v1h-1zM1242 906h1v1h-1zM1258 906h1v1h-1zM1274 906h1v1h-1zM1290 906h1v1h-1zM1306 906h1v1h-1zM1321 906h1v1h-1zM1337 906h1v1h-1zM1353 906h1v1h-1zM1369 906h1v1h-1zM1385 906h1v1h-1zM1401 906h1v1h-1zM1417 906h1v1h-1zM1432 906h1v1h-1zM1448 906h1v1h-1zM1464 906h1v1h-1zM1480 906h1v1h-1zM1496 906h1v1h-1zM1512 906h1v1h-1zM1528 906h1v1h-1zM1543 906h1v1h-1zM1559 906h1v1h-1zM1575 906h1v1h-1zM1591 906h1v1h-1zM1607 906h1v1h-1zM1623 906h1v1h-1zM1639 906h1v1h-1zM1654 906h1v1h-1zM1670 906h1v1h-1zM37 922h1v1h-1zM53 922h1v1h-1zM69 922h1v1h-1zM85 922h1v1h-1zM100 922h1v1h-1zM116 922h1v1h-1zM132 922h1v1h-1zM148 922h1v1h-1zM164 922h1v1h-1zM180 922h1v1h-1zM196 922h1v1h-1zM211 922h1v1h-1zM227 922h1v1h-1zM243 922h1v1h-1zM259 922h1v1h-1zM275 922h1v1h-1zM291 922h1v1h-1zM307 922h1v1h-1zM322 922h1v1h-1zM338 922h1v1h-1zM354 922h1v1h-1zM370 922h1v1h-1zM386 922h1v1h-1zM402 922h1v1h-1zM418 922h1v1h-1zM433 922h1v1h-1zM449 922h1v1h-1zM465 922h1v1h-1zM481 922h1v1h-1zM497 922h1v1h-1zM513 922h1v1h-1zM529 922h1v1h-1zM544 922h1v1h-1zM560 922h1v1h-1zM576 922h1v1h-1zM592 922h1v1h-1zM608 922h1v1h-1zM624 922h1v1h-1zM640 922h1v1h-1zM655 922h1v1h-1zM671 922h1v1h-1zM687 922h1v1h-1zM703 922h1v1h-1zM719 922h1v1h-1zM735 922h1v1h-1zM751 922h1v1h-1zM766 922h1v1h-1zM782 922h1v1h-1zM798 922h1v1h-1zM814 922h1v1h-1zM830 922h1v1h-1zM846 922h1v1h-1zM862 922h1v1h-1zM877 922h1v1h-1zM893 922h1v1h-1zM909 922h1v1h-1zM925 922h1v1h-1zM941 922h1v1h-1zM957 922h1v1h-1zM973 922h1v1h-1zM988 922h1v1h-1zM1004 922h1v1h-1zM1020 922h1v1h-1zM1036 922h1v1h-1zM1052 922h1v1h-1zM1068 922h1v1h-1zM1084 922h1v1h-1zM1099 922h1v1h-1zM1115 922h1v1h-1zM1131 922h1v1h-1zM1147 922h1v1h-1zM1163 922h1v1h-1zM1179 922h1v1h-1zM1195 922h1v1h-1zM1210 922h1v1h-1zM1226 922h1v1h-1zM1242 922h1v1h-1zM1258 922h1v1h-1zM1274 922h1v1h-1zM1290 922h1v1h-1zM1306 922h1v1h-1zM1321 922h1v1h-1zM1337 922h1v1h-1zM1353 922h1v1h-1zM1369 922h1v1h-1zM1385 922h1v1h-1zM1401 922h1v1h-1zM1417 922h1v1h-1zM1432 922h1v1h-1zM1448 922h1v1h-1zM1464 922h1v1h-1zM1480 922h1v1h-1zM1496 922h1v1h-1zM1512 922h1v1h-1zM1528 922h1v1h-1zM1543 922h1v1h-1zM1559 922h1v1h-1zM1575 922h1v1h-1zM1591 922h1v1h-1zM1607 922h1v1h-1zM1623 922h1v1h-1zM1639 922h1v1h-1zM1654 922h1v1h-1zM1670 922h1v1h-1zM37 938h1v1h-1zM53 938h1v1h-1zM69 938h1v1h-1zM85 938h1v1h-1zM100 938h1v1h-1zM116 938h1v1h-1zM132 938h1v1h-1zM148 938h1v1h-1zM164 938h1v1h-1zM180 938h1v1h-1zM196 938h1v1h-1zM211 938h1v1h-1zM227 938h1v1h-1zM243 938h1v1h-1zM259 938h1v1h-1zM275 938h1v1h-1zM291 938h1v1h-1zM307 938h1v1h-1zM322 938h1v1h-1zM338 938h1v1h-1zM354 938h1v1h-1zM370 938h1v1h-1zM386 938h1v1h-1zM402 938h1v1h-1zM418 938h1v1h-1zM433 938h1v1h-1zM449 938h1v1h-1zM465 938h1v1h-1zM481 938h1v1h-1zM497 938h1v1h-1zM513 938h1v1h-1zM529 938h1v1h-1zM544 938h1v1h-1zM560 938h1v1h-1zM576 938h1v1h-1zM592 938h1v1h-1zM608 938h1v1h-1zM624 938h1v1h-1zM640 938h1v1h-1zM655 938h1v1h-1zM671 938h1v1h-1zM687 938h1v1h-1zM703 938h1v1h-1zM719 938h1v1h-1zM735 938h1v1h-1zM751 938h1v1h-1zM766 938h1v1h-1zM782 938h1v1h-1zM798 938h1v1h-1zM814 938h1v1h-1zM830 938h1v1h-1zM846 938h1v1h-1zM862 938h1v1h-1zM877 938h1v1h-1zM893 938h1v1h-1zM909 938h1v1h-1zM925 938h1v1h-1zM941 938h1v1h-1zM957 938h1v1h-1zM973 938h1v1h-1zM988 938h1v1h-1zM1004 938h1v1h-1zM1020 938h1v1h-1zM1036 938h1v1h-1zM1052 938h1v1h-1zM1068 938h1v1h-1zM1084 938h1v1h-1zM1099 938h1v1h-1zM1115 938h1v1h-1zM1131 938h1v1h-1zM1147 938h1v1h-1zM1163 938h1v1h-1zM1179 938h1v1h-1zM1195 938h1v1h-1zM1210 938h1v1h-1zM1226 938h1v1h-1zM1242 938h1v1h-1zM1258 938h1v1h-1zM1274 938h1v1h-1zM1290 938h1v1h-1zM1306 938h1v1h-1zM1321 938h1v1h-1zM1337 938h1v1h-1zM1353 938h1v1h-1zM1369 938h1v1h-1zM1385 938h1v1h-1zM1401 938h1v1h-1zM1417 938h1v1h-1zM1432 938h1v1h-1zM1448 938h1v1h-1zM1464 938h1v1h-1zM1480 938h1v1h-1zM1496 938h1v1h-1zM1512 938h1v1h-1zM1528 938h1v1h-1zM1543 938h1v1h-1zM1559 938h1v1h-1zM1575 938h1v1h-1zM1591 938h1v1h-1zM1607 938h1v1h-1zM1623 938h1v1h-1zM1639 938h1v1h-1zM1654 938h1v1h-1zM1670 938h1v1h-1zM37 954h1v1h-1zM53 954h1v1h-1zM69 954h1v1h-1zM85 954h1v1h-1zM100 954h1v1h-1zM116 954h1v1h-1zM132 954h1v1h-1zM148 954h1v1h-1zM164 954h1v1h-1zM180 954h1v1h-1zM196 954h1v1h-1zM211 954h1v1h-1zM227 954h1v1h-1zM243 954h1v1h-1zM259 954h1v1h-1zM275 954h1v1h-1zM291 954h1v1h-1zM307 954h1v1h-1zM322 954h1v1h-1zM338 954h1v1h-1zM354 954h1v1h-1zM370 954h1v1h-1zM386 954h1v1h-1zM402 954h1v1h-1zM418 954h1v1h-1zM433 954h1v1h-1zM449 954h1v1h-1zM465 954h1v1h-1zM481 954h1v1h-1zM497 954h1v1h-1zM513 954h1v1h-1zM529 954h1v1h-1zM544 954h1v1h-1zM560 954h1v1h-1zM576 954h1v1h-1zM592 954h1v1h-1zM608 954h1v1h-1zM624 954h1v1h-1zM640 954h1v1h-1zM655 954h1v1h-1zM671 954h1v1h-1zM687 954h1v1h-1zM703 954h1v1h-1zM719 954h1v1h-1zM735 954h1v1h-1zM751 954h1v1h-1zM766 954h1v1h-1zM782 954h1v1h-1zM798 954h1v1h-1zM814 954h1v1h-1zM830 954h1v1h-1zM846 954h1v1h-1zM862 954h1v1h-1zM877 954h1v1h-1zM893 954h1v1h-1zM909 954h1v1h-1zM925 954h1v1h-1zM941 954h1v1h-1zM957 954h1v1h-1zM973 954h1v1h-1zM988 954h1v1h-1zM1004 954h1v1h-1zM1020 954h1v1h-1zM1036 954h1v1h-1zM1052 954h1v1h-1zM1068 954h1v1h-1zM1084 954h1v1h-1zM1099 954h1v1h-1zM1115 954h1v1h-1zM1131 954h1v1h-1zM1147 954h1v1h-1zM1163 954h1v1h-1zM1179 954h1v1h-1zM1195 954h1v1h-1zM1210 954h1v1h-1zM1226 954h1v1h-1zM1242 954h1v1h-1zM1258 954h1v1h-1zM1274 954h1v1h-1zM1290 954h1v1h-1zM1306 954h1v1h-1zM1321 954h1v1h-1zM1337 954h1v1h-1zM1353 954h1v1h-1zM1369 954h1v1h-1zM1385 954h1v1h-1zM1401 954h1v1h-1zM1417 954h1v1h-1zM1432 954h1v1h-1zM1448 954h1v1h-1zM1464 954h1v1h-1zM1480 954h1v1h-1zM1496 954h1v1h-1zM1512 954h1v1h-1zM1528 954h1v1h-1zM1543 954h1v1h-1zM1559 954h1v1h-1zM1575 954h1v1h-1zM1591 954h1v1h-1zM1607 954h1v1h-1zM1623 954h1v1h-1zM1639 954h1v1h-1zM1654 954h1v1h-1zM1670 954h1v1h-1zM37 970h1v1h-1zM53 970h1v1h-1zM69 970h1v1h-1zM85 970h1v1h-1zM100 970h1v1h-1zM116 970h1v1h-1zM132 970h1v1h-1zM148 970h1v1h-1zM164 970h1v1h-1zM180 970h1v1h-1zM196 970h1v1h-1zM211 970h1v1h-1zM227 970h1v1h-1zM243 970h1v1h-1zM259 970h1v1h-1zM275 970h1v1h-1zM291 970h1v1h-1zM307 970h1v1h-1zM322 970h1v1h-1zM338 970h1v1h-1zM354 970h1v1h-1zM370 970h1v1h-1zM386 970h1v1h-1zM402 970h1v1h-1zM418 970h1v1h-1zM433 970h1v1h-1zM449 970h1v1h-1zM465 970h1v1h-1zM481 970h1v1h-1zM497 970h1v1h-1zM513 970h1v1h-1zM529 970h1v1h-1zM544 970h1v1h-1zM560 970h1v1h-1zM576 970h1v1h-1zM592 970h1v1h-1zM608 970h1v1h-1zM624 970h1v1h-1zM640 970h1v1h-1zM655 970h1v1h-1zM671 970h1v1h-1zM687 970h1v1h-1zM703 970h1v1h-1zM719 970h1v1h-1zM735 970h1v1h-1zM751 970h1v1h-1zM766 970h1v1h-1zM782 970h1v1h-1zM798 970h1v1h-1zM814 970h1v1h-1zM830 970h1v1h-1zM846 970h1v1h-1zM862 970h1v1h-1zM877 970h1v1h-1zM893 970h1v1h-1zM909 970h1v1h-1zM925 970h1v1h-1zM941 970h1v1h-1zM957 970h1v1h-1zM973 970h1v1h-1zM988 970h1v1h-1zM1004 970h1v1h-1zM1020 970h1v1h-1zM1036 970h1v1h-1zM1052 970h1v1h-1zM1068 970h1v1h-1zM1084 970h1v1h-1zM1099 970h1v1h-1zM1115 970h1v1h-1zM1131 970h1v1h-1zM1147 970h1v1h-1zM1163 970h1v1h-1zM1179 970h1v1h-1zM1195 970h1v1h-1zM1210 970h1v1h-1zM1226 970h1v1h-1zM1242 970h1v1h-1zM1258 970h1v1h-1zM1274 970h1v1h-1zM1290 970h1v1h-1zM1306 970h1v1h-1zM1321 970h1v1h-1zM1337 970h1v1h-1zM1353 970h1v1h-1zM1369 970h1v1h-1zM1385 970h1v1h-1zM1401 970h1v1h-1zM1417 970h1v1h-1zM1432 970h1v1h-1zM1448 970h1v1h-1zM1464 970h1v1h-1zM1480 970h1v1h-1zM1496 970h1v1h-1zM1512 970h1v1h-1zM1528 970h1v1h-1zM1543 970h1v1h-1zM1559 970h1v1h-1zM1575 970h1v1h-1zM1591 970h1v1h-1zM1607 970h1v1h-1zM1623 970h1v1h-1zM1639 970h1v1h-1zM1654 970h1v1h-1zM1670 970h1v1h-1zM37 985h1v1h-1zM53 985h1v1h-1zM69 985h1v1h-1zM85 985h1v1h-1zM100 985h1v1h-1zM116 985h1v1h-1zM132 985h1v1h-1zM148 985h1v1h-1zM164 985h1v1h-1zM180 985h1v1h-1zM196 985h1v1h-1zM211 985h1v1h-1zM227 985h1v1h-1zM243 985h1v1h-1zM259 985h1v1h-1zM275 985h1v1h-1zM291 985h1v1h-1zM307 985h1v1h-1zM322 985h1v1h-1zM338 985h1v1h-1zM354 985h1v1h-1zM370 985h1v1h-1zM386 985h1v1h-1zM402 985h1v1h-1zM418 985h1v1h-1zM433 985h1v1h-1zM449 985h1v1h-1zM465 985h1v1h-1zM481 985h1v1h-1zM497 985h1v1h-1zM513 985h1v1h-1zM529 985h1v1h-1zM544 985h1v1h-1zM560 985h1v1h-1zM576 985h1v1h-1zM592 985h1v1h-1zM608 985h1v1h-1zM624 985h1v1h-1zM640 985h1v1h-1zM655 985h1v1h-1zM671 985h1v1h-1zM687 985h1v1h-1zM703 985h1v1h-1zM719 985h1v1h-1zM735 985h1v1h-1zM751 985h1v1h-1zM766 985h1v1h-1zM782 985h1v1h-1zM798 985h1v1h-1zM814 985h1v1h-1zM830 985h1v1h-1zM846 985h1v1h-1zM862 985h1v1h-1zM877 985h1v1h-1zM893 985h1v1h-1zM909 985h1v1h-1zM925 985h1v1h-1zM941 985h1v1h-1zM957 985h1v1h-1zM973 985h1v1h-1zM988 985h1v1h-1zM1004 985h1v1h-1zM1020 985h1v1h-1zM1036 985h1v1h-1zM1052 985h1v1h-1zM1068 985h1v1h-1zM1084 985h1v1h-1zM1099 985h1v1h-1zM1115 985h1v1h-1zM1131 985h1v1h-1zM1147 985h1v1h-1zM1163 985h1v1h-1zM1179 985h1v1h-1zM1195 985h1v1h-1zM1210 985h1v1h-1zM1226 985h1v1h-1zM1242 985h1v1h-1zM1258 985h1v1h-1zM1274 985h1v1h-1zM1290 985h1v1h-1zM1306 985h1v1h-1zM1321 985h1v1h-1zM1337 985h1v1h-1zM1353 985h1v1h-1zM1369 985h1v1h-1zM1385 985h1v1h-1zM1401 985h1v1h-1zM1417 985h1v1h-1zM1432 985h1v1h-1zM1448 985h1v1h-1zM1464 985h1v1h-1zM1480 985h1v1h-1zM1496 985h1v1h-1zM1512 985h1v1h-1zM1528 985h1v1h-1zM1543 985h1v1h-1zM1559 985h1v1h-1zM1575 985h1v1h-1zM1591 985h1v1h-1zM1607 985h1v1h-1zM1623 985h1v1h-1zM1639 985h1v1h-1zM1654 985h1v1h-1zM1670 985h1v1h-1z"/></svg>
<svg class="a" style="left:36px;top:97px" width="1649" height="901" viewBox="36 97 1649 901"><polygon points="610.2,286.5 932.6,286.5 1002.6,367.2 1133.5,373.7 1133.0,734.5 1030.0,697.0 905.4,803.2 625.7,761.7 645.0,594.0 586.0,416.5" fill="none" stroke="#a80000" stroke-width="1"/>
<path d="M609.4 290.6L615.2 286.5M607.7 299.8L614.8 294.7M619.4 291.5L626.5 286.5M606.0 308.9L613.1 303.9M630.7 291.5L637.8 286.5M604.3 318.1L611.4 313.1M641.9 291.5L649.0 286.5M602.6 327.3L609.7 322.3M653.2 291.5L660.3 286.5M600.9 336.5L608.0 331.4M664.5 291.5L671.6 286.5M599.2 345.6L606.3 340.6M675.7 291.5L682.8 286.5M597.5 354.8L604.6 349.8M687.0 291.5L694.1 286.5M595.8 364.0L602.9 359.0M698.3 291.5L705.4 286.5M594.1 373.2L601.2 368.1M709.5 291.5L716.6 286.5M592.4 382.3L599.5 377.3M720.8 291.5L727.9 286.5M590.7 391.5L597.8 386.5M732.1 291.5L739.2 286.5M588.9 400.7L596.0 395.7M743.3 291.5L750.4 286.5M587.2 409.9L594.3 404.8M754.6 291.5L761.7 286.5M586.6 418.3L593.7 413.3M765.9 291.5L773.0 286.5M588.7 424.7L595.8 419.7M777.1 291.5L784.3 286.5M590.9 431.2L598.0 426.2M788.4 291.5L795.5 286.5M593.0 437.6L600.1 432.6M799.7 291.5L806.8 286.5M595.2 444.1L602.3 439.1M811.0 291.5L818.1 286.5M597.3 450.5L604.4 445.5M822.2 291.5L829.3 286.5M599.5 457.0L606.6 452.0M833.5 291.5L840.6 286.5M601.6 463.4L608.7 458.4M844.8 291.5L851.9 286.5M603.7 469.9L610.8 464.9M856.0 291.5L863.1 286.5M605.9 476.3L613.0 471.3M867.3 291.5L874.4 286.5M608.0 482.8L615.1 477.8M878.6 291.5L885.7 286.5M610.2 489.2L617.3 484.2M889.8 291.5L896.9 286.5M612.3 495.7L619.4 490.7M901.1 291.5L908.2 286.5M614.5 502.1L621.6 497.1M912.4 291.5L919.5 286.5M616.6 508.6L623.7 503.6M923.6 291.5L930.7 286.5M618.8 515.0L625.9 510.0M929.1 295.6L936.2 290.6M620.9 521.5L628.0 516.5M933.4 300.6L940.5 295.6M623.0 527.9L630.1 522.9M937.6 305.5L944.7 300.5M625.2 534.4L632.3 529.4M941.9 310.5L949.0 305.4M627.3 540.8L634.4 535.8M946.2 315.4L953.3 310.4M629.5 547.3L636.6 542.3M950.5 320.3L957.6 315.3M631.6 553.7L638.7 548.7M954.8 325.3L961.9 320.3M633.8 560.2L640.9 555.2M959.1 330.2L966.2 325.2M635.9 566.7L643.0 561.6M963.3 335.2L970.4 330.1M638.1 573.1L645.2 568.1M967.6 340.1L974.7 335.1M640.2 579.6L647.3 574.5M971.9 345.0L979.0 340.0M642.3 586.0L649.4 581.0M976.2 350.0L983.3 344.9M644.5 592.5L651.6 587.4M980.5 354.9L987.6 349.9M644.2 600.6L651.3 595.6M984.8 359.8L991.9 354.8M643.2 609.3L650.3 604.2M989.0 364.8L996.1 359.8M642.2 617.9L649.3 612.9M993.3 369.7L1000.4 364.7M641.2 626.6L648.4 621.6M1000.7 372.5L1007.8 367.5M640.2 635.3L647.4 630.3M1011.2 373.0L1018.3 368.0M639.3 644.0L646.4 638.9M1021.8 373.5L1028.9 368.5M638.3 652.6L645.4 647.6M1032.3 374.0L1039.4 369.0M637.3 661.3L644.4 656.3M1042.8 374.6L1049.9 369.5M636.3 670.0L643.4 665.0M1053.3 375.1L1060.4 370.1M635.3 678.6L642.4 673.6M1063.9 375.6L1071.0 370.6M634.3 687.3L641.4 682.3M1074.4 376.1L1081.5 371.1M633.3 696.0L640.4 691.0M1084.9 376.7L1092.0 371.6M632.3 704.7L639.4 699.6M1095.5 377.2L1102.6 372.2M631.3 713.3L638.4 708.3M1106.0 377.7L1113.1 372.7M630.3 722.0L637.4 717.0M1116.5 378.2L1123.6 373.2M629.3 730.7L636.4 725.7M1126.4 379.2L1133.5 374.2M628.3 739.4L635.4 734.3M1126.4 387.2L1133.5 382.2M627.3 748.0L634.4 743.0M1126.4 395.2L1133.5 390.1M626.3 756.7L633.4 751.7M1126.4 403.1L1133.5 398.1M629.6 762.3L636.8 757.3M1126.4 411.1L1133.5 406.1M639.0 763.7L646.1 758.6M1126.3 419.1L1133.4 414.1M648.3 765.0L655.4 760.0M1126.3 427.1L1133.4 422.0M657.6 766.4L664.7 761.4M1126.3 435.0L1133.4 430.0M666.9 767.8L674.0 762.8M1126.3 443.0L1133.4 438.0M676.2 769.2L683.3 764.2M1126.3 451.0L1133.4 446.0M685.5 770.6L692.6 765.6M1126.3 459.0L1133.4 453.9M694.8 772.0L702.0 766.9M1126.3 466.9L1133.4 461.9M704.2 773.3L711.3 768.3M1126.3 474.9L1133.4 469.9M713.5 774.7L720.6 769.7M1126.3 482.9L1133.4 477.9M722.8 776.1L729.9 771.1M1126.2 490.9L1133.3 485.8M732.1 777.5L739.2 772.5M1126.2 498.8L1133.3 493.8M741.4 778.9L748.5 773.8M1126.2 506.8L1133.3 501.8M750.7 780.3L757.8 775.2M1126.2 514.8L1133.3 509.8M760.0 781.6L767.1 776.6M1126.2 522.8L1133.3 517.7M769.4 783.0L776.5 778.0M1126.2 530.7L1133.3 525.7M778.7 784.4L785.8 779.4M1126.2 538.7L1133.3 533.7M788.0 785.8L795.1 780.8M1126.2 546.7L1133.3 541.7M797.3 787.2L804.4 782.1M1126.2 554.7L1133.3 549.6M806.6 788.5L813.7 783.5M1126.1 562.6L1133.2 557.6M815.9 789.9L823.0 784.9M1126.1 570.6L1133.2 565.6M825.2 791.3L832.3 786.3M1126.1 578.6L1133.2 573.6M834.6 792.7L841.7 787.7M1126.1 586.6L1133.2 581.5M843.9 794.1L851.0 789.0M1126.1 594.5L1133.2 589.5M853.2 795.5L860.3 790.4M1126.1 602.5L1133.2 597.5M862.5 796.8L869.6 791.8M1126.1 610.5L1133.2 605.5M871.8 798.2L878.9 793.2M1126.1 618.5L1133.2 613.4M881.1 799.6L888.2 794.6M1126.1 626.4L1133.2 621.4M890.4 801.0L897.5 796.0M986.3 733.2L993.4 728.2M1035.0 698.8L1042.1 693.8M1126.0 634.4L1133.1 629.4M899.8 802.4L906.9 797.3M931.5 779.9L938.6 774.9M1042.4 701.5L1049.5 696.5M1126.0 642.4L1133.1 637.4M1049.8 704.2L1056.9 699.2M1126.0 650.4L1133.1 645.3M1057.3 706.9L1064.4 701.9M1126.0 658.3L1133.1 653.3M1064.7 709.6L1071.8 704.6M1126.0 666.3L1133.1 661.3M1072.2 712.3L1079.3 707.3M1126.0 674.3L1133.1 669.3M1079.6 715.1L1086.7 710.0M1126.0 682.3L1133.1 677.2M1087.0 717.8L1094.1 712.7M1126.0 690.2L1133.1 685.2M1094.5 720.5L1101.6 715.4M1126.0 698.2L1133.1 693.2M1101.9 723.2L1109.0 718.2M1125.9 706.2L1133.0 701.2M1109.3 725.9L1116.4 720.9M1125.9 714.2L1133.0 709.1M1116.8 728.6L1123.9 723.6M1125.9 722.1L1133.0 717.1M1124.2 731.3L1133.0 725.1M1131.7 734.0L1133.0 733.1" stroke="#a80000" stroke-width="1"/>
<g fill="#009898" font-family="Liberation Sans">
<text transform="translate(820,193.5) rotate(-90)" text-anchor="end" font-size="30" textLength="109" lengthAdjust="spacingAndGlyphs">HEADER</text><text transform="translate(820,305) rotate(-90)" text-anchor="end" font-size="30" textLength="185" lengthAdjust="spacingAndGlyphs">FTDI-SMD-</text>
<text x="1007" y="417" font-size="29" textLength="36" lengthAdjust="spacingAndGlyphs">M1</text>
<text x="663" y="563" font-size="27" textLength="200" lengthAdjust="spacing">RES-US1206FAB</text>
<text x="952" y="558" font-size="28" textLength="165" lengthAdjust="spacing">AVRISPSMD</text>
<text x="980" y="609" font-size="24">1</text>
<text x="866" y="745" font-size="22" textLength="78" lengthAdjust="spacing">1kOhm</text>
<text x="752" y="744" font-size="22">M</text>
<text x="930" y="493" font-size="26" textLength="52" lengthAdjust="spacing">530</text>
</g>
<path d="M790 455.5H923M790 511.5H923" stroke="#009898" stroke-width="2"/>
<defs><mask id="fm" maskUnits="userSpaceOnUse" x="36" y="97" width="1649" height="901">
<polygon points="640.0,378.5 689.0,329.5 700.0,329.5 700.0,356.0 804.5,356.0 804.5,453.4 966.5,453.4 966.5,486.0 926.0,486.0 926.0,545.0 859.6,545.0 859.6,573.0 944.7,573.0 982.5,537.7 983.4,537.7 983.4,666.4 966.0,666.4 930.0,630.0 930.0,685.5 902.0,685.5 902.0,736.7 851.7,736.7 843.3,743.3 766.7,743.3 692.9,668.5 692.9,537.7 703.5,537.7 703.5,501.0 672.6,501.0 640.0,468.5" fill="#fff"/>
<polygon points="1005.2,536.4 1020.6,532.0 1022.0,509.0 1036.0,508.3 1054.4,495.0 1061.4,498.4 1061.4,502.0 1108.0,502.0 1108.0,529.0 1113.4,529.0 1113.4,580.0 1026.5,666.4 975.0,666.4 975.0,605.0 1005.2,605.0" fill="#fff"/>
<g fill="#000">
<rect x="691.7" y="308.7" width="33.8" height="54.3" rx="6"/>
<rect x="731.9" y="308.7" width="33.8" height="54.3" rx="6"/>
<rect x="772.2" y="308.7" width="33.8" height="54.3" rx="6"/>
<rect x="812.4" y="308.7" width="33.8" height="54.3" rx="6"/>
<rect x="852.7" y="308.7" width="33.8" height="54.3" rx="6"/>
<rect x="892.9" y="308.7" width="33.8" height="54.3" rx="6"/>
<rect x="783.7" y="415.3" width="23.6" height="51.6" rx="6"/>
<rect x="783.7" y="499.5" width="23.6" height="50.1" rx="6"/>
<rect x="803.8" y="415.3" width="23.6" height="51.6" rx="6"/>
<rect x="803.8" y="499.5" width="23.6" height="50.1" rx="6"/>
<rect x="823.9" y="415.3" width="23.6" height="51.6" rx="6"/>
<rect x="823.9" y="499.5" width="23.6" height="50.1" rx="6"/>
<rect x="844.0" y="415.3" width="23.6" height="51.6" rx="6"/>
<rect x="844.0" y="499.5" width="23.6" height="50.1" rx="6"/>
<rect x="864.1" y="415.3" width="23.6" height="51.6" rx="6"/>
<rect x="864.1" y="499.5" width="23.6" height="50.1" rx="6"/>
<rect x="884.2" y="415.3" width="23.6" height="51.6" rx="6"/>
<rect x="884.2" y="499.5" width="23.6" height="50.1" rx="6"/>
<rect x="904.3" y="415.3" width="23.6" height="51.6" rx="6"/>
<rect x="904.3" y="499.5" width="23.6" height="50.1" rx="6"/>
<rect x="966.5" y="419.7" width="54.8" height="34.3" rx="6"/>
<rect x="1053.7" y="419.7" width="54.8" height="34.3" rx="6"/>
<rect x="966.5" y="460.4" width="54.8" height="33.7" rx="6"/>
<rect x="1053.7" y="460.4" width="54.8" height="33.7" rx="6"/>
<rect x="966.5" y="500.5" width="54.8" height="34.4" rx="6"/>
<rect x="1053.7" y="500.5" width="54.8" height="34.4" rx="6"/>
<rect x="658.1" y="450.5" width="45.7" height="35.0" rx="6"/>
<rect x="658.1" y="500.4" width="45.7" height="36.5" rx="6"/>
<rect x="699.9" y="500.9" width="34.4" height="46.7" rx="6"/>
<rect x="751.7" y="500.9" width="34.0" height="46.7" rx="6"/>
<rect x="789.5" y="570.4" width="27.6" height="75.9" rx="6"/>
<rect x="811.2" y="570.4" width="26.8" height="75.9" rx="6"/>
<rect x="832.0" y="570.4" width="27.6" height="75.9" rx="6"/>
<rect x="735.4" y="683.7" width="37.6" height="47.6" rx="6"/>
<rect x="787.0" y="683.7" width="37.6" height="47.6" rx="6"/>
<rect x="840.4" y="683.7" width="37.6" height="47.6" rx="6"/>
<rect x="892.7" y="683.7" width="36.9" height="47.6" rx="6"/>
<rect x="924.3" y="606.0" width="33.7" height="45.3" rx="6"/>
<rect x="976.4" y="606.0" width="35.1" height="45.3" rx="6"/>
</g>
<polyline points="789.0,325.0 781.0,319.0 766.0,304.0 698.5,304.0 629.0,373.5 629.0,470.0 671.0,512.0 681.2,520.0 681.2,673.0 763.0,754.2 848.3,754.2 855.0,748.0 905.0,748.0 913.3,739.5 913.3,715.0" fill="none" stroke="#000" stroke-width="22.6" stroke-linecap="round" stroke-linejoin="round"/>
<polyline points="824.0,342.0 815.8,347.0 815.8,440.0" fill="none" stroke="#000" stroke-width="22.6" stroke-linecap="round" stroke-linejoin="round"/>
<polyline points="866.0,352.0 856.0,362.0 843.0,362.0 836.5,368.5 836.5,440.0" fill="none" stroke="#000" stroke-width="22.6" stroke-linecap="round" stroke-linejoin="round"/>
<polyline points="896.0,430.0 896.0,418.0 909.0,405.0 1026.2,405.0 1026.2,455.5 1013.6,467.0 1000.0,470.0" fill="none" stroke="#000" stroke-width="22.6" stroke-linecap="round" stroke-linejoin="round"/>
<polyline points="916.0,441.0 980.0,441.0" fill="none" stroke="#000" stroke-width="22.6" stroke-linecap="round" stroke-linejoin="round"/>
<polyline points="1090.0,437.0 1099.4,444.2 1124.0,469.5 1124.0,585.6 1031.0,677.4 969.0,677.4 945.6,654.0 941.0,645.0" fill="none" stroke="#000" stroke-width="22.6" stroke-linecap="round" stroke-linejoin="round"/>
<polyline points="941.0,630.0 937.5,645.0 937.5,697.0 923.0,711.0" fill="none" stroke="#000" stroke-width="22.6" stroke-linecap="round" stroke-linejoin="round"/>
<polyline points="1070.0,477.0 1054.4,476.0 1034.7,496.8 929.2,496.8 918.0,507.5 916.0,515.0" fill="none" stroke="#000" stroke-width="22.6" stroke-linecap="round" stroke-linejoin="round"/>
<polyline points="993.9,520.0 993.9,625.0" fill="none" stroke="#000" stroke-width="22.6" stroke-linecap="round" stroke-linejoin="round"/>
<polyline points="990.0,520.0 977.0,528.0 939.0,562.4 870.0,562.4 856.0,548.0 855.8,530.0" fill="none" stroke="#000" stroke-width="22.6" stroke-linecap="round" stroke-linejoin="round"/>
<polyline points="815.6,530.0 815.6,548.0 803.3,560.0 803.3,590.0" fill="none" stroke="#000" stroke-width="22.6" stroke-linecap="round" stroke-linejoin="round"/>
<polyline points="835.7,530.0 835.7,548.0 846.7,559.0 846.7,590.0" fill="none" stroke="#000" stroke-width="22.6" stroke-linecap="round" stroke-linejoin="round"/>
<polyline points="690.0,519.5 715.0,519.5" fill="none" stroke="#000" stroke-width="22.6" stroke-linecap="round" stroke-linejoin="round"/>
<polyline points="770.0,523.5 798.0,523.5" fill="none" stroke="#000" stroke-width="22.6" stroke-linecap="round" stroke-linejoin="round"/>
<polyline points="805.0,708.3 860.0,708.3" fill="none" stroke="#000" stroke-width="22.6" stroke-linecap="round" stroke-linejoin="round"/>
<g fill="#fff">
<rect x="689.0" y="330.0" width="10.0" height="8.0"/>
<rect x="705.0" y="355.0" width="7.5" height="9.0"/>
<rect x="676.6" y="449.0" width="8.2" height="9.0"/>
<rect x="676.6" y="478.0" width="8.2" height="9.0"/>
<rect x="657.0" y="462.9" width="8.0" height="8.1"/>
<rect x="697.0" y="462.9" width="8.0" height="8.1"/>
<rect x="1053.0" y="513.9" width="8.0" height="8.4"/>
<rect x="1076.9" y="527.0" width="8.4" height="9.0"/>
<rect x="820.0" y="548.0" width="10.0" height="29.0"/>
<rect x="820.0" y="639.0" width="10.0" height="11.0"/>
<rect x="784.0" y="437.0" width="7.0" height="10.0"/>
<rect x="735.0" y="706.0" width="7.0" height="6.0"/>
<polygon points="818,557 825.5,550 833,557 830,557 830,570 821,570 821,557"/>
</g></mask></defs>
<rect x="36" y="97" width="1649" height="901" fill="#850000" mask="url(#fm)"/>
<polyline points="789.0,325.0 781.0,319.0 766.0,304.0 698.5,304.0 629.0,373.5 629.0,470.0 671.0,512.0 681.2,520.0 681.2,673.0 763.0,754.2 848.3,754.2 855.0,748.0 905.0,748.0 913.3,739.5 913.3,715.0" fill="none" stroke="#850000" stroke-width="6.0" stroke-linecap="round" stroke-linejoin="round"/>
<polyline points="824.0,342.0 815.8,347.0 815.8,440.0" fill="none" stroke="#850000" stroke-width="6.0" stroke-linecap="round" stroke-linejoin="round"/>
<polyline points="866.0,352.0 856.0,362.0 843.0,362.0 836.5,368.5 836.5,440.0" fill="none" stroke="#850000" stroke-width="6.0" stroke-linecap="round" stroke-linejoin="round"/>
<polyline points="896.0,430.0 896.0,418.0 909.0,405.0 1026.2,405.0 1026.2,455.5 1013.6,467.0 1000.0,470.0" fill="none" stroke="#850000" stroke-width="6.0" stroke-linecap="round" stroke-linejoin="round"/>
<polyline points="916.0,441.0 980.0,441.0" fill="none" stroke="#850000" stroke-width="6.0" stroke-linecap="round" stroke-linejoin="round"/>
<polyline points="1090.0,437.0 1099.4,444.2 1124.0,469.5 1124.0,585.6 1031.0,677.4 969.0,677.4 945.6,654.0 941.0,645.0" fill="none" stroke="#850000" stroke-width="6.0" stroke-linecap="round" stroke-linejoin="round"/>
<polyline points="941.0,630.0 937.5,645.0 937.5,697.0 923.0,711.0" fill="none" stroke="#850000" stroke-width="6.0" stroke-linecap="round" stroke-linejoin="round"/>
<polyline points="1070.0,477.0 1054.4,476.0 1034.7,496.8 929.2,496.8 918.0,507.5 916.0,515.0" fill="none" stroke="#850000" stroke-width="6.0" stroke-linecap="round" stroke-linejoin="round"/>
<polyline points="993.9,520.0 993.9,625.0" fill="none" stroke="#850000" stroke-width="6.0" stroke-linecap="round" stroke-linejoin="round"/>
<polyline points="990.0,520.0 977.0,528.0 939.0,562.4 870.0,562.4 856.0,548.0 855.8,530.0" fill="none" stroke="#850000" stroke-width="6.0" stroke-linecap="round" stroke-linejoin="round"/>
<polyline points="815.6,530.0 815.6,548.0 803.3,560.0 803.3,590.0" fill="none" stroke="#850000" stroke-width="6.0" stroke-linecap="round" stroke-linejoin="round"/>
<polyline points="835.7,530.0 835.7,548.0 846.7,559.0 846.7,590.0" fill="none" stroke="#850000" stroke-width="6.0" stroke-linecap="round" stroke-linejoin="round"/>
<polyline points="690.0,519.5 715.0,519.5" fill="none" stroke="#850000" stroke-width="6.0" stroke-linecap="round" stroke-linejoin="round"/>
<polyline points="770.0,523.5 798.0,523.5" fill="none" stroke="#850000" stroke-width="6.0" stroke-linecap="round" stroke-linejoin="round"/>
<polyline points="805.0,708.3 860.0,708.3" fill="none" stroke="#850000" stroke-width="6.0" stroke-linecap="round" stroke-linejoin="round"/>
<rect x="698.0" y="315.0" width="21.2" height="41.7" fill="#850000"/>
<rect x="738.2" y="315.0" width="21.2" height="41.7" fill="#850000"/>
<rect x="778.5" y="315.0" width="21.2" height="41.7" fill="#850000"/>
<rect x="818.7" y="315.0" width="21.2" height="41.7" fill="#850000"/>
<rect x="859.0" y="315.0" width="21.2" height="41.7" fill="#850000"/>
<rect x="899.2" y="315.0" width="21.2" height="41.7" fill="#850000"/>
<rect x="790.0" y="421.6" width="11.0" height="39.0" fill="#850000"/>
<rect x="790.0" y="505.8" width="11.0" height="37.5" fill="#850000"/>
<rect x="810.1" y="421.6" width="11.0" height="39.0" fill="#850000"/>
<rect x="810.1" y="505.8" width="11.0" height="37.5" fill="#850000"/>
<rect x="830.2" y="421.6" width="11.0" height="39.0" fill="#850000"/>
<rect x="830.2" y="505.8" width="11.0" height="37.5" fill="#850000"/>
<rect x="850.3" y="421.6" width="11.0" height="39.0" fill="#850000"/>
<rect x="850.3" y="505.8" width="11.0" height="37.5" fill="#850000"/>
<rect x="870.4" y="421.6" width="11.0" height="39.0" fill="#850000"/>
<rect x="870.4" y="505.8" width="11.0" height="37.5" fill="#850000"/>
<rect x="890.5" y="421.6" width="11.0" height="39.0" fill="#850000"/>
<rect x="890.5" y="505.8" width="11.0" height="37.5" fill="#850000"/>
<rect x="910.6" y="421.6" width="11.0" height="39.0" fill="#850000"/>
<rect x="910.6" y="505.8" width="11.0" height="37.5" fill="#850000"/>
<rect x="972.8" y="426.0" width="42.2" height="21.7" fill="#850000"/>
<rect x="1060.0" y="426.0" width="42.2" height="21.7" fill="#850000"/>
<rect x="972.8" y="466.7" width="42.2" height="21.1" fill="#850000"/>
<rect x="1060.0" y="466.7" width="42.2" height="21.1" fill="#850000"/>
<rect x="972.8" y="506.8" width="42.2" height="21.8" fill="#850000"/>
<rect x="1060.0" y="506.8" width="42.2" height="21.8" fill="#850000"/>
<rect x="664.4" y="456.8" width="33.1" height="22.4" fill="#850000"/>
<rect x="664.4" y="506.7" width="33.1" height="23.9" fill="#850000"/>
<rect x="706.2" y="507.2" width="21.8" height="34.1" fill="#850000"/>
<rect x="758.0" y="507.2" width="21.4" height="34.1" fill="#850000"/>
<rect x="795.8" y="576.7" width="15.0" height="63.3" fill="#850000"/>
<rect x="817.5" y="576.7" width="14.2" height="63.3" fill="#850000"/>
<rect x="838.3" y="576.7" width="15.0" height="63.3" fill="#850000"/>
<rect x="741.7" y="690.0" width="25.0" height="35.0" fill="#850000"/>
<rect x="793.3" y="690.0" width="25.0" height="35.0" fill="#850000"/>
<rect x="846.7" y="690.0" width="25.0" height="35.0" fill="#850000"/>
<rect x="899.0" y="690.0" width="24.3" height="35.0" fill="#850000"/>
<rect x="930.6" y="612.3" width="21.1" height="32.7" fill="#850000"/>
<rect x="982.7" y="612.3" width="22.5" height="32.7" fill="#850000"/>
<rect x="695.5" y="312.5" width="26.2" height="46.7" rx="3" fill="none" stroke="#a80000" stroke-width="0.9"/>
<rect x="698.6" y="315.6" width="20.0" height="40.5" fill="none" stroke="#9c1ca6" stroke-width="1.1"/>
<rect x="735.7" y="312.5" width="26.2" height="46.7" rx="3" fill="none" stroke="#a80000" stroke-width="0.9"/>
<rect x="738.8" y="315.6" width="20.0" height="40.5" fill="none" stroke="#9c1ca6" stroke-width="1.1"/>
<rect x="776.0" y="312.5" width="26.2" height="46.7" rx="3" fill="none" stroke="#a80000" stroke-width="0.9"/>
<rect x="779.1" y="315.6" width="20.0" height="40.5" fill="none" stroke="#9c1ca6" stroke-width="1.1"/>
<rect x="816.2" y="312.5" width="26.2" height="46.7" rx="3" fill="none" stroke="#a80000" stroke-width="0.9"/>
<rect x="819.3" y="315.6" width="20.0" height="40.5" fill="none" stroke="#9c1ca6" stroke-width="1.1"/>
<rect x="856.5" y="312.5" width="26.2" height="46.7" rx="3" fill="none" stroke="#a80000" stroke-width="0.9"/>
<rect x="859.6" y="315.6" width="20.0" height="40.5" fill="none" stroke="#9c1ca6" stroke-width="1.1"/>
<rect x="896.7" y="312.5" width="26.2" height="46.7" rx="3" fill="none" stroke="#a80000" stroke-width="0.9"/>
<rect x="899.8" y="315.6" width="20.0" height="40.5" fill="none" stroke="#9c1ca6" stroke-width="1.1"/>
<rect x="787.5" y="419.1" width="16.0" height="44.0" rx="3" fill="none" stroke="#a80000" stroke-width="0.9"/>
<rect x="790.6" y="422.2" width="9.8" height="37.8" fill="none" stroke="#9c1ca6" stroke-width="1.1"/>
<rect x="787.5" y="503.3" width="16.0" height="42.5" rx="3" fill="none" stroke="#a80000" stroke-width="0.9"/>
<rect x="790.6" y="506.4" width="9.8" height="36.3" fill="none" stroke="#9c1ca6" stroke-width="1.1"/>
<rect x="807.6" y="419.1" width="16.0" height="44.0" rx="3" fill="none" stroke="#a80000" stroke-width="0.9"/>
<rect x="810.7" y="422.2" width="9.8" height="37.8" fill="none" stroke="#9c1ca6" stroke-width="1.1"/>
<rect x="807.6" y="503.3" width="16.0" height="42.5" rx="3" fill="none" stroke="#a80000" stroke-width="0.9"/>
<rect x="810.7" y="506.4" width="9.8" height="36.3" fill="none" stroke="#9c1ca6" stroke-width="1.1"/>
<rect x="827.7" y="419.1" width="16.0" height="44.0" rx="3" fill="none" stroke="#a80000" stroke-width="0.9"/>
<rect x="830.8" y="422.2" width="9.8" height="37.8" fill="none" stroke="#9c1ca6" stroke-width="1.1"/>
<rect x="827.7" y="503.3" width="16.0" height="42.5" rx="3" fill="none" stroke="#a80000" stroke-width="0.9"/>
<rect x="830.8" y="506.4" width="9.8" height="36.3" fill="none" stroke="#9c1ca6" stroke-width="1.1"/>
<rect x="847.8" y="419.1" width="16.0" height="44.0" rx="3" fill="none" stroke="#a80000" stroke-width="0.9"/>
<rect x="850.9" y="422.2" width="9.8" height="37.8" fill="none" stroke="#9c1ca6" stroke-width="1.1"/>
<rect x="847.8" y="503.3" width="16.0" height="42.5" rx="3" fill="none" stroke="#a80000" stroke-width="0.9"/>
<rect x="850.9" y="506.4" width="9.8" height="36.3" fill="none" stroke="#9c1ca6" stroke-width="1.1"/>
<rect x="867.9" y="419.1" width="16.0" height="44.0" rx="3" fill="none" stroke="#a80000" stroke-width="0.9"/>
<rect x="871.0" y="422.2" width="9.8" height="37.8" fill="none" stroke="#9c1ca6" stroke-width="1.1"/>
<rect x="867.9" y="503.3" width="16.0" height="42.5" rx="3" fill="none" stroke="#a80000" stroke-width="0.9"/>
<rect x="871.0" y="506.4" width="9.8" height="36.3" fill="none" stroke="#9c1ca6" stroke-width="1.1"/>
<rect x="888.0" y="419.1" width="16.0" height="44.0" rx="3" fill="none" stroke="#a80000" stroke-width="0.9"/>
<rect x="891.1" y="422.2" width="9.8" height="37.8" fill="none" stroke="#9c1ca6" stroke-width="1.1"/>
<rect x="888.0" y="503.3" width="16.0" height="42.5" rx="3" fill="none" stroke="#a80000" stroke-width="0.9"/>
<rect x="891.1" y="506.4" width="9.8" height="36.3" fill="none" stroke="#9c1ca6" stroke-width="1.1"/>
<rect x="908.1" y="419.1" width="16.0" height="44.0" rx="3" fill="none" stroke="#a80000" stroke-width="0.9"/>
<rect x="911.2" y="422.2" width="9.8" height="37.8" fill="none" stroke="#9c1ca6" stroke-width="1.1"/>
<rect x="908.1" y="503.3" width="16.0" height="42.5" rx="3" fill="none" stroke="#a80000" stroke-width="0.9"/>
<rect x="911.2" y="506.4" width="9.8" height="36.3" fill="none" stroke="#9c1ca6" stroke-width="1.1"/>
<rect x="970.3" y="423.5" width="47.2" height="26.7" rx="3" fill="none" stroke="#a80000" stroke-width="0.9"/>
<rect x="973.4" y="426.6" width="41.0" height="20.5" fill="none" stroke="#9c1ca6" stroke-width="1.1"/>
<rect x="1057.5" y="423.5" width="47.2" height="26.7" rx="3" fill="none" stroke="#a80000" stroke-width="0.9"/>
<rect x="1060.6" y="426.6" width="41.0" height="20.5" fill="none" stroke="#9c1ca6" stroke-width="1.1"/>
<rect x="970.3" y="464.2" width="47.2" height="26.1" rx="3" fill="none" stroke="#a80000" stroke-width="0.9"/>
<rect x="973.4" y="467.3" width="41.0" height="19.9" fill="none" stroke="#9c1ca6" stroke-width="1.1"/>
<rect x="1057.5" y="464.2" width="47.2" height="26.1" rx="3" fill="none" stroke="#a80000" stroke-width="0.9"/>
<rect x="1060.6" y="467.3" width="41.0" height="19.9" fill="none" stroke="#9c1ca6" stroke-width="1.1"/>
<rect x="970.3" y="504.3" width="47.2" height="26.8" rx="3" fill="none" stroke="#a80000" stroke-width="0.9"/>
<rect x="973.4" y="507.4" width="41.0" height="20.6" fill="none" stroke="#9c1ca6" stroke-width="1.1"/>
<rect x="1057.5" y="504.3" width="47.2" height="26.8" rx="3" fill="none" stroke="#a80000" stroke-width="0.9"/>
<rect x="1060.6" y="507.4" width="41.0" height="20.6" fill="none" stroke="#9c1ca6" stroke-width="1.1"/>
<rect x="661.9" y="454.3" width="38.1" height="27.4" rx="3" fill="none" stroke="#a80000" stroke-width="0.9"/>
<rect x="665.0" y="457.4" width="31.9" height="21.2" fill="none" stroke="#9c1ca6" stroke-width="1.1"/>
<rect x="661.9" y="504.2" width="38.1" height="28.9" rx="3" fill="none" stroke="#a80000" stroke-width="0.9"/>
<rect x="665.0" y="507.3" width="31.9" height="22.7" fill="none" stroke="#9c1ca6" stroke-width="1.1"/>
<rect x="703.7" y="504.7" width="26.8" height="39.1" rx="3" fill="none" stroke="#a80000" stroke-width="0.9"/>
<rect x="706.8" y="507.8" width="20.6" height="32.9" fill="none" stroke="#9c1ca6" stroke-width="1.1"/>
<rect x="755.5" y="504.7" width="26.4" height="39.1" rx="3" fill="none" stroke="#a80000" stroke-width="0.9"/>
<rect x="758.6" y="507.8" width="20.2" height="32.9" fill="none" stroke="#9c1ca6" stroke-width="1.1"/>
<rect x="793.3" y="574.2" width="20.0" height="68.3" rx="3" fill="none" stroke="#a80000" stroke-width="0.9"/>
<rect x="796.4" y="577.3" width="13.8" height="62.1" fill="none" stroke="#9c1ca6" stroke-width="1.1"/>
<rect x="815.0" y="574.2" width="19.2" height="68.3" rx="3" fill="none" stroke="#a80000" stroke-width="0.9"/>
<rect x="818.1" y="577.3" width="13.0" height="62.1" fill="none" stroke="#9c1ca6" stroke-width="1.1"/>
<rect x="835.8" y="574.2" width="20.0" height="68.3" rx="3" fill="none" stroke="#a80000" stroke-width="0.9"/>
<rect x="838.9" y="577.3" width="13.8" height="62.1" fill="none" stroke="#9c1ca6" stroke-width="1.1"/>
<rect x="739.2" y="687.5" width="30.0" height="40.0" rx="3" fill="none" stroke="#a80000" stroke-width="0.9"/>
<rect x="742.3" y="690.6" width="23.8" height="33.8" fill="none" stroke="#9c1ca6" stroke-width="1.1"/>
<rect x="790.8" y="687.5" width="30.0" height="40.0" rx="3" fill="none" stroke="#a80000" stroke-width="0.9"/>
<rect x="793.9" y="690.6" width="23.8" height="33.8" fill="none" stroke="#9c1ca6" stroke-width="1.1"/>
<rect x="844.2" y="687.5" width="30.0" height="40.0" rx="3" fill="none" stroke="#a80000" stroke-width="0.9"/>
<rect x="847.3" y="690.6" width="23.8" height="33.8" fill="none" stroke="#9c1ca6" stroke-width="1.1"/>
<rect x="896.5" y="687.5" width="29.3" height="40.0" rx="3" fill="none" stroke="#a80000" stroke-width="0.9"/>
<rect x="899.6" y="690.6" width="23.1" height="33.8" fill="none" stroke="#9c1ca6" stroke-width="1.1"/>
<rect x="928.1" y="609.8" width="26.1" height="37.7" rx="3" fill="none" stroke="#a80000" stroke-width="0.9"/>
<rect x="931.2" y="612.9" width="19.9" height="31.5" fill="none" stroke="#9c1ca6" stroke-width="1.1"/>
<rect x="980.2" y="609.8" width="27.5" height="37.7" rx="3" fill="none" stroke="#a80000" stroke-width="0.9"/>
<rect x="983.3" y="612.9" width="21.3" height="31.5" fill="none" stroke="#9c1ca6" stroke-width="1.1"/>
<path d="M665.2 479 V506 M696.8 479 V506" stroke="#9c1ca6" stroke-width="1.1"/>
<path d="M661 471 V479 M650 478 Q660 486 655 496" fill="none" stroke="#009898" stroke-width="1.8"/>
<g fill="#e6e0e0" font-family="Liberation Mono">
<text transform="translate(707.6,335.9) rotate(-90)" font-size="9" text-anchor="middle">1</text>
<text transform="translate(717.1,335.9) rotate(-90)" font-size="10" text-anchor="middle">GND</text>
<text transform="translate(747.8,335.9) rotate(-90)" font-size="9" text-anchor="middle">2</text>
<text transform="translate(755.8,335.9) rotate(-90)" font-size="4" text-anchor="middle">Net-(J1-Pad)</text>
<text transform="translate(788.1,335.9) rotate(-90)" font-size="9" text-anchor="middle">3</text>
<text transform="translate(797.6,335.9) rotate(-90)" font-size="10" text-anchor="middle">VCC</text>
<text transform="translate(828.3,335.9) rotate(-90)" font-size="9" text-anchor="middle">4</text>
<text transform="translate(837.8,335.9) rotate(-90)" font-size="10" text-anchor="middle">TX</text>
<text transform="translate(868.6,335.9) rotate(-90)" font-size="9" text-anchor="middle">5</text>
<text transform="translate(878.1,335.9) rotate(-90)" font-size="10" text-anchor="middle">RX</text>
<text transform="translate(908.8,335.9) rotate(-90)" font-size="9" text-anchor="middle">6</text>
<text transform="translate(916.8,335.9) rotate(-90)" font-size="4" text-anchor="middle">Net-(J1-Pad)</text>
<text transform="translate(794.0,441.1) rotate(-90)" font-size="5" text-anchor="middle">1</text>
<text transform="translate(799.0,441.1) rotate(-90)" font-size="5.5" text-anchor="middle">XTAL</text>
<text transform="translate(794.0,524.5) rotate(-90)" font-size="5" text-anchor="middle">1</text>
<text transform="translate(799.0,524.5) rotate(-90)" font-size="5.5" text-anchor="middle">XTAL</text>
<text transform="translate(814.1,441.1) rotate(-90)" font-size="5" text-anchor="middle">1</text>
<text transform="translate(819.1,441.1) rotate(-90)" font-size="5.5" text-anchor="middle">XTAL</text>
<text transform="translate(814.1,524.5) rotate(-90)" font-size="5" text-anchor="middle">1</text>
<text transform="translate(819.1,524.5) rotate(-90)" font-size="5.5" text-anchor="middle">XTAL</text>
<text transform="translate(834.2,441.1) rotate(-90)" font-size="5" text-anchor="middle">1</text>
<text transform="translate(839.2,441.1) rotate(-90)" font-size="5.5" text-anchor="middle">XTAL</text>
<text transform="translate(834.2,524.5) rotate(-90)" font-size="5" text-anchor="middle">1</text>
<text transform="translate(839.2,524.5) rotate(-90)" font-size="5.5" text-anchor="middle">XTAL</text>
<text transform="translate(854.3,441.1) rotate(-90)" font-size="5" text-anchor="middle">1</text>
<text transform="translate(859.3,441.1) rotate(-90)" font-size="5.5" text-anchor="middle">XTAL</text>
<text transform="translate(854.3,524.5) rotate(-90)" font-size="5" text-anchor="middle">1</text>
<text transform="translate(859.3,524.5) rotate(-90)" font-size="5.5" text-anchor="middle">XTAL</text>
<text transform="translate(874.4,441.1) rotate(-90)" font-size="5" text-anchor="middle">1</text>
<text transform="translate(879.4,441.1) rotate(-90)" font-size="5.5" text-anchor="middle">XTAL</text>
<text transform="translate(874.4,524.5) rotate(-90)" font-size="5" text-anchor="middle">1</text>
<text transform="translate(879.4,524.5) rotate(-90)" font-size="5.5" text-anchor="middle">XTAL</text>
<text transform="translate(894.5,441.1) rotate(-90)" font-size="5" text-anchor="middle">1</text>
<text transform="translate(899.5,441.1) rotate(-90)" font-size="5.5" text-anchor="middle">XTAL</text>
<text transform="translate(894.5,524.5) rotate(-90)" font-size="5" text-anchor="middle">1</text>
<text transform="translate(899.5,524.5) rotate(-90)" font-size="5.5" text-anchor="middle">XTAL</text>
<text transform="translate(914.6,441.1) rotate(-90)" font-size="5" text-anchor="middle">1</text>
<text transform="translate(919.6,441.1) rotate(-90)" font-size="5.5" text-anchor="middle">XTAL</text>
<text transform="translate(914.6,524.5) rotate(-90)" font-size="5" text-anchor="middle">1</text>
<text transform="translate(919.6,524.5) rotate(-90)" font-size="5.5" text-anchor="middle">XTAL</text>
<text x="993.9" y="435.4" font-size="9" text-anchor="middle">1</text>
<text x="993.9" y="445.4" font-size="10" text-anchor="middle">MISO</text>
<text x="1081.1" y="435.4" font-size="9" text-anchor="middle">2</text>
<text x="1081.1" y="445.4" font-size="10" text-anchor="middle">VCC</text>
<text x="993.9" y="475.8" font-size="9" text-anchor="middle">3</text>
<text x="993.9" y="485.8" font-size="10" text-anchor="middle">SCK</text>
<text x="1081.1" y="475.8" font-size="9" text-anchor="middle">4</text>
<text x="1081.1" y="485.8" font-size="10" text-anchor="middle">MOSI</text>
<text x="993.9" y="516.2" font-size="9" text-anchor="middle">5</text>
<text x="993.9" y="526.2" font-size="10" text-anchor="middle">RST</text>
<text x="1081.1" y="516.2" font-size="9" text-anchor="middle">6</text>
<text x="1081.1" y="526.2" font-size="10" text-anchor="middle">GND</text>
<text x="681.0" y="466.5" font-size="9" text-anchor="middle">2</text>
<text x="681.0" y="476.5" font-size="10" text-anchor="middle">GND</text>
<text x="681.0" y="517.1" font-size="9" text-anchor="middle">1</text>
<text x="681.0" y="527.1" font-size="10" text-anchor="middle">VCC</text>
<text transform="translate(716.1,524.2) rotate(-90)" font-size="9" text-anchor="middle">1</text>
<text transform="translate(725.6,524.2) rotate(-90)" font-size="10" text-anchor="middle">VCC</text>
<text transform="translate(767.7,524.2) rotate(-90)" font-size="9" text-anchor="middle">2</text>
<text transform="translate(777.2,524.2) rotate(-90)" font-size="10" text-anchor="middle">VCC</text>
<text transform="translate(801.8,608.4) rotate(-90)" font-size="5" text-anchor="middle">1</text>
<text transform="translate(806.8,608.4) rotate(-90)" font-size="5.5" text-anchor="middle">XTAL</text>
<text transform="translate(823.1,608.4) rotate(-90)" font-size="5" text-anchor="middle">1</text>
<text transform="translate(828.1,608.4) rotate(-90)" font-size="5.5" text-anchor="middle">XTAL</text>
<text transform="translate(844.3,608.4) rotate(-90)" font-size="5" text-anchor="middle">1</text>
<text transform="translate(849.3,608.4) rotate(-90)" font-size="5.5" text-anchor="middle">XTAL</text>
<text transform="translate(753.2,707.5) rotate(-90)" font-size="9" text-anchor="middle">2</text>
<text transform="translate(762.7,707.5) rotate(-90)" font-size="10" text-anchor="middle">GND</text>
<text transform="translate(804.8,707.5) rotate(-90)" font-size="9" text-anchor="middle">1</text>
<text transform="translate(812.8,707.5) rotate(-90)" font-size="4" text-anchor="middle">Net-(J1-Pad)</text>
<text transform="translate(858.2,707.5) rotate(-90)" font-size="9" text-anchor="middle">1</text>
<text transform="translate(866.2,707.5) rotate(-90)" font-size="4" text-anchor="middle">Net-(J1-Pad)</text>
<text transform="translate(910.1,707.5) rotate(-90)" font-size="9" text-anchor="middle">2</text>
<text transform="translate(919.6,707.5) rotate(-90)" font-size="10" text-anchor="middle">VCC</text>
<text transform="translate(940.2,628.6) rotate(-90)" font-size="9" text-anchor="middle">1</text>
<text transform="translate(949.7,628.6) rotate(-90)" font-size="10" text-anchor="middle">VCC</text>
<text transform="translate(993.0,628.6) rotate(-90)" font-size="9" text-anchor="middle">2</text>
<text transform="translate(1002.5,628.6) rotate(-90)" font-size="10" text-anchor="middle">RST</text>
</g>
<path d="M1030.2 478.0h9M1034.7 473.5v9M851.8 482.5h9M856.3 478.0v9M676.7 493.4h9M681.2 488.9v9M819.7 608.3h9M824.2 603.8v9M775.5 708.3h9M780.0 703.8v9M881.3 708.3h9M885.8 703.8v9M963.4 629.2h9M967.9 624.7v9M804.7 336.7h9M809.2 332.2v9" stroke="#1c1ca8" stroke-width="1"/>
<path d="M743.5 520.4V529.6" stroke="#1c1ca8" stroke-width="1"/>
<polygon points="605.0,282.0 937.0,282.0 1004.4,361.0 1141.3,364.0 1141.3,747.4 1035.0,702.0 913.2,812.2 616.0,773.3 638.7,593.2 580.0,416.5" fill="none" stroke="#c8c832" stroke-width="2.2"/>
<path d="M717.4 524.5H768.8" stroke="#fff" stroke-width="1.3"/></svg>
<div class="a" style="left:36px;top:427px;width:1649px;height:1px;background:#fff"></div>
<div class="a" style="left:1655px;top:97px;width:1px;height:901px;background:#fff"></div>
<div class="a" style="left:1685px;top:97px;width:14px;height:901px;background:#f9f9f9"></div>
<div class="a" style="left:1689px;top:575px;width:8px;height:18px;background:#c2c2c2;border-radius:4px"></div>
<div class="a" style="left:36px;top:998px;width:1650px;height:14px;background:#f9f9f9"></div>
<div class="a" style="left:981px;top:1002px;width:63px;height:8px;background:#c2c2c2;border-radius:4px"></div>
<svg class="a" style="left:1690px;top:97px" width="53" height="915" viewBox="1690 97 53 915">
 <g stroke="#cdcdcd" stroke-width="1"><path d="M1706 139.5 H1730 M1706 216.5 H1730 M1706 395.5 H1730 M1706 574.5 H1730 M1706 651.5 H1730 M1706 694.5 H1730"/></g>
 <!-- arrow -->
 <path d="M1711.5 108.5 V125 L1715 121.5 L1718.5 127.5 L1721 126 L1717.5 120.5 L1723.5 120 Z" fill="#f7f7f7" stroke="#555" stroke-width="1"/>
 <!-- crosshair -->
 <path d="M1723 149 V173 M1706 166.5 H1731" stroke="#cfcfcf" stroke-width="2"/>
 <path d="M1706 157 H1731" stroke="#6cb86c" stroke-width="2"/>
 <path d="M1714.5 148.5 V173" stroke="#d52020" stroke-width="2.4"/>
 <circle cx="1714.5" cy="157" r="3.6" fill="#b49a4a" stroke="#8a7a3a" stroke-width="0.6"/>
 <!-- ratsnest gray -->
 <rect x="1705.5" y="182" width="25" height="25.5" rx="2.5" fill="#d6d6d6"/>
 <path d="M1716 191 L1708 205 M1716 191 L1729 187 M1716 191 L1728 199" stroke="#fff" stroke-width="1.4"/>
 <circle cx="1715" cy="191" r="2.5" fill="#d6d6d6" stroke="#555" stroke-width="0.8"/>
 <!-- module -->
 <path d="M1707 230 H1729.5 V245 H1707 V240.5 Q1709 238.5 1707 236 Z" fill="none" stroke="#555" stroke-width="0.9"/>
 <g fill="#22c43a" stroke="#3a6a3a" stroke-width="0.5"><rect x="1708" y="226.5" width="4" height="5"/><rect x="1716" y="226.5" width="4" height="5"/><rect x="1724" y="226.5" width="4" height="5"/><rect x="1708" y="243" width="4" height="5.5"/><rect x="1716" y="243" width="4" height="5.5"/><rect x="1724" y="243" width="4" height="5.5"/></g>
 <!-- track -->
 <path d="M1708.5 262 L1713 272.5 H1722.5 L1728 283" fill="none" stroke="#1a9a2a" stroke-width="2.2" stroke-linecap="round"/>
 <!-- via -->
 <circle cx="1718" cy="306" r="8.5" fill="#cfcfcf" stroke="#a8a8a8" stroke-width="1"/>
 <circle cx="1718" cy="306" r="5.5" fill="#d7cc34" stroke="#8a8a50" stroke-width="0.6"/>
 <!-- zone highlighted -->
 <rect x="1702.5" y="324.5" width="31" height="31" fill="#eaf4fe" stroke="#a9cff6"/>
 <rect x="1705.5" y="327.5" width="25" height="25" fill="#5aac62" stroke="#2a8a32"/>
 <circle cx="1714" cy="337" r="3.6" fill="none" stroke="#9a9a9a" stroke-width="2.2"/>
 <path d="M1717 339.5 H1721 L1729 351" fill="none" stroke="#9a9a9a" stroke-width="2.2"/>
 <!-- keepout -->
 <rect x="1705.5" y="361.5" width="25" height="25" fill="#e9f2e9" stroke="#1c8a26" stroke-width="1"/>
 <path d="M1706 366 l4 -4 M1706 371 l9 -9 M1706 376 l3 -3 M1706 381 l3 -3 M1706 386 l3 -3 M1710 386 l3 -3 M1715 386 l3 -3 M1720 386 l3 -3 M1725 386 l5 -5 M1720 362 l-2 2 M1725 362 l-3 3 M1730 362 l-3 3 M1730 367 l-3 3 M1730 372 l-3 3 M1730 377 l-3 3" stroke="#1c8a26" stroke-width="1.1"/>
 <rect x="1709" y="365" width="18" height="18" fill="#e9f2e9"/>
 <circle cx="1718" cy="374" r="6" fill="none" stroke="#d84444" stroke-width="2.2"/>
 <path d="M1714 378 L1722 370" stroke="#d84444" stroke-width="2.2"/>
 <!-- red box -->
 <rect x="1699" y="399" width="35.5" height="34.5" fill="#eaf4fe" stroke="#ee1c16" stroke-width="4"/>
 <path d="M1709 408 L1722 409.5 L1727 422 L1709 426" fill="none" stroke="#1c3fc4" stroke-width="1.5"/>
 <g fill="#44b05a"><circle cx="1709" cy="408" r="2.4"/><circle cx="1722" cy="409.5" r="2.4"/><circle cx="1727" cy="422" r="2.4"/><circle cx="1709" cy="426" r="2.4"/></g>
 <!-- circle -->
 <circle cx="1717.5" cy="451" r="11" fill="none" stroke="#1c3fc4" stroke-width="1.6"/>
 <circle cx="1717.5" cy="451" r="2.4" fill="#44b05a"/><circle cx="1725" cy="443" r="2.4" fill="#44b05a"/>
 <!-- arc -->
 <path d="M1709 475.6 Q1724 478 1727 493.7" fill="none" stroke="#1c3fc4" stroke-width="1.6"/>
 <g fill="#44b05a"><circle cx="1709" cy="475.6" r="2.4"/><circle cx="1709" cy="493.7" r="2.4"/><circle cx="1727" cy="493.7" r="2.4"/></g>
 <!-- polygon -->
 <path d="M1709 509.5 L1723 510.5 L1727.5 525 L1709.5 528.5 Z" fill="#8b8cf2" stroke="#1c3fc4" stroke-width="1.6"/>
 <!-- T -->
 <text x="1718" y="563.5" text-anchor="middle" font-size="25" fill="#333" font-family="Liberation Serif">T</text>
 <rect x="1735.5" y="551.5" width="7" height="7" fill="#ededed" stroke="#e0e0e0" stroke-width="0.5"/><circle cx="1739" cy="555" r="2" fill="#cfcfcf"/>
 <!-- dimension -->
 <text x="1718" y="596.5" text-anchor="middle" font-size="11" fill="#333" font-family="Liberation Sans">N</text>
 <path d="M1706.5 594 V607.5 M1729.5 594 V607.5" stroke="#1c3fc4" stroke-width="1.6"/>
 <path d="M1708 599 H1728" stroke="#222" stroke-width="0.9"/><path d="M1707.5 599 l3.5 -2 v4z M1728.5 599 l-3.5 -2 v4z" fill="#222"/>
 <!-- target -->
 <circle cx="1718" cy="629.5" r="6.5" fill="#e6da3a" stroke="#222" stroke-width="1"/>
 <path d="M1718 623 V629.5 H1711.5 A6.5 6.5 0 0 1 1718 623Z M1718 636 V629.5 H1724.5 A6.5 6.5 0 0 1 1718 636Z" fill="#222"/>
 <path d="M1718 618 V641 M1706.5 629.5 H1729.5" stroke="#222" stroke-width="1"/>
 <!-- trash -->
 <path d="M1709 667 Q1712 661 1717 663 Q1722 660 1727 666 Z" fill="#fafafa" stroke="#ddd" stroke-width="0.6"/>
 <path d="M1708 667.5 H1728 L1725.5 684 H1710.5 Z" fill="#fafafa" stroke="#555" stroke-width="1"/>
 <path d="M1709 671 H1727 M1709.5 675 H1726.5 M1710 679 H1726 M1713 668 L1714 684 M1718 668 V684 M1723 668 L1722 684" stroke="#666" stroke-width="0.7"/>
 <!-- origin -->
 <path d="M1707 704 V728.5 H1730" fill="none" stroke="#333" stroke-width="0.9"/><path d="M1707 704 l-1.8 4 h3.6z M1730 728.5 l-4 -1.8 v3.6z" fill="#333"/>
 <circle cx="1719.5" cy="715.5" r="5.5" fill="#e6da3a" stroke="#222" stroke-width="0.9"/>
 <path d="M1719.5 710 V715.5 H1714 A5.5 5.5 0 0 1 1719.5 710Z M1719.5 721 V715.5 H1725 A5.5 5.5 0 0 1 1719.5 721Z" fill="#222"/>
 <path d="M1719.5 708 V723 M1712 715.5 H1727" stroke="#222" stroke-width="0.9"/>
 <!-- grid origin -->
 <g fill="#333"><circle cx="1708" cy="740.5" r="1"/><circle cx="1714" cy="740.5" r="1"/><circle cx="1720" cy="740.5" r="1"/><circle cx="1726" cy="740.5" r="1"/><circle cx="1708" cy="746.5" r="1"/><circle cx="1720" cy="746.5" r="1"/><circle cx="1726" cy="746.5" r="1"/><circle cx="1720" cy="752.5" r="1"/><circle cx="1726" cy="752.5" r="1"/><circle cx="1708" cy="758.5" r="1"/><circle cx="1714" cy="758.5" r="1"/><circle cx="1720" cy="758.5" r="1"/><circle cx="1726" cy="758.5" r="1"/></g>
 <path d="M1714 742 V761 M1707 752.5 H1727" stroke="#333" stroke-width="0.7" stroke-dasharray="1.5 1.5"/>
 <path d="M1714 748.5 V756.5 M1710 752.5 H1718" stroke="#e02020" stroke-width="1.6"/>
 <!-- caliper -->
 <path d="M1707 786 L1715 771 L1719 772 L1714 781 L1730 791 L1727 797 L1711 787 Z M1716 784 L1712 790" fill="none" stroke="#333" stroke-width="0.9"/>
 <path d="M1718 783 l1 -2 M1721 785 l1 -2 M1724 787 l1 -2 M1727 789 l1 -2" stroke="#333" stroke-width="0.7"/>
</svg>
<!-- layers manager -->
<div class="a" style="left:1743px;top:97px;width:177px;height:17px;background:linear-gradient(#e2e2e2,#c9c9c9)"></div>
<div class="a" style="left:1746px;top:98px;font-size:11px;letter-spacing:0.28px;color:#111;white-space:nowrap;line-height:14px">Layers Manager</div>
<div class="a" style="left:1748px;top:119px;width:167px;height:889px;border:1px solid #b3b3b3;background:#ececec"></div>
<div class="a" style="left:1749px;top:120px;width:165px;height:21px;background:linear-gradient(#d8d8d8,#efefef)"></div>
<div class="a" style="left:1749px;top:141px;width:165px;height:1px;background:#c6c6c6"></div>
<div class="a" style="left:1749px;top:144px;width:165px;height:1px;background:#b8b8b8"></div>
<div class="a" style="left:1755px;top:124px;width:50px;height:18px;background:linear-gradient(#fdfdfd,#f1f1f1);border:1px solid #c8c8c8;border-bottom:none;border-radius:4px 4px 0 0"></div>
<div class="a" style="left:1805px;top:124px;width:44px;height:18px;background:linear-gradient(#efefef,#e0e0e0);border:1px solid #c8c8c8;border-bottom:none;border-radius:4px 4px 0 0"></div>
<div class="a" style="left:1762px;top:127px;font-size:10.5px;letter-spacing:0.3px;color:#111;line-height:12px">Layers</div>
<div class="a" style="left:1813px;top:127px;font-size:10.5px;letter-spacing:0.3px;color:#111;line-height:12px">Items</div>
<div class="a" style="left:1743px;top:148px">
<div class="lay" style="top:0px"><div class="sw" style="background:#9b1010"></div><div class="cb"><svg width="11" height="11" viewBox="0 0 11 11" style="position:absolute;left:0;top:0"><path d="M2.5 5.5 L4.6 8.3 L8.8 1.8" fill="none" stroke="#2a2a2a" stroke-width="1.3"/></svg></div><div class="nm">F.Cu</div></div>
<div class="lay" style="top:18px"><div class="sw" style="background:#1c8c1c"></div><div class="cb"><svg width="11" height="11" viewBox="0 0 11 11" style="position:absolute;left:0;top:0"><path d="M2.5 5.5 L4.6 8.3 L8.8 1.8" fill="none" stroke="#2a2a2a" stroke-width="1.3"/></svg></div><div class="nm">B.Cu</div></div>
<div class="lay" style="top:36px"><div class="sw" style="background:#922a9c"></div><div class="cb"><svg width="11" height="11" viewBox="0 0 11 11" style="position:absolute;left:0;top:0"><path d="M2.5 5.5 L4.6 8.3 L8.8 1.8" fill="none" stroke="#2a2a2a" stroke-width="1.3"/></svg></div><div class="nm">F.Adhes</div></div>
<div class="lay" style="top:54px"><div class="sw" style="background:#0f2a9c"></div><div class="cb"><svg width="11" height="11" viewBox="0 0 11 11" style="position:absolute;left:0;top:0"><path d="M2.5 5.5 L4.6 8.3 L8.8 1.8" fill="none" stroke="#2a2a2a" stroke-width="1.3"/></svg></div><div class="nm">B.Adhes</div></div>
<div class="lay" style="top:72px"><div class="sw" style="background:#9b1010"></div><div class="cb"><svg width="11" height="11" viewBox="0 0 11 11" style="position:absolute;left:0;top:0"><path d="M2.5 5.5 L4.6 8.3 L8.8 1.8" fill="none" stroke="#2a2a2a" stroke-width="1.3"/></svg></div><div class="nm">F.Paste</div></div>
<div class="lay" style="top:90px"><div class="sw" style="background:#22cbcf"></div><div class="cb"><svg width="11" height="11" viewBox="0 0 11 11" style="position:absolute;left:0;top:0"><path d="M2.5 5.5 L4.6 8.3 L8.8 1.8" fill="none" stroke="#2a2a2a" stroke-width="1.3"/></svg></div><div class="nm">B.Paste</div></div>
<div class="lay" style="top:108px"><div class="sw" style="background:#129a9a"></div><div class="cb"><svg width="11" height="11" viewBox="0 0 11 11" style="position:absolute;left:0;top:0"><path d="M2.5 5.5 L4.6 8.3 L8.8 1.8" fill="none" stroke="#2a2a2a" stroke-width="1.3"/></svg></div><div class="nm">F.SilkS</div></div>
<div class="lay" style="top:126px"><div class="sw" style="background:#922a9c"></div><div class="cb"><svg width="11" height="11" viewBox="0 0 11 11" style="position:absolute;left:0;top:0"><path d="M2.5 5.5 L4.6 8.3 L8.8 1.8" fill="none" stroke="#2a2a2a" stroke-width="1.3"/></svg></div><div class="nm">B.SilkS</div></div>
<div class="lay" style="top:144px"><div class="sw" style="background:#922a9c"></div><div class="cb"><svg width="11" height="11" viewBox="0 0 11 11" style="position:absolute;left:0;top:0"><path d="M2.5 5.5 L4.6 8.3 L8.8 1.8" fill="none" stroke="#2a2a2a" stroke-width="1.3"/></svg></div><div class="nm">F.Mask</div></div>
<div class="lay" style="top:162px"><div class="sw" style="background:#9a9428"></div><div class="cb"><svg width="11" height="11" viewBox="0 0 11 11" style="position:absolute;left:0;top:0"><path d="M2.5 5.5 L4.6 8.3 L8.8 1.8" fill="none" stroke="#2a2a2a" stroke-width="1.3"/></svg></div><div class="nm">B.Mask</div></div>
<div class="lay" style="top:180px"><div class="sw" style="background:#d3d3d3"></div><div class="cb"><svg width="11" height="11" viewBox="0 0 11 11" style="position:absolute;left:0;top:0"><path d="M2.5 5.5 L4.6 8.3 L8.8 1.8" fill="none" stroke="#2a2a2a" stroke-width="1.3"/></svg></div><div class="nm">Dwgs.User</div></div>
<div class="lay" style="top:198px"><div class="sw" style="background:#0f2a9c"></div><div class="cb"><svg width="11" height="11" viewBox="0 0 11 11" style="position:absolute;left:0;top:0"><path d="M2.5 5.5 L4.6 8.3 L8.8 1.8" fill="none" stroke="#2a2a2a" stroke-width="1.3"/></svg></div><div class="nm">Cmts.User</div></div>
<div class="lay" style="top:216px"><div class="sw" style="background:#1c8c1c"></div><div class="cb"><svg width="11" height="11" viewBox="0 0 11 11" style="position:absolute;left:0;top:0"><path d="M2.5 5.5 L4.6 8.3 L8.8 1.8" fill="none" stroke="#2a2a2a" stroke-width="1.3"/></svg></div><div class="nm">Eco1.User</div></div>
<div class="lay" style="top:234px"><div class="sw" style="background:#d6ce40"></div><div class="cb"><svg width="11" height="11" viewBox="0 0 11 11" style="position:absolute;left:0;top:0"><path d="M2.5 5.5 L4.6 8.3 L8.8 1.8" fill="none" stroke="#2a2a2a" stroke-width="1.3"/></svg></div><div class="nm">Eco2.User</div></div>
<div class="lay" style="top:252px"><div class="sw" style="background:#d6ce40"></div><div class="cb"><svg width="11" height="11" viewBox="0 0 11 11" style="position:absolute;left:0;top:0"><path d="M2.5 5.5 L4.6 8.3 L8.8 1.8" fill="none" stroke="#2a2a2a" stroke-width="1.3"/></svg></div><div class="nm">Edge.Cuts</div></div>
<div class="lay" style="top:270px"><div class="sw" style="background:#d444d4"></div><div class="cb"><svg width="11" height="11" viewBox="0 0 11 11" style="position:absolute;left:0;top:0"><path d="M2.5 5.5 L4.6 8.3 L8.8 1.8" fill="none" stroke="#2a2a2a" stroke-width="1.3"/></svg></div><div class="nm">Margin</div></div>
<div class="lay" style="top:288px"><div class="sw" style="background:#d3d3d3"></div><div class="cb"><svg width="11" height="11" viewBox="0 0 11 11" style="position:absolute;left:0;top:0"><path d="M2.5 5.5 L4.6 8.3 L8.8 1.8" fill="none" stroke="#2a2a2a" stroke-width="1.3"/></svg></div><div class="nm">F.CrtYd</div></div>
<div class="lay" style="top:306px"><div class="sw" style="background:#999"></div><div class="cb"><svg width="11" height="11" viewBox="0 0 11 11" style="position:absolute;left:0;top:0"><path d="M2.5 5.5 L4.6 8.3 L8.8 1.8" fill="none" stroke="#2a2a2a" stroke-width="1.3"/></svg></div><div class="nm">B.CrtYd</div></div>
<div class="lay" style="top:324px"><div class="sw" style="background:#999"></div><div class="cb"><svg width="11" height="11" viewBox="0 0 11 11" style="position:absolute;left:0;top:0"><path d="M2.5 5.5 L4.6 8.3 L8.8 1.8" fill="none" stroke="#2a2a2a" stroke-width="1.3"/></svg></div><div class="nm">F.Fab</div></div>
<div class="lay" style="top:342px"><div class="sw" style="background:#0f2a9c"></div><div class="cb"><svg width="11" height="11" viewBox="0 0 11 11" style="position:absolute;left:0;top:0"><path d="M2.5 5.5 L4.6 8.3 L8.8 1.8" fill="none" stroke="#2a2a2a" stroke-width="1.3"/></svg></div><div class="nm">B.Fab</div></div>
</div>
<svg class="a" style="left:1755px;top:403px" width="8" height="11" viewBox="0 0 8 11"><path d="M1 1 L7 5.5 L1 10 Z" fill="#5a7ff2"/></svg>
<div class="a" style="left:0;top:1039px;width:1920px;height:1px;background:#bdbdbd"></div>
<div class="a" style="left:0;top:1040px;width:1920px;height:1px;background:#fbfbfb"></div>
<div class="a" style="left:1700px;top:1012px;width:36px;height:1px;background:#dedede"></div>
<div class="st" style="left:11px;top:1013.5px;color:#106010">Pads</div><div class="st" style="left:11px;top:1026.5px;color:#106010">39</div>
<div class="st" style="left:67px;top:1013.5px;color:#106010">Vias</div><div class="st" style="left:67px;top:1026.5px;color:#106010">0</div>
<div class="st" style="left:119.5px;top:1013.5px;color:#106010">Track Segments</div><div class="st" style="left:119.5px;top:1026.5px;color:#106010">94</div>
<div class="st" style="left:234px;top:1013.5px;color:#106010">Nodes</div><div class="st" style="left:234px;top:1026.5px;color:#106010">39</div>
<div class="st" style="left:298px;top:1013.5px;color:#9a0c0c">Nets</div><div class="st" style="left:298px;top:1026.5px;color:#9a0c0c">18</div>
<div class="st" style="left:352.5px;top:1013.5px;color:#16168c">Unrouted</div><div class="st" style="left:352.5px;top:1026.5px;color:#16168c">1</div>
<div class="st" style="left:1212.5px;top:1041px;color:#1a1a1a">Z 4.43</div>
<div class="st" style="left:1273px;top:1041px;color:#1a1a1a;word-spacing:0px">X 205.000000&nbsp;&nbsp;Y 67.800000</div>
<div class="st" style="left:1453.5px;top:1041px;color:#1a1a1a">dx 205.000000&nbsp;&nbsp;dy 67.800000&nbsp;&nbsp;dist 215.921</div>
<div class="st" style="left:1733px;top:1041px;color:#1a1a1a">mm</div>
<div class="st" style="left:1777px;top:1041px;color:#1a1a1a">Add zones</div>

<div id="bot"></div>
</body></html>
